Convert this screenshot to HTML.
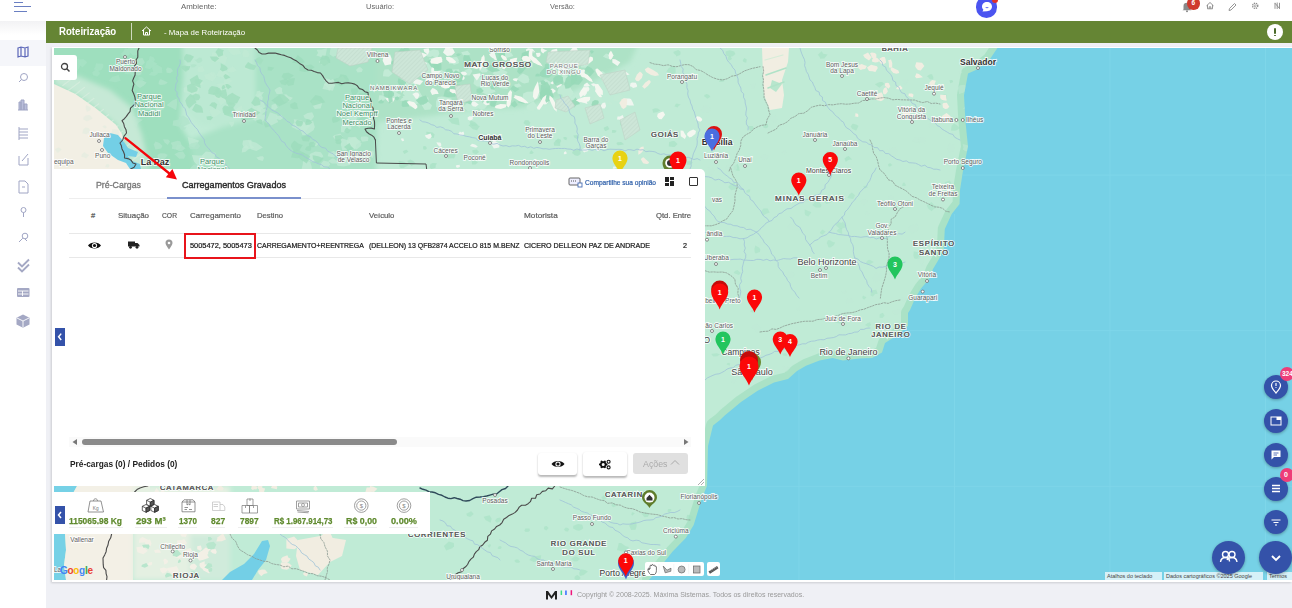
<!DOCTYPE html>
<html><head><meta charset="utf-8">
<style>
*{box-sizing:border-box;margin:0;padding:0}
html,body{width:1292px;height:608px;overflow:hidden;background:#eff0f5;font-family:"Liberation Sans",sans-serif;position:relative}
.abs{position:absolute}
.nw{white-space:nowrap}
#topbar{left:0;top:0;width:1292px;height:21px;background:#fff}
#side{left:0;top:21px;width:46px;height:587px;background:#fff}
#green{left:46px;top:21px;width:1246px;height:22px;background:#658534}
#mapcard{left:52px;top:47px;width:1240px;height:535px;background:#fff;box-shadow:-1px 1px 2px rgba(0,0,0,.15)}
.tb{font-size:8px;color:#666;top:1px}
.panel{left:53px;top:169px;width:652px;height:317px;background:#fff;border-radius:0 5px 0 0}
.th{position:absolute;top:211px;font-size:7.5px;color:#5c5c5c;white-space:nowrap;-webkit-text-stroke:0.2px #5c5c5c}
.td{position:absolute;top:241px;font-size:7.5px;color:#1a1a1a;white-space:nowrap;-webkit-text-stroke:0.22px #1a1a1a}
.fab{position:absolute;width:24px;height:24px;border-radius:50%;background:#3452a9;box-shadow:0 1px 3px rgba(0,0,0,.3)}
.fab svg{position:absolute;left:0;top:0}
.sum{position:absolute;top:515px;font-size:9.5px;font-weight:bold;color:#5f8a2e;white-space:nowrap;-webkit-text-stroke:0.25px #5f8a2e}
.sic{position:absolute;left:15px;width:16px;height:16px}
.uline{position:absolute;top:527px;height:1px;background:#eee}
</style></head><body>
<div id="topbar" class="abs"></div>
<div id="side" class="abs"></div>
<div class="abs" style="left:0;top:21px;width:46px;height:14px;background:linear-gradient(#f2f2f4,#fff)"></div>
<div id="green" class="abs"></div>
<div id="mapcard" class="abs"></div>

<!-- MAP -->
<svg class="abs" style="left:0;top:0" width="1292" height="608" viewBox="0 0 1292 608" font-family="Liberation Sans, sans-serif">
<defs><clipPath id="mc"><rect x="54" y="48" width="1238" height="532"></rect></clipPath></defs>
<g clip-path="url(#mc)">
<rect x="54" y="48" width="1238" height="532" fill="#c0ebd6"></rect>
<defs><filter id="bl" x="-5%" y="-5%" width="110%" height="110%"><feGaussianBlur stdDeviation="2.5"></feGaussianBlur></filter><filter id="bl1"><feGaussianBlur stdDeviation="0.6"></feGaussianBlur></filter><pattern id="hatch" width="3" height="3" patternUnits="userSpaceOnUse" patternTransform="rotate(45)"><rect width="3" height="3" fill="#cde6d8"></rect><line x1="0" y1="0" x2="0" y2="3" stroke="#bdd5c7" stroke-width="0.8"></line></pattern></defs>
<g filter="url(#bl)">
<path d="M40,40 190,40 185,60 182,90 180,125 195,150 200,175 40,175Z" fill="#9edfbe"></path>
<path d="M182,40 262,40 258,80 255,120 230,128 200,125 185,110Z" fill="#bce9d3"></path>
<path d="M255,40 380,40 376,175 195,175 190,140 220,128 256,118Z" fill="#a9e2c6"></path>
<path d="M376,40 640,40 630,62 600,78 560,98 520,108 470,110 430,116 376,122Z" fill="#ade2c6"></path>
</g>
<path d="M249.4,67.8 248.3,69.9 244.7,69.7 244.5,67.2 247.6,64.7Z" fill="#c0ead5" opacity="0.8"></path>
<path d="M216.8,75.9 212.8,81.5 205.4,78.7 203.9,74.8 210.7,73.2Z" fill="#c0ead5" opacity="0.8"></path>
<path d="M299.0,125.7 297.4,127.6 294.5,128.5 291.5,127.0 293.0,124.6 293.9,122.4 296.6,123.4Z" fill="#c0ead5" opacity="0.8"></path>
<path d="M282.0,91.2 283.0,93.4 280.0,93.9 276.7,94.0 274.5,89.9 277.1,88.0 279.6,86.8 282.2,88.3Z" fill="#c0ead5" opacity="0.8"></path>
<path d="M352.2,159.8 350.1,165.0 343.9,166.5 337.7,165.7 335.6,162.1 339.0,157.7 344.6,157.4 349.4,156.5Z" fill="#c0ead5" opacity="0.8"></path>
<path d="M264.0,158.1 262.7,160.9 260.0,160.2 258.7,159.9 256.3,157.4 258.6,157.1 260.2,156.2 263.0,156.2Z" fill="#c0ead5" opacity="0.8"></path>
<path d="M239.8,50.7 241.2,53.6 233.2,55.5 230.5,53.1 227.3,49.1 231.2,46.7 234.6,46.3 238.6,47.5Z" fill="#c0ead5" opacity="0.8"></path>
<path d="M223.5,166.0 223.5,167.2 222.0,168.7 218.9,169.6 218.6,166.0 218.6,164.7 221.0,164.2 225.5,163.9Z" fill="#c0ead5" opacity="0.8"></path>
<path d="M277.8,107.6 274.9,110.2 271.3,108.4 271.6,105.1 275.5,103.6Z" fill="#c0ead5" opacity="0.8"></path>
<path d="M334.9,84.5 333.0,90.8 322.4,88.9 324.6,83.1 333.5,78.7Z" fill="#c0ead5" opacity="0.8"></path>
<path d="M353.9,144.2 350.3,147.3 348.6,149.5 342.2,150.2 340.7,143.7 342.2,138.5 348.7,140.4 350.1,141.6Z" fill="#c0ead5" opacity="0.8"></path>
<path d="M229.1,74.6 225.7,78.3 216.2,76.1 218.6,71.1 223.2,68.8Z" fill="#c0ead5" opacity="0.8"></path>
<path d="M251.7,144.9 254.4,147.8 249.8,148.9 244.0,148.0 242.4,144.2 243.0,140.5 247.0,140.1 251.4,139.8Z" fill="#c0ead5" opacity="0.8"></path>
<path d="M329.4,63.3 325.7,64.7 321.4,65.1 318.8,62.0 321.0,59.7 326.2,59.5Z" fill="#c0ead5" opacity="0.8"></path>
<path d="M277.1,119.8 278.3,122.1 270.1,125.9 265.3,123.6 266.9,119.7 268.7,115.8 269.9,112.3 277.3,114.8Z" fill="#c0ead5" opacity="0.8"></path>
<path d="M337.6,153.7 333.9,157.5 327.6,156.2 328.8,152.2 333.8,151.0Z" fill="#c0ead5" opacity="0.8"></path>
<path d="M322.3,102.7 320.6,108.5 314.8,109.1 313.6,106.9 311.5,103.6 311.6,100.2 316.4,99.9 319.0,100.9Z" fill="#c0ead5" opacity="0.8"></path>
<path d="M337.4,161.8 336.3,163.5 332.0,163.6 328.1,161.4 329.3,160.2 332.0,158.4 334.1,158.7Z" fill="#c0ead5" opacity="0.8"></path>
<path d="M326.5,51.3 325.6,55.5 324.1,57.9 316.3,55.6 318.1,53.1 316.6,49.8 321.7,49.4 326.9,48.2Z" fill="#c0ead5" opacity="0.8"></path>
<path d="M346.3,80.6 343.4,83.6 337.8,83.1 336.1,79.6 337.8,78.4 342.9,75.9Z" fill="#c0ead5" opacity="0.8"></path>
<path d="M232.8,80.8 227.5,84.6 223.7,84.5 224.0,79.9 227.6,78.5Z" fill="#c0ead5" opacity="0.8"></path>
<path d="M228.7,86.0 225.8,90.0 220.2,92.7 220.7,88.7 216.2,84.0 222.4,83.3 227.2,82.7Z" fill="#c0ead5" opacity="0.8"></path>
<path d="M314.8,126.9 313.5,130.3 306.3,135.0 302.4,135.1 298.6,125.1 300.6,124.1 310.3,121.5 313.1,121.0Z" fill="#c0ead5" opacity="0.8"></path>
<path d="M261.2,110.1 261.1,112.3 257.8,114.0 250.1,113.3 253.8,108.7 257.4,105.9 259.8,106.0Z" fill="#c0ead5" opacity="0.8"></path>
<path d="M203.7,83.3 201.9,85.1 198.9,85.5 196.4,83.4 197.0,79.7 202.9,81.1Z" fill="#c0ead5" opacity="0.8"></path>
<path d="M361.6,143.3 360.7,146.3 356.5,149.4 349.0,146.0 346.5,142.8 348.0,137.2 355.8,136.7 358.2,140.6Z" fill="#c0ead5" opacity="0.8"></path>
<path d="M318.9,143.4 316.1,146.4 314.4,145.6 312.2,144.9 313.8,142.5 316.4,142.7Z" fill="#c0ead5" opacity="0.8"></path>
<path d="M369.6,154.4 364.1,159.0 356.7,160.2 355.3,153.3 365.8,151.7Z" fill="#c0ead5" opacity="0.8"></path>
<path d="M265.5,107.0 261.7,108.9 257.0,113.2 251.4,109.7 253.2,106.0 254.8,100.5 263.4,102.0Z" fill="#c0ead5" opacity="0.8"></path>
<path d="M247.7,111.9 243.4,113.6 241.6,115.0 238.1,113.2 232.8,110.9 238.0,107.5 242.1,105.3 242.1,108.5Z" fill="#c0ead5" opacity="0.8"></path>
<path d="M330.5,81.4 328.8,83.9 326.7,84.6 325.1,81.7 323.6,80.5 326.3,78.6 328.4,78.7Z" fill="#c0ead5" opacity="0.8"></path>
<path d="M249.2,148.8 245.2,151.9 241.7,152.6 242.4,148.1 246.5,144.5Z" fill="#c0ead5" opacity="0.8"></path>
<path d="M204.3,158.7 204.1,164.8 199.4,167.5 193.9,161.6 191.9,154.9 198.3,155.6 204.6,155.5Z" fill="#c0ead5" opacity="0.8"></path>
<path d="M359.1,113.7 355.7,120.9 348.2,119.1 342.6,117.3 346.9,111.5 353.7,111.3Z" fill="#c0ead5" opacity="0.8"></path>
<path d="M330.3,164.6 327.3,167.5 324.4,167.7 319.7,167.4 321.1,163.4 323.5,160.6 328.5,161.8Z" fill="#c0ead5" opacity="0.8"></path>
<path d="M237.0,70.3 232.7,72.6 227.6,71.9 228.9,68.7 232.3,66.3Z" fill="#c0ead5" opacity="0.8"></path>
<path d="M283.5,117.8 280.8,119.7 279.4,120.0 276.7,119.1 276.3,115.4 279.6,116.1 281.2,114.8Z" fill="#c0ead5" opacity="0.8"></path>
<path d="M358.9,105.7 357.2,108.2 354.6,107.5 354.1,107.2 352.0,105.8 353.6,103.6 355.5,103.2 357.2,104.2Z" fill="#c0ead5" opacity="0.8"></path>
<path d="M199.2,140.8 194.1,147.4 189.6,146.2 188.6,141.8 187.7,137.1 194.1,138.7Z" fill="#c0ead5" opacity="0.8"></path>
<path d="M342.2,49.4 338.2,54.8 333.1,56.8 329.5,54.3 330.6,48.0 330.9,42.1 339.0,47.0Z" fill="#c0ead5" opacity="0.8"></path>
<path d="M231.7,99.3 231.3,102.9 228.1,104.1 224.4,101.0 222.9,98.9 226.6,96.2 229.8,97.9Z" fill="#c0ead5" opacity="0.8"></path>
<path d="M335.4,85.9 331.5,87.5 329.0,91.4 327.6,87.4 323.8,84.5 326.7,81.9 329.3,79.0 332.1,82.2Z" fill="#c0ead5" opacity="0.8"></path>
<path d="M204.5,70.5 203.2,71.9 198.6,72.0 197.3,69.8 197.8,67.8 202.3,65.8Z" fill="#c0ead5" opacity="0.8"></path>
<path d="M212.6,164.3 209.6,166.2 206.3,166.1 203.8,163.7 205.1,160.0 211.1,160.0Z" fill="#c0ead5" opacity="0.8"></path>
<path d="M234.0,123.4 233.3,125.5 231.5,126.9 230.6,125.3 229.0,123.1 229.3,122.1 231.9,121.8 233.8,121.2Z" fill="#c0ead5" opacity="0.8"></path>
<path d="M361.9,124.4 359.3,128.0 357.3,126.0 356.7,123.5 360.3,123.4Z" fill="#c0ead5" opacity="0.8"></path>
<path d="M342.7,136.7 341.8,142.1 336.2,140.7 332.7,136.6 334.8,135.0 340.3,133.6Z" fill="#c0ead5" opacity="0.8"></path>
<path d="M374.0,153.7 372.8,158.0 368.6,155.9 367.3,152.2 373.3,150.5Z" fill="#c0ead5" opacity="0.8"></path>
<path d="M351.7,127.8 348.4,132.5 341.1,132.2 340.9,126.5 347.6,121.0Z" fill="#c0ead5" opacity="0.8"></path>
<path d="M227.2,57.7 225.1,64.2 218.0,61.5 211.4,61.4 212.0,52.3 217.5,52.8 223.4,53.2Z" fill="#c0ead5" opacity="0.8"></path>
<path d="M374.4,119.6 372.5,123.1 366.8,119.7 365.8,116.1 370.5,115.4Z" fill="#c0ead5" opacity="0.8"></path>
<path d="M215.8,74.5 213.6,76.7 211.4,76.2 210.0,74.6 208.9,73.7 211.2,71.9 214.4,72.3Z" fill="#c0ead5" opacity="0.8"></path>
<path d="M221.3,112.3 216.3,116.4 212.9,117.6 209.9,112.2 210.0,109.7 218.0,109.6Z" fill="#c0ead5" opacity="0.8"></path>
<path d="M262.7,97.2 262.2,101.5 254.4,101.1 256.2,96.7 259.9,92.6Z" fill="#c0ead5" opacity="0.8"></path>
<path d="M266.3,116.7 264.2,120.2 260.6,122.6 252.3,119.6 255.7,114.9 260.3,114.1 265.0,114.8Z" fill="#c0ead5" opacity="0.8"></path>
<path d="M310.3,125.7 305.2,131.8 295.4,129.2 293.8,119.2 301.2,120.3Z" fill="#c0ead5" opacity="0.8"></path>
<path d="M267.4,110.0 263.0,113.5 259.6,115.9 256.7,113.8 256.6,111.5 256.5,107.7 261.8,106.9 263.3,108.7Z" fill="#c0ead5" opacity="0.8"></path>
<path d="M264.0,92.1 261.6,95.4 258.6,97.1 255.0,95.4 256.5,93.5 256.4,91.6 259.6,90.4 260.8,92.2Z" fill="#c0ead5" opacity="0.8"></path>
<path d="M214.3,158.8 213.7,162.8 207.4,162.3 200.1,160.7 202.3,154.9 205.8,151.6 215.8,152.7Z" fill="#c0ead5" opacity="0.8"></path>
<path d="M362.8,69.2 361.8,72.0 357.6,72.4 356.0,70.0 358.4,67.6 360.2,67.1Z" fill="#c0ead5" opacity="0.8"></path>
<path d="M249.7,54.6 248.3,57.3 243.0,56.8 242.5,53.9 243.5,49.1 248.0,50.8Z" fill="#c0ead5" opacity="0.8"></path>
<path d="M323.4,156.2 319.0,160.5 311.5,161.9 307.2,159.8 310.3,153.8 315.4,151.6 320.9,152.3Z" fill="#c0ead5" opacity="0.8"></path>
<path d="M311.7,166.7 311.9,170.3 305.4,170.9 301.4,169.7 302.7,164.4 303.0,161.0 310.1,161.4Z" fill="#c0ead5" opacity="0.8"></path>
<path d="M293.0,97.8 289.2,101.4 284.2,102.1 283.3,100.8 279.7,95.6 286.2,94.3 288.3,96.2Z" fill="#c0ead5" opacity="0.8"></path>
<path d="M314.1,116.6 311.3,120.2 307.5,119.2 304.7,118.3 303.3,115.5 307.6,113.1 312.2,112.3Z" fill="#c0ead5" opacity="0.8"></path>
<path d="M228.5,97.8 226.1,101.0 220.4,105.7 219.0,100.9 213.9,97.3 216.2,93.9 222.3,94.2 225.5,94.9Z" fill="#c0ead5" opacity="0.8"></path>
<path d="M199.3,88.8 197.8,94.6 191.1,93.8 183.7,92.2 183.9,87.7 189.7,85.8 196.3,84.0Z" fill="#c0ead5" opacity="0.8"></path>
<path d="M368.6,137.8 367.8,140.9 362.0,141.8 360.7,138.8 360.9,136.7 363.3,136.4 366.9,136.6Z" fill="#c0ead5" opacity="0.8"></path>
<path d="M361.1,141.5 356.3,144.8 355.1,149.7 350.3,145.8 349.3,144.0 348.8,138.8 354.0,137.2 356.5,138.5Z" fill="#c0ead5" opacity="0.8"></path>
<path d="M262.9,147.6 256.3,151.0 250.8,149.2 247.7,140.1 256.3,142.8Z" fill="#c0ead5" opacity="0.8"></path>
<path d="M186.3,127.6 184.8,129.5 182.7,129.8 181.1,129.9 179.8,128.0 179.2,126.1 182.6,125.1 184.1,127.3Z" fill="#b0e4ca" opacity="0.8"></path>
<path d="M163.1,107.5 161.3,110.9 155.6,110.3 156.7,106.3 159.6,103.2Z" fill="#b0e4ca" opacity="0.8"></path>
<path d="M202.4,60.8 200.1,62.8 197.6,62.9 196.8,61.7 194.3,59.8 196.6,59.4 199.4,57.5 201.5,58.0Z" fill="#b0e4ca" opacity="0.8"></path>
<path d="M173.0,71.1 170.4,73.3 168.2,73.1 166.6,72.8 166.1,69.2 167.7,67.2 171.2,68.5Z" fill="#b0e4ca" opacity="0.8"></path>
<path d="M170.1,141.2 167.7,145.1 164.6,142.6 163.1,139.3 168.2,139.4Z" fill="#b0e4ca" opacity="0.8"></path>
<path d="M167.9,155.0 164.0,159.5 158.4,159.7 157.3,155.1 160.2,153.2 165.0,153.5Z" fill="#b0e4ca" opacity="0.8"></path>
<path d="M202.4,166.4 198.7,173.6 193.2,171.2 189.9,168.5 193.5,164.7 198.6,164.6Z" fill="#b0e4ca" opacity="0.8"></path>
<path d="M162.4,145.7 161.3,148.4 155.4,149.4 153.7,144.6 155.4,141.5 159.6,142.9Z" fill="#b0e4ca" opacity="0.8"></path>
<path d="M185.6,155.4 184.0,158.8 179.2,158.8 174.4,154.2 178.7,152.0 182.9,151.4Z" fill="#b0e4ca" opacity="0.8"></path>
<path d="M177.2,103.9 176.1,110.3 172.1,107.9 166.5,105.2 172.4,100.6 176.8,98.5Z" fill="#b0e4ca" opacity="0.8"></path>
<path d="M167.9,82.5 165.0,84.6 161.0,84.9 158.6,84.3 158.8,81.7 160.0,79.2 161.0,79.2 163.9,80.4Z" fill="#b0e4ca" opacity="0.8"></path>
<path d="M163.3,104.7 163.8,109.4 156.0,110.2 154.6,106.1 152.9,104.1 156.5,101.1 161.9,101.5Z" fill="#b0e4ca" opacity="0.8"></path>
<path d="M185.6,148.3 181.8,151.0 178.8,151.1 175.4,148.9 177.4,144.5 181.8,145.3Z" fill="#b0e4ca" opacity="0.8"></path>
<path d="M153.3,106.8 150.7,109.4 145.9,109.3 144.7,105.8 146.8,103.5 149.4,103.0Z" fill="#b0e4ca" opacity="0.8"></path>
<path d="M143.0,119.7 137.9,123.3 136.5,127.2 131.7,122.2 132.0,120.3 133.4,115.8 138.2,118.2Z" fill="#b0e4ca" opacity="0.8"></path>
<path d="M200.2,146.1 197.9,149.3 190.4,149.3 188.3,146.0 191.2,143.5 197.1,142.1Z" fill="#b0e4ca" opacity="0.8"></path>
<path d="M141.7,72.2 141.3,74.2 139.0,75.6 135.5,74.9 136.1,72.4 136.2,70.4 138.3,69.5 140.9,71.4Z" fill="#b0e4ca" opacity="0.8"></path>
<path d="M163.2,163.5 160.5,165.2 155.0,165.6 157.7,162.4 160.6,160.6Z" fill="#b0e4ca" opacity="0.8"></path>
<path d="M146.7,82.5 143.9,85.6 140.0,88.0 137.3,86.2 134.8,83.2 137.8,80.2 141.0,79.4 143.1,80.7Z" fill="#b0e4ca" opacity="0.8"></path>
<path d="M170.3,164.9 170.3,168.3 164.9,170.9 162.2,170.0 159.7,164.2 161.3,163.4 164.2,162.0 170.8,162.8Z" fill="#b0e4ca" opacity="0.8"></path>
<path d="M181.9,145.6 179.9,148.7 177.0,149.7 171.8,148.8 172.4,145.9 170.7,142.8 177.5,140.8 180.2,141.3Z" fill="#b0e4ca" opacity="0.8"></path>
<path d="M188.7,120.1 190.2,123.6 182.9,126.8 179.6,122.8 179.2,117.2 183.2,115.4 187.3,118.2Z" fill="#b0e4ca" opacity="0.8"></path>
<path d="M180.7,124.0 179.1,126.7 176.7,126.2 172.6,125.4 173.3,120.5 179.2,119.6Z" fill="#b0e4ca" opacity="0.8"></path>
<path d="M144.9,62.6 142.1,65.4 137.1,63.9 135.4,61.5 136.9,58.8 142.5,58.1Z" fill="#b0e4ca" opacity="0.8"></path>
<path d="M197.0,65.0 194.2,67.2 191.5,67.5 190.6,64.5 194.5,64.3Z" fill="#b0e4ca" opacity="0.8"></path>
<path d="M219.3,89.2 218.3,93.1 213.8,95.1 208.3,93.7 208.5,90.3 210.0,87.5 211.9,85.9 217.3,87.1Z" fill="#a3dfc0" opacity="0.9"></path>
<path d="M235.6,111.1 233.0,117.4 224.2,114.8 223.2,106.4 232.6,107.0Z" fill="#a3dfc0" opacity="0.9"></path>
<path d="M189.2,69.3 186.8,70.3 186.1,72.0 182.9,69.4 181.0,67.4 182.2,65.9 185.1,65.5 187.6,66.5Z" fill="#a3dfc0" opacity="0.9"></path>
<path d="M217.3,104.3 215.8,109.3 212.3,106.8 209.3,105.4 211.8,102.5 214.6,102.2Z" fill="#a3dfc0" opacity="0.9"></path>
<path d="M227.8,68.3 226.9,70.1 222.6,71.5 219.9,69.6 220.9,66.9 220.7,63.3 226.0,65.9Z" fill="#a3dfc0" opacity="0.9"></path>
<path d="M235.8,104.3 233.7,107.2 230.6,109.3 227.9,105.0 228.8,101.6 233.5,103.0Z" fill="#a3dfc0" opacity="0.9"></path>
<path d="M221.4,90.9 220.2,93.1 217.5,94.7 214.8,90.8 217.2,87.4 219.6,88.2Z" fill="#a3dfc0" opacity="0.9"></path>
<path d="M219.2,58.5 215.0,62.0 211.9,60.3 209.8,56.6 216.6,56.4Z" fill="#a3dfc0" opacity="0.9"></path>
<path d="M189.8,68.0 188.9,69.7 187.1,70.7 185.0,68.6 185.4,67.5 186.8,66.3 190.3,66.1Z" fill="#a3dfc0" opacity="0.9"></path>
<path d="M221.0,95.3 220.3,97.4 218.6,98.1 216.1,97.0 214.9,95.3 213.1,93.4 217.1,91.1 222.8,93.3Z" fill="#a3dfc0" opacity="0.9"></path>
<path d="M199.8,81.1 200.7,87.9 191.4,84.3 189.7,79.4 197.3,74.7Z" fill="#a3dfc0" opacity="0.9"></path>
<path d="M202.9,80.8 200.4,83.4 196.4,84.3 194.7,81.0 195.3,78.9 200.2,79.2Z" fill="#a3dfc0" opacity="0.9"></path>
<path d="M227.1,94.8 226.2,99.7 221.5,97.2 219.3,94.7 220.7,90.8 225.7,89.0Z" fill="#a3dfc0" opacity="0.9"></path>
<path d="M263.3,60.1 260.4,64.6 254.7,61.2 255.8,58.9 259.4,57.1Z" fill="#a3dfc0" opacity="0.9"></path>
<path d="M202.5,108.5 203.2,112.8 196.1,112.5 192.0,110.0 195.6,103.4 201.0,105.9Z" fill="#a3dfc0" opacity="0.9"></path>
<path d="M196.5,102.6 194.1,104.1 189.2,108.5 186.8,105.5 185.3,100.7 186.6,98.0 190.3,93.9 193.7,95.9Z" fill="#a3dfc0" opacity="0.9"></path>
<path d="M233.4,109.9 232.9,113.1 225.4,115.0 223.0,112.6 222.3,108.2 225.0,105.3 232.3,107.7Z" fill="#a3dfc0" opacity="0.9"></path>
<path d="M225.6,87.6 224.8,88.3 222.2,89.8 221.6,87.6 222.6,85.5 224.2,84.7Z" fill="#a3dfc0" opacity="0.9"></path>
<path d="M232.0,87.3 230.2,87.5 228.2,89.2 226.9,88.0 225.9,86.7 225.4,84.1 227.5,83.9 230.1,85.5Z" fill="#a3dfc0" opacity="0.9"></path>
<path d="M253.4,115.9 254.2,118.8 248.4,119.7 241.9,120.2 239.4,114.8 241.3,110.7 246.4,111.3 250.7,112.8Z" fill="#a3dfc0" opacity="0.9"></path>
<path d="M200.3,97.4 198.8,100.0 196.1,100.6 193.8,98.4 190.7,96.6 195.7,93.4 199.4,94.7Z" fill="#a3dfc0" opacity="0.9"></path>
<path d="M260.4,112.5 253.1,117.7 247.5,113.4 247.0,110.5 251.4,107.7Z" fill="#a3dfc0" opacity="0.9"></path>
<path d="M194.0,56.8 190.2,62.2 187.5,62.4 184.2,59.3 184.0,57.2 186.1,53.9 190.3,54.8Z" fill="#a3dfc0" opacity="0.9"></path>
<path d="M197.9,88.5 197.0,91.2 191.7,92.9 187.5,91.1 187.2,88.6 187.0,85.6 191.2,83.5 193.9,84.8Z" fill="#a3dfc0" opacity="0.9"></path>
<path d="M256.6,66.0 254.0,70.1 249.6,69.3 245.0,67.6 245.1,66.0 248.1,62.1 251.3,63.9Z" fill="#a3dfc0" opacity="0.9"></path>
<path d="M260.3,102.0 260.3,104.8 254.7,106.1 251.1,102.9 255.2,96.6 258.9,97.8Z" fill="#a3dfc0" opacity="0.9"></path>
<path d="M240.3,97.3 237.0,103.3 230.4,104.8 226.8,104.2 225.2,97.9 227.5,95.8 232.2,92.8 236.2,95.3Z" fill="#a3dfc0" opacity="0.9"></path>
<path d="M230.5,77.4 228.2,78.3 225.8,79.6 224.4,77.9 223.3,76.1 225.4,74.0 228.1,75.6Z" fill="#a3dfc0" opacity="0.9"></path>
<path d="M213.2,117.6 210.7,120.2 207.1,119.8 206.4,116.4 210.6,116.1Z" fill="#a3dfc0" opacity="0.9"></path>
<path d="M222.8,52.1 223.2,55.3 218.6,57.1 216.4,53.4 215.4,51.9 218.2,48.3 223.9,50.3Z" fill="#a3dfc0" opacity="0.9"></path>
<path d="M343.2,137.7 338.7,140.9 335.2,140.9 335.0,135.7 341.0,135.0Z" fill="#9cdcbc" opacity="0.8"></path>
<path d="M314.6,67.2 308.9,71.0 304.9,71.9 299.4,70.7 299.8,65.1 304.2,65.7 311.0,64.6Z" fill="#9cdcbc" opacity="0.8"></path>
<path d="M369.2,97.2 366.9,101.3 360.7,100.3 359.0,93.2 366.9,93.1Z" fill="#9cdcbc" opacity="0.8"></path>
<path d="M274.3,67.7 271.3,70.7 267.6,70.3 267.9,66.7 271.2,67.0Z" fill="#9cdcbc" opacity="0.8"></path>
<path d="M289.5,81.5 285.3,85.2 281.5,84.3 279.4,81.0 286.3,78.4Z" fill="#9cdcbc" opacity="0.8"></path>
<path d="M312.3,122.5 309.8,124.6 305.8,125.3 305.3,123.3 306.8,119.1 309.5,119.8Z" fill="#9cdcbc" opacity="0.8"></path>
<path d="M340.4,119.8 338.2,121.2 337.0,121.9 333.0,122.9 331.9,119.5 332.6,117.2 336.0,115.9 337.8,117.0Z" fill="#9cdcbc" opacity="0.8"></path>
<path d="M358.3,91.4 356.3,94.0 352.9,95.9 351.1,91.8 351.2,88.6 357.3,88.5Z" fill="#9cdcbc" opacity="0.8"></path>
<path d="M315.7,143.5 314.3,147.0 309.9,147.4 308.8,143.8 310.3,142.1 313.3,142.0Z" fill="#9cdcbc" opacity="0.8"></path>
<path d="M368.3,119.1 368.0,122.5 361.9,122.0 357.0,120.5 360.4,117.9 362.7,116.4 365.3,114.8Z" fill="#9cdcbc" opacity="0.8"></path>
<path d="M341.6,141.8 340.4,144.3 336.9,144.0 335.2,142.3 336.8,139.7 340.8,139.4Z" fill="#9cdcbc" opacity="0.8"></path>
<path d="M310.2,156.3 306.8,163.4 301.0,159.8 297.2,156.6 302.6,152.2 307.3,154.5Z" fill="#9cdcbc" opacity="0.8"></path>
<path d="M294.3,81.1 293.7,84.7 288.5,86.0 285.7,83.1 288.8,78.7 295.0,78.1Z" fill="#9cdcbc" opacity="0.8"></path>
<path d="M349.2,80.3 347.3,83.0 340.6,86.3 336.0,82.7 333.2,79.3 339.0,77.8 340.5,74.3 346.3,75.2Z" fill="#9cdcbc" opacity="0.8"></path>
<path d="M311.0,136.7 308.6,141.5 302.8,140.9 301.2,137.1 304.3,136.0 308.0,135.3Z" fill="#9cdcbc" opacity="0.8"></path>
<path d="M323.7,158.5 318.6,163.5 315.7,162.3 313.0,159.0 312.6,155.2 318.3,156.2Z" fill="#9cdcbc" opacity="0.8"></path>
<path d="M270.9,125.5 268.7,126.8 265.4,127.4 264.1,124.5 264.3,122.2 268.1,122.4Z" fill="#9cdcbc" opacity="0.8"></path>
<path d="M302.7,145.1 299.7,149.9 294.4,152.5 292.9,149.8 290.9,146.5 291.2,144.2 294.4,140.5 298.7,143.7Z" fill="#9cdcbc" opacity="0.8"></path>
<path d="M297.2,105.4 298.3,108.8 293.6,109.2 290.4,107.4 290.2,104.2 294.8,102.0 297.2,103.4Z" fill="#9cdcbc" opacity="0.8"></path>
<path d="M304.9,62.1 302.1,63.2 298.7,63.5 291.8,62.4 294.7,59.6 297.7,55.0 302.1,58.7Z" fill="#9cdcbc" opacity="0.8"></path>
<path d="M353.4,148.3 351.7,149.7 346.7,152.1 347.0,149.3 343.9,147.0 349.5,142.9 351.0,146.1Z" fill="#9cdcbc" opacity="0.8"></path>
<path d="M289.9,100.3 285.6,103.3 279.3,106.2 271.5,100.4 279.5,94.4 284.1,94.9Z" fill="#9cdcbc" opacity="0.8"></path>
<path d="M261.9,121.6 262.6,124.9 260.3,123.7 257.6,123.1 256.7,121.7 256.0,120.5 260.2,119.2 262.3,120.0Z" fill="#9cdcbc" opacity="0.8"></path>
<path d="M325.2,102.3 319.0,104.1 312.8,105.7 309.9,101.3 315.7,95.0 321.0,96.6Z" fill="#9cdcbc" opacity="0.8"></path>
<path d="M304.8,153.4 297.8,158.2 291.0,157.5 293.1,150.7 297.9,149.4Z" fill="#9cdcbc" opacity="0.8"></path>
<path d="M293.8,75.5 289.3,79.0 284.9,79.7 281.5,76.8 283.5,73.3 288.6,72.7Z" fill="#9cdcbc" opacity="0.8"></path>
<path d="M330.1,60.1 330.2,62.8 324.4,65.8 319.9,63.7 320.3,59.4 322.2,55.6 327.3,56.1 328.8,57.2Z" fill="#9cdcbc" opacity="0.8"></path>
<path d="M302.8,122.9 302.4,124.8 301.0,126.6 297.0,126.0 295.4,122.7 296.9,120.0 301.1,120.8 303.1,121.4Z" fill="#9cdcbc" opacity="0.8"></path>
<path d="M350.8,130.1 348.4,133.2 347.0,133.2 344.2,132.1 345.0,129.2 347.0,127.2 348.1,128.6Z" fill="#9cdcbc" opacity="0.8"></path>
<path d="M311.3,148.4 310.6,150.5 309.1,151.1 306.8,150.4 305.0,149.6 306.5,146.7 310.0,145.4 310.5,146.9Z" fill="#9cdcbc" opacity="0.8"></path>
<path d="M81.2,64.0 77.5,70.9 71.7,68.3 69.0,62.3 78.7,58.5Z" fill="#a8e2c6" opacity="0.8"></path>
<path d="M130.8,51.9 129.4,54.9 124.7,56.8 122.9,54.4 123.8,50.0 125.6,48.4 129.2,49.4Z" fill="#a8e2c6" opacity="0.8"></path>
<path d="M161.8,67.3 162.5,73.1 153.6,73.0 152.1,68.1 153.2,62.2 159.2,65.9Z" fill="#a8e2c6" opacity="0.8"></path>
<path d="M87.4,62.2 82.5,67.6 78.7,64.3 78.2,59.8 83.5,59.0Z" fill="#a8e2c6" opacity="0.8"></path>
<path d="M103.4,67.0 101.3,70.1 98.5,71.1 93.5,69.3 95.3,67.1 96.0,63.2 98.3,63.4 103.3,63.8Z" fill="#a8e2c6" opacity="0.8"></path>
<path d="M129.0,54.5 125.5,56.2 124.3,58.6 121.5,55.3 121.0,53.2 124.8,50.7 128.4,51.4Z" fill="#a8e2c6" opacity="0.8"></path>
<path d="M154.7,59.3 154.4,61.5 150.4,61.6 149.2,59.7 149.9,55.8 154.0,57.6Z" fill="#a8e2c6" opacity="0.8"></path>
<path d="M144.8,79.5 141.6,80.5 138.5,80.8 138.4,76.8 142.0,77.3Z" fill="#a8e2c6" opacity="0.8"></path>
<path d="M100.0,72.8 99.7,74.2 97.3,76.4 93.0,75.3 92.2,72.3 93.9,70.9 97.2,68.7 98.6,71.4Z" fill="#a8e2c6" opacity="0.8"></path>
<path d="M130.1,71.1 130.3,74.6 127.1,74.2 124.1,73.4 125.6,70.5 127.8,68.8 129.4,69.0Z" fill="#a8e2c6" opacity="0.8"></path>
<path d="M157.2,63.6 149.6,69.2 144.8,67.9 146.7,61.5 149.6,59.3Z" fill="#a8e2c6" opacity="0.8"></path>
<path d="M135.3,73.4 133.9,76.7 131.4,75.1 129.7,74.1 129.8,71.9 131.4,70.0 135.7,71.0Z" fill="#a8e2c6" opacity="0.8"></path>
<path d="M158.3,73.8 154.5,76.1 148.7,75.1 151.3,71.9 155.4,71.5Z" fill="#a8e2c6" opacity="0.8"></path>
<path d="M137.2,50.1 138.5,54.6 133.1,55.8 129.5,52.0 126.0,52.0 128.4,48.0 132.0,46.1 137.3,45.6Z" fill="#a8e2c6" opacity="0.8"></path>
<path d="M120.7,80.7 115.7,82.2 113.5,81.9 108.6,81.0 112.2,76.8 118.6,74.9Z" fill="#a8e2c6" opacity="0.8"></path>
<path d="M439.3,53.5 437.4,57.8 432.9,56.4 427.7,51.4 433.5,49.4 438.4,50.3Z" fill="#c2ebd6"></path>
<path d="M462.3,78.6 460.9,80.5 457.0,81.8 454.3,79.9 456.2,78.8 458.5,76.2 460.0,76.8Z" fill="#c2ebd6"></path>
<path d="M448.0,73.2 442.5,77.8 432.3,77.3 437.3,73.2 441.2,69.9Z" fill="#c2ebd6"></path>
<path d="M551.6,82.8 548.5,86.5 538.0,84.0 541.6,80.4 546.0,79.3Z" fill="#c2ebd6"></path>
<path d="M455.3,105.8 451.7,108.1 446.5,109.8 444.6,105.9 447.1,100.8 454.0,102.5Z" fill="#c2ebd6"></path>
<path d="M489.2,67.5 486.8,72.3 482.6,72.4 481.1,71.4 478.8,67.2 480.0,64.4 484.8,64.4 486.4,65.0Z" fill="#c2ebd6"></path>
<path d="M395.4,91.0 392.2,94.5 387.8,94.3 382.6,95.2 382.3,91.5 386.5,88.2 389.3,85.8 393.3,87.3Z" fill="#c2ebd6"></path>
<path d="M485.8,81.0 483.9,83.3 482.0,83.7 479.7,81.0 479.4,79.3 482.5,78.9 484.4,79.0Z" fill="#c2ebd6"></path>
<path d="M438.1,59.0 436.0,62.5 431.2,63.5 430.9,60.3 428.7,58.4 433.2,57.7 434.6,57.6Z" fill="#c2ebd6"></path>
<path d="M411.1,69.8 408.8,74.9 405.8,74.4 401.1,71.9 401.3,69.6 405.2,66.9 408.9,67.7Z" fill="#c2ebd6"></path>
<path d="M472.5,71.1 469.6,75.6 462.5,75.3 464.6,70.5 469.9,67.9Z" fill="#c2ebd6"></path>
<path d="M513.4,55.9 510.0,57.1 506.3,58.1 504.4,54.8 505.4,51.6 511.0,52.6Z" fill="#c2ebd6"></path>
<path d="M487.8,84.9 484.1,86.7 476.9,86.4 473.5,83.7 474.8,76.9 485.4,77.6Z" fill="#c2ebd6"></path>
<path d="M416.5,82.4 411.3,84.4 408.3,86.1 405.1,84.4 403.5,83.3 402.5,78.0 407.4,78.6 411.9,79.2Z" fill="#c2ebd6"></path>
<path d="M407.2,98.4 404.0,100.8 400.1,100.7 401.7,98.2 404.7,97.0Z" fill="#c2ebd6"></path>
<path d="M537.6,106.9 533.0,111.0 526.6,109.4 526.7,105.7 533.3,101.0Z" fill="#c2ebd6"></path>
<path d="M529.2,79.2 528.7,82.6 524.4,83.6 522.1,82.7 516.5,79.1 520.1,75.4 522.8,73.4 528.1,76.1Z" fill="#c2ebd6"></path>
<path d="M567.5,87.7 564.6,89.8 563.6,90.6 562.1,89.5 561.5,86.9 562.9,85.9 564.8,87.0Z" fill="#c2ebd6"></path>
<path d="M428.7,100.1 427.4,101.5 423.9,100.7 424.8,98.0 428.2,97.3Z" fill="#c2ebd6"></path>
<path d="M459.2,62.8 458.3,63.6 453.7,65.1 452.8,62.4 453.8,59.4 458.1,60.6Z" fill="#c2ebd6"></path>
<path d="M399.0,90.2 395.1,93.8 391.1,92.0 392.3,89.2 395.6,88.3Z" fill="#c2ebd6"></path>
<path d="M629.8,87.7 627.4,91.2 624.2,90.7 620.4,88.7 623.0,85.0 627.5,84.1Z" fill="#c2ebd6"></path>
<path d="M416.7,103.2 413.5,107.8 409.1,106.0 408.8,100.9 412.7,101.5Z" fill="#c2ebd6"></path>
<path d="M422.1,65.2 418.6,67.6 415.0,68.7 412.4,66.1 413.2,62.2 418.3,62.2Z" fill="#c2ebd6"></path>
<path d="M415.9,98.1 410.8,101.3 405.6,100.2 402.4,96.5 410.3,92.8Z" fill="#c2ebd6"></path>
<path d="M491.2,98.8 491.0,102.8 483.7,101.6 485.1,95.9 488.3,96.2Z" fill="#c2ebd6"></path>
<path d="M612.0,56.9 612.0,58.8 609.4,59.3 605.7,58.1 602.9,56.6 606.1,53.5 608.6,54.2 610.0,54.9Z" fill="#c2ebd6"></path>
<path d="M401.0,95.0 397.2,98.8 392.6,100.1 389.0,95.9 392.8,92.9 396.5,92.8Z" fill="#c2ebd6"></path>
<path d="M540.3,94.3 537.4,98.9 530.4,97.2 531.0,93.8 538.0,90.4Z" fill="#c2ebd6"></path>
<path d="M435.1,66.7 433.0,71.2 429.1,74.7 423.6,70.7 420.4,66.9 425.0,65.8 425.1,62.0 430.7,63.8Z" fill="#c2ebd6"></path>
<path d="M470.5,54.3 466.2,56.0 463.0,55.2 461.2,52.3 467.6,50.8Z" fill="#c2ebd6"></path>
<path d="M423.8,99.1 418.6,103.3 413.5,105.0 406.4,100.0 406.0,95.6 413.2,90.6 419.2,91.1Z" fill="#c2ebd6"></path>
<path d="M588.8,64.8 586.0,67.8 581.1,67.5 580.5,65.6 582.4,61.8 586.9,62.5Z" fill="#c2ebd6"></path>
<path d="M483.5,105.8 481.9,110.3 476.3,107.1 475.0,105.0 473.6,100.8 481.4,100.5Z" fill="#c2ebd6"></path>
<path d="M502.0,69.3 500.9,71.0 497.2,70.7 496.1,68.9 497.7,67.7 500.2,66.8Z" fill="#c2ebd6"></path>
<path d="M481.1,102.8 482.0,104.5 477.3,106.2 475.0,104.4 473.8,101.1 476.2,99.9 478.2,99.7 479.4,100.7Z" fill="#c2ebd6"></path>
<path d="M432.0,105.3 430.3,109.5 424.7,110.0 422.7,106.7 421.3,104.3 421.5,101.9 425.1,101.3 428.4,101.9Z" fill="#c2ebd6"></path>
<path d="M570.6,89.8 564.5,93.4 557.1,92.5 559.2,86.5 568.5,83.2Z" fill="#c2ebd6"></path>
<path d="M573.8,93.5 569.8,98.1 562.9,99.1 561.4,88.7 570.4,87.4Z" fill="#c2ebd6"></path>
<path d="M639.2,86.5 636.4,90.0 632.3,89.3 629.7,86.7 633.5,82.9 636.5,84.2Z" fill="#c2ebd6"></path>
<path d="M538.0,96.7 534.2,100.7 527.7,104.1 522.3,99.1 523.2,93.4 527.1,91.8 534.2,91.6Z" fill="#c2ebd6"></path>
<path d="M507.5,86.4 507.9,88.9 503.5,88.5 499.0,88.1 499.1,86.0 498.3,83.3 502.4,83.1 507.2,83.1Z" fill="#c2ebd6"></path>
<path d="M605.9,73.5 601.5,76.4 597.7,75.2 598.7,72.4 602.6,70.9Z" fill="#c2ebd6"></path>
<path d="M481.2,106.3 478.2,108.4 468.1,111.3 462.6,107.0 466.7,103.5 471.2,97.5 474.8,99.6Z" fill="#c2ebd6"></path>
<path d="M602.8,95.8 601.2,99.7 598.8,100.2 593.4,98.2 595.5,94.9 598.1,90.9 599.9,93.8Z" fill="#c2ebd6"></path>
<path d="M533.0,63.8 532.3,67.5 528.5,66.3 524.9,66.5 523.1,63.7 526.3,59.9 530.2,59.6 532.0,62.3Z" fill="#c2ebd6"></path>
<path d="M569.6,91.7 567.2,95.0 560.8,94.5 557.5,93.4 560.0,88.8 560.1,86.5 566.7,84.8Z" fill="#c2ebd6"></path>
<path d="M443.5,76.6 439.1,80.3 435.6,80.4 432.0,76.6 432.8,72.4 440.4,73.8Z" fill="#c2ebd6"></path>
<path d="M444.0,83.3 441.1,84.6 438.2,86.2 436.2,82.7 439.0,79.7 440.6,80.1Z" fill="#c2ebd6"></path>
<path d="M486.7,106.3 484.5,108.8 482.0,109.6 479.6,108.0 477.9,106.0 478.7,102.6 481.4,102.7 483.5,103.0Z" fill="#c2ebd6"></path>
<path d="M459.0,60.5 455.3,64.0 448.8,63.8 449.9,57.6 457.0,57.0Z" fill="#c2ebd6"></path>
<path d="M573.5,91.5 569.1,95.9 564.1,93.8 564.3,89.3 568.6,88.7Z" fill="#c2ebd6"></path>
<path d="M412.7,91.6 409.4,95.8 405.6,95.9 402.8,93.7 403.3,92.2 405.3,88.2 412.3,90.1Z" fill="#c2ebd6"></path>
<path d="M519.6,64.3 519.6,67.6 516.0,68.6 514.3,67.2 512.7,64.8 515.9,62.8 516.5,62.4 519.9,62.8Z" fill="#c2ebd6"></path>
<path d="M388.6,96.8 383.3,100.6 378.4,101.1 379.2,95.2 383.8,95.4Z" fill="#c2ebd6"></path>
<path d="M452.0,100.8 446.5,107.1 442.9,109.9 436.1,107.1 436.1,101.6 437.9,96.9 441.8,96.5 451.4,98.4Z" fill="#c2ebd6"></path>
<path d="M571.8,76.2 571.3,80.6 565.1,83.0 563.6,81.4 562.1,76.7 562.6,73.2 565.2,71.4 568.3,75.1Z" fill="#c2ebd6"></path>
<path d="M507.7,71.9 504.0,77.5 499.8,78.1 492.6,73.4 498.3,67.1 502.6,69.8Z" fill="#c2ebd6"></path>
<path d="M521.8,86.3 518.4,87.1 516.1,88.2 514.4,86.4 514.5,84.3 517.5,84.0 518.9,83.2Z" fill="#c2ebd6"></path>
<path d="M459.6,72.5 457.7,78.2 451.3,76.6 451.3,69.6 459.0,69.2Z" fill="#c2ebd6"></path>
<path d="M406.6,79.6 402.5,81.8 400.5,81.6 399.7,78.9 403.4,78.1Z" fill="#c2ebd6"></path>
<path d="M433.5,54.9 430.9,57.0 427.1,56.4 426.6,52.3 431.7,51.6Z" fill="#c2ebd6"></path>
<path d="M625.0,97.2 617.8,101.5 613.2,100.6 613.7,97.0 620.9,93.2Z" fill="#c2ebd6"></path>
<path d="M392.6,73.4 388.9,76.7 382.9,76.2 383.5,71.7 384.6,69.4 388.3,69.2Z" fill="#c2ebd6"></path>
<path d="M612.6,103.7 611.7,104.5 610.4,104.8 607.9,103.9 608.7,102.9 609.3,101.5 611.3,102.2Z" fill="#c2ebd6"></path>
<path d="M561.2,64.3 557.7,69.0 553.9,70.9 545.4,67.7 547.6,64.4 548.7,58.8 552.9,60.1 557.6,61.9Z" fill="#c2ebd6"></path>
<path d="M485.1,70.4 482.5,72.6 479.6,70.7 479.7,69.2 482.2,68.2Z" fill="#c2ebd6"></path>
<path d="M572.7,80.5 571.6,85.7 566.5,82.5 567.4,79.2 570.0,78.1Z" fill="#c2ebd6"></path>
<path d="M495.6,91.7 490.9,93.5 487.5,95.3 482.2,92.3 480.0,90.9 480.1,85.9 487.3,86.2 491.0,83.8Z" fill="#c2ebd6"></path>
<path d="M554.4,67.7 553.3,70.5 550.8,71.0 550.1,69.2 547.4,67.5 549.9,64.5 554.4,65.3Z" fill="#c2ebd6"></path>
<path d="M419.5,95.1 417.8,98.8 415.9,98.8 414.0,96.0 412.3,94.0 415.7,92.4 418.1,92.8Z" fill="#f0f6f0"></path>
<path d="M451.7,51.0 450.7,53.1 445.6,53.0 446.3,48.9 448.7,47.1Z" fill="#f0f6f0"></path>
<path d="M426.8,63.1 426.4,64.3 425.3,64.4 423.7,64.5 423.0,63.7 423.9,61.4 425.1,62.3 426.1,62.6Z" fill="#f0f6f0"></path>
<path d="M517.7,79.2 516.6,81.5 515.0,80.9 513.6,80.4 512.7,79.0 515.0,78.2 517.7,78.4Z" fill="#f0f6f0"></path>
<path d="M429.4,50.9 427.9,54.7 424.2,51.8 423.5,49.0 428.7,48.2Z" fill="#f0f6f0"></path>
<path d="M395.0,98.8 392.5,102.9 388.4,101.9 385.4,98.5 388.6,97.3 391.8,97.6Z" fill="#f0f6f0"></path>
<path d="M391.7,58.9 391.0,64.2 384.9,65.4 382.7,60.8 383.3,57.6 386.9,55.5 390.1,54.4Z" fill="#f0f6f0"></path>
<path d="M467.2,74.0 465.0,75.5 462.7,75.4 460.1,74.4 460.5,72.4 462.9,71.5 465.5,71.9Z" fill="#f0f6f0"></path>
<path d="M490.7,103.3 490.0,104.6 486.1,105.4 482.9,103.0 486.0,99.0 490.5,101.0Z" fill="#f0f6f0"></path>
<path d="M629.6,74.4 625.1,75.4 622.7,74.6 622.8,72.9 625.6,71.4Z" fill="#f0f6f0"></path>
<path d="M556.0,90.9 553.1,93.4 549.4,92.6 549.3,89.3 552.9,88.4Z" fill="#f0f6f0"></path>
<path d="M606.1,106.1 604.7,108.5 602.5,108.5 600.6,105.9 602.6,103.0 605.2,102.5Z" fill="#f0f6f0"></path>
<path d="M632.7,102.2 634.0,105.6 629.4,105.5 622.3,104.4 622.2,102.4 623.9,98.5 629.2,98.6 631.0,98.9Z" fill="#f0f6f0"></path>
<path d="M454.9,52.4 451.7,55.4 447.0,55.9 443.0,52.5 445.4,47.9 452.7,48.3Z" fill="#f0f6f0"></path>
<path d="M589.9,73.7 584.4,77.5 576.5,75.7 577.1,70.6 583.9,69.4Z" fill="#f0f6f0"></path>
<path d="M596.2,84.3 594.0,86.5 592.6,85.8 590.9,83.9 593.6,83.3Z" fill="#f0f6f0"></path>
<path d="M451.5,90.8 449.3,92.3 448.1,92.7 447.2,91.4 448.1,90.2 449.3,90.3Z" fill="#f0f6f0"></path>
<path d="M427.7,54.7 422.9,58.3 419.6,56.9 419.3,52.4 422.4,52.8Z" fill="#f0f6f0"></path>
<path d="M563.4,72.8 561.6,74.3 557.9,74.2 557.8,70.4 560.4,70.9Z" fill="#f0f6f0"></path>
<path d="M553.9,83.1 553.1,84.2 551.3,84.0 550.9,82.8 551.4,81.9 552.9,81.3Z" fill="#f0f6f0"></path>
<path d="M438.0,92.2 438.6,94.0 435.4,94.0 432.1,94.9 430.2,90.9 432.5,88.1 434.6,88.8 437.1,90.4Z" fill="#f0f6f0"></path>
<path d="M540.6,54.9 539.0,57.1 536.8,56.8 535.9,53.1 540.2,52.8Z" fill="#f0f6f0"></path>
<path d="M505.8,67.6 504.4,69.4 502.4,68.7 502.0,67.2 505.0,66.0Z" fill="#f0f6f0"></path>
<path d="M480.5,75.2 478.5,78.2 476.9,80.5 473.8,76.4 472.5,74.4 475.7,73.9 480.3,73.2Z" fill="#f0f6f0"></path>
<path d="M498.9,55.5 498.9,57.3 493.2,58.6 490.7,56.8 489.0,54.2 491.1,53.1 493.3,50.6 496.8,53.0Z" fill="#f0f6f0"></path>
<path d="M614.6,77.2 612.0,78.1 610.5,77.5 609.9,75.0 612.1,75.3Z" fill="#f0f6f0"></path>
<path d="M586.6,93.7 586.2,94.3 584.8,96.0 583.2,95.4 583.1,93.6 583.6,92.2 584.3,91.8 587.1,92.1Z" fill="#f0f6f0"></path>
<path d="M534.9,51.7 533.2,53.6 528.1,53.0 526.3,52.1 526.0,49.6 528.1,48.3 532.5,48.8Z" fill="#f0f6f0"></path>
<path d="M548.4,101.7 546.3,104.2 544.0,104.6 541.1,101.5 543.1,98.7 547.4,97.2Z" fill="#f0f6f0"></path>
<path d="M557.9,53.8 556.0,57.8 551.1,56.8 548.2,54.6 552.1,49.8 557.0,48.7Z" fill="#f0f6f0"></path>
<path d="M586.3,100.3 587.5,103.9 581.4,102.1 578.4,100.8 581.9,98.4 586.8,97.5Z" fill="#f0f6f0"></path>
<path d="M464.8,77.9 463.8,79.8 460.5,79.7 458.2,79.0 457.8,78.2 459.2,75.6 460.9,75.4 463.8,76.2Z" fill="#f0f6f0"></path>
<path d="M440.9,71.5 437.1,74.7 432.9,75.4 431.3,73.0 431.2,68.9 432.2,67.0 436.7,69.1Z" fill="#f0f6f0"></path>
<path d="M590.0,85.7 587.2,86.8 583.3,86.4 584.4,84.2 587.1,82.5Z" fill="#f0f6f0"></path>
<path d="M434.4,80.7 428.6,85.3 425.7,82.8 425.7,79.0 431.1,77.7Z" fill="#f0f6f0"></path>
<path d="M478.7,104.5 475.7,106.8 472.8,106.3 471.3,104.1 471.7,101.5 474.7,101.6Z" fill="#f0f6f0"></path>
<path d="M562.1,85.1 560.2,86.2 557.1,88.0 556.1,84.7 556.6,82.9 560.0,82.2Z" fill="#f0f6f0"></path>
<path d="M620.4,62.3 617.6,66.0 612.3,62.6 612.3,59.0 615.3,59.3Z" fill="#f0f6f0"></path>
<path d="M589.5,88.9 588.5,91.3 584.6,92.0 583.3,89.8 585.5,87.4 588.5,86.8Z" fill="#f0f6f0"></path>
<path d="M498.0,58.1 497.1,60.3 495.2,60.0 493.9,59.3 493.7,57.5 495.4,56.9 497.0,56.9Z" fill="#f0f6f0"></path>
<path d="M402.0,56.2 400.0,57.7 397.5,58.3 396.2,58.5 395.0,55.9 395.9,53.6 399.0,53.2 400.0,53.5Z" fill="#f0f6f0"></path>
<path d="M577.9,50.6 576.7,53.1 572.3,54.1 569.9,50.9 572.7,47.7 575.8,46.0Z" fill="#f0f6f0"></path>
<path d="M637.1,85.4 636.8,87.1 633.1,88.1 631.5,86.7 629.9,86.2 630.6,83.1 632.4,82.4 635.8,82.7Z" fill="#f0f6f0"></path>
<path d="M547.3,50.7 544.7,51.8 543.2,53.5 541.4,51.9 540.7,50.1 541.6,47.8 544.9,49.7Z" fill="#f0f6f0"></path>
<path d="M423.3,80.9 420.0,85.1 413.5,83.6 413.2,79.1 417.8,79.3Z" fill="#f0f6f0"></path>
<path d="M461.0,54.3 459.1,56.0 457.9,56.2 455.8,54.7 458.0,53.3 460.0,53.7Z" fill="#9bdbbb"></path>
<path d="M485.6,63.8 482.4,66.7 478.5,67.3 477.6,64.4 479.5,62.0 484.7,62.1Z" fill="#9bdbbb"></path>
<path d="M526.0,102.0 523.6,103.7 518.1,102.6 519.9,99.0 522.6,99.2Z" fill="#9bdbbb"></path>
<path d="M483.8,90.9 479.9,93.8 476.4,92.3 476.6,88.9 480.9,87.7Z" fill="#9bdbbb"></path>
<path d="M507.1,83.5 505.7,86.5 502.2,86.0 501.4,82.8 502.5,81.3 505.9,81.2Z" fill="#9bdbbb"></path>
<path d="M428.5,101.0 426.0,103.6 422.6,103.6 418.6,103.2 415.8,100.3 419.2,97.7 421.4,96.7 425.8,95.5Z" fill="#9bdbbb"></path>
<path d="M539.5,75.2 539.8,76.5 537.5,76.4 535.4,76.4 535.5,74.8 537.1,73.5 539.4,73.9Z" fill="#9bdbbb"></path>
<path d="M551.5,66.8 551.5,68.1 548.3,69.2 544.8,68.5 544.8,64.6 546.7,63.4 549.8,64.3Z" fill="#9bdbbb"></path>
<path d="M594.2,51.5 592.7,52.9 591.7,54.0 591.1,53.0 589.8,51.6 590.8,50.4 592.2,50.2 593.2,51.2Z" fill="#9bdbbb"></path>
<path d="M425.5,103.0 423.5,104.7 420.0,104.8 418.5,101.6 421.1,99.9 425.0,100.5Z" fill="#9bdbbb"></path>
<path d="M409.0,103.4 409.1,106.4 402.7,107.1 401.6,105.4 402.0,101.5 404.3,100.7 408.2,100.2Z" fill="#9bdbbb"></path>
<path d="M453.0,71.5 451.8,74.2 447.9,76.3 447.0,74.7 445.6,70.4 446.9,69.0 448.6,68.6 451.7,68.7Z" fill="#9bdbbb"></path>
<path d="M546.3,83.2 545.3,85.7 543.6,84.8 541.2,84.1 540.1,80.8 543.1,80.0 544.8,81.0Z" fill="#9bdbbb"></path>
<path d="M519.7,88.9 515.0,92.3 512.3,90.1 510.0,89.3 513.0,85.6 515.3,86.7Z" fill="#9bdbbb"></path>
<path d="M489.5,102.1 488.5,103.3 487.0,103.2 486.2,102.0 486.6,100.7 489.1,100.8Z" fill="#9bdbbb"></path>
<path d="M399.3,98.4 399.2,99.0 397.2,100.6 394.7,99.4 395.0,98.0 395.3,97.0 397.6,96.6 399.0,97.4Z" fill="#9bdbbb"></path>
<path d="M418.4,59.4 418.3,60.7 416.2,60.9 414.1,59.2 416.2,57.9 417.8,56.9Z" fill="#9bdbbb"></path>
<path d="M384.1,101.4 383.1,103.3 380.7,103.5 378.2,102.9 379.0,101.0 381.6,99.6 382.3,100.7Z" fill="#9bdbbb"></path>
<path d="M405.0,68.5 403.4,71.8 398.5,71.0 398.7,68.3 402.5,67.8Z" fill="#9bdbbb"></path>
<path d="M517.7,104.9 514.3,107.5 510.8,104.9 511.3,103.2 514.9,100.5Z" fill="#9bdbbb"></path>
<path d="M434.6,134.5 433.7,137.9 429.0,137.3 426.5,134.8 426.3,131.8 432.5,132.6Z" fill="#a9e2c6" opacity="0.8"></path>
<path d="M451.8,149.5 450.1,150.3 448.8,150.7 447.0,149.8 447.9,148.0 449.7,148.6Z" fill="#a9e2c6" opacity="0.8"></path>
<path d="M624.0,144.3 622.0,144.7 620.5,145.1 617.8,145.2 616.4,143.4 617.5,142.2 620.8,141.9 621.7,142.3Z" fill="#a9e2c6" opacity="0.8"></path>
<path d="M533.8,152.8 532.4,153.8 531.2,153.9 529.6,153.8 529.8,151.9 531.6,150.2 532.4,151.3Z" fill="#a9e2c6" opacity="0.8"></path>
<path d="M591.6,116.8 590.8,119.1 589.0,119.0 587.6,116.8 588.9,115.3 591.5,115.5Z" fill="#a9e2c6" opacity="0.8"></path>
<path d="M530.4,122.8 529.0,125.7 526.1,125.2 523.5,123.0 524.9,120.2 528.3,120.2Z" fill="#a9e2c6" opacity="0.8"></path>
<path d="M455.5,155.2 454.1,158.4 452.0,158.3 448.0,158.4 447.1,154.4 449.5,152.8 451.6,151.8 454.3,152.5Z" fill="#a9e2c6" opacity="0.8"></path>
<path d="M580.7,154.1 577.7,156.0 574.9,155.2 572.0,153.0 573.7,149.9 579.8,148.8Z" fill="#a9e2c6" opacity="0.8"></path>
<path d="M609.4,129.1 606.6,130.8 605.1,130.9 603.9,128.7 603.9,127.5 607.7,126.1Z" fill="#a9e2c6" opacity="0.8"></path>
<path d="M458.9,120.1 459.5,125.3 451.9,123.5 448.0,119.5 452.8,117.9 458.1,117.7Z" fill="#a9e2c6" opacity="0.8"></path>
<path d="M416.0,163.8 412.6,165.0 411.9,166.2 409.0,163.8 408.4,162.8 407.2,160.9 410.3,159.4 413.2,161.0Z" fill="#a9e2c6" opacity="0.8"></path>
<path d="M408.4,151.8 406.6,152.8 404.3,153.9 402.8,151.5 404.1,150.4 406.6,149.8Z" fill="#a9e2c6" opacity="0.8"></path>
<path d="M477.9,162.4 475.4,164.5 472.0,164.5 471.9,161.0 475.0,160.2Z" fill="#a9e2c6" opacity="0.8"></path>
<path d="M567.2,138.1 566.2,140.2 563.7,138.9 563.5,137.1 565.8,136.9Z" fill="#a9e2c6" opacity="0.8"></path>
<path d="M579.1,137.3 577.9,139.3 574.5,137.7 573.3,135.4 577.1,134.9Z" fill="#a9e2c6" opacity="0.8"></path>
<path d="M479.1,151.9 476.1,154.2 472.7,153.0 472.3,150.3 476.9,149.6Z" fill="#a9e2c6" opacity="0.8"></path>
<path d="M408.9,165.0 403.9,167.8 400.9,168.1 399.5,167.0 399.0,163.5 398.5,160.7 404.4,161.9Z" fill="#a9e2c6" opacity="0.8"></path>
<path d="M479.8,126.3 477.0,130.2 472.9,129.3 468.5,125.3 471.9,123.0 475.5,123.9Z" fill="#a9e2c6" opacity="0.8"></path>
<path d="M426.9,148.3 425.9,149.6 423.8,149.8 423.0,148.1 423.4,146.0 425.7,146.3Z" fill="#a9e2c6" opacity="0.8"></path>
<path d="M560.1,143.0 560.2,145.9 554.2,145.7 553.7,143.0 555.7,140.4 559.1,139.5Z" fill="#a9e2c6" opacity="0.8"></path>
<path d="M561.2,141.0 560.0,142.9 558.3,143.6 555.5,140.8 558.0,138.5 560.6,139.4Z" fill="#a9e2c6" opacity="0.8"></path>
<path d="M616.7,130.8 615.2,132.8 611.9,132.7 612.2,129.9 614.3,129.9Z" fill="#a9e2c6" opacity="0.8"></path>
<path d="M435.7,165.3 435.6,167.7 431.2,169.0 429.5,167.3 430.5,164.1 432.6,163.1 437.0,163.3Z" fill="#a9e2c6" opacity="0.8"></path>
<path d="M627.8,124.9 626.5,127.2 624.0,127.2 620.2,124.9 620.1,122.7 621.5,120.5 628.6,121.1Z" fill="#a9e2c6" opacity="0.8"></path>
<path d="M477.6,124.7 476.3,126.0 472.3,125.9 470.0,124.1 469.7,121.6 471.4,120.8 475.2,122.3Z" fill="#a9e2c6" opacity="0.8"></path>
<path d="M472.9,118.9 471.8,119.8 469.7,120.5 467.7,119.4 467.8,117.5 469.1,116.2 472.6,116.2Z" fill="#eef5ef"></path>
<path d="M588.6,150.3 586.2,150.9 584.6,152.4 583.2,151.6 581.7,149.5 582.5,149.0 584.6,148.1 586.7,148.2Z" fill="#eef5ef"></path>
<path d="M495.7,140.5 495.6,141.7 492.7,141.1 492.2,139.4 494.8,138.4Z" fill="#eef5ef"></path>
<path d="M441.2,144.1 441.2,146.3 439.3,146.5 437.5,144.6 436.4,142.3 438.3,142.5 440.3,142.4Z" fill="#eef5ef"></path>
<path d="M403.8,139.7 404.2,140.7 402.1,141.2 401.2,139.6 401.0,138.6 402.2,138.5 403.2,138.3Z" fill="#eef5ef"></path>
<path d="M464.2,133.6 463.2,135.7 461.2,135.8 459.3,135.4 458.4,134.1 459.9,131.6 461.2,132.5 463.4,131.5Z" fill="#eef5ef"></path>
<path d="M617.3,167.6 614.7,168.7 612.7,168.7 613.3,166.5 614.8,166.4Z" fill="#eef5ef"></path>
<path d="M566.6,152.7 566.5,154.1 563.9,154.2 563.9,153.0 564.2,152.0 565.8,151.3Z" fill="#eef5ef"></path>
<path d="M588.2,150.7 587.2,151.6 585.6,151.8 584.9,150.9 585.8,149.2 587.5,148.9Z" fill="#eef5ef"></path>
<path d="M459.9,166.6 459.8,167.1 457.8,167.7 456.4,167.4 455.8,165.8 456.9,165.1 458.4,165.0 459.6,164.8Z" fill="#eef5ef"></path>
<path d="M477.8,146.6 476.0,147.8 473.1,147.1 469.9,145.9 472.0,143.7 475.1,144.5Z" fill="#eef5ef"></path>
<path d="M624.3,118.7 623.0,120.5 620.3,119.7 617.0,119.4 617.5,116.5 619.9,116.4 622.6,115.0Z" fill="#eef5ef"></path>
<path d="M499.5,143.7 499.2,147.6 493.9,148.4 491.9,145.3 489.9,144.1 493.8,140.9 496.8,142.0Z" fill="#eef5ef"></path>
<path d="M431.8,136.2 430.3,138.6 428.6,139.0 426.1,137.6 424.8,135.4 427.6,134.5 430.6,133.6Z" fill="#eef5ef"></path>
<path d="M494.3,89.7 490.9,89.3 489.1,83.5 488.8,79.4 491.8,77.5 494.1,76.7 497.7,81.7 495.8,87.0Z" fill="#98d9b8" opacity="0.9"></path>
<path d="M519.5,74.2 517.0,71.5 519.5,64.8 522.7,60.8 526.9,58.7 527.9,63.0 526.1,67.9 522.4,72.3Z" fill="#98d9b8" opacity="0.9"></path>
<path d="M500.1,70.5 497.2,71.4 491.8,72.1 486.4,69.0 486.6,67.0 487.4,64.4 493.5,65.6 497.0,68.2Z" fill="#98d9b8" opacity="0.9"></path>
<path d="M575.9,84.4 570.5,84.5 571.1,78.8 573.2,75.3 576.9,71.2 580.8,75.6 583.0,79.7 578.9,84.7Z" fill="#98d9b8" opacity="0.9"></path>
<path d="M588.6,77.1 584.9,75.4 584.6,72.6 585.2,68.7 587.3,66.1 591.5,67.9 594.5,71.4 591.1,75.5Z" fill="#98d9b8" opacity="0.9"></path>
<path d="M472.1,101.7 470.7,104.6 465.8,102.7 463.1,99.6 461.5,95.8 465.1,94.4 469.3,96.2 474.1,98.3Z" fill="#98d9b8" opacity="0.9"></path>
<path d="M438.2,71.1 434.2,71.0 433.8,65.6 432.6,60.8 436.2,58.2 440.5,60.8 441.4,64.4 441.4,69.4Z" fill="#98d9b8" opacity="0.9"></path>
<path d="M391.3,102.5 388.9,103.6 388.1,96.4 387.8,91.3 389.1,89.7 391.7,90.3 392.3,95.7 392.8,102.9Z" fill="#98d9b8" opacity="0.9"></path>
<path d="M383.5,93.5 382.8,90.3 388.1,89.7 392.3,91.3 394.1,93.1 393.8,96.0 388.4,98.3 383.9,96.2Z" fill="#98d9b8" opacity="0.9"></path>
<path d="M404.4,62.8 400.9,61.9 397.0,56.6 398.3,51.5 401.3,48.3 403.7,49.3 408.8,54.1 407.0,59.5Z" fill="#98d9b8" opacity="0.9"></path>
<path d="M406.3,89.7 403.3,90.1 400.0,86.5 397.7,82.1 398.4,78.2 402.5,79.7 406.0,82.3 406.5,86.7Z" fill="#98d9b8" opacity="0.9"></path>
<path d="M521.5,62.7 521.0,58.8 521.9,53.0 528.2,50.6 533.8,51.5 532.9,56.3 531.2,63.2 525.8,63.8Z" fill="#98d9b8" opacity="0.9"></path>
<path d="M569.9,105.1 570.7,100.9 573.6,99.7 575.4,97.6 578.0,100.7 580.0,104.0 576.5,105.1 574.2,107.5Z" fill="#98d9b8" opacity="0.9"></path>
<path d="M500.5,62.1 497.0,59.9 494.7,52.8 492.9,47.4 498.3,45.5 504.0,46.1 505.0,51.5 505.2,57.8Z" fill="#98d9b8" opacity="0.9"></path>
<path d="M592.9,107.2 591.4,105.1 592.4,101.5 594.9,100.0 598.0,100.4 598.9,101.9 597.7,105.5 595.0,107.0Z" fill="#98d9b8" opacity="0.9"></path>
<path d="M443.5,96.0 444.9,90.7 448.6,87.2 456.1,84.2 460.1,84.5 457.4,90.8 455.2,96.7 447.0,96.9Z" fill="#98d9b8" opacity="0.9"></path>
<path d="M470.5,67.2 466.5,68.3 463.6,63.0 463.2,58.1 464.1,54.9 469.0,55.4 470.7,59.3 471.8,64.8Z" fill="#98d9b8" opacity="0.9"></path>
<path d="M406.2,59.4 402.7,58.5 402.7,53.5 402.0,50.2 406.0,46.0 409.5,49.3 411.3,53.4 409.1,56.9Z" fill="#98d9b8" opacity="0.9"></path>
<path d="M410.9,74.6 409.6,71.8 412.1,68.7 415.4,69.2 418.2,70.3 419.2,73.8 416.5,76.2 413.4,77.4Z" fill="#98d9b8" opacity="0.9"></path>
<path d="M569.4,76.7 567.0,71.7 568.0,69.7 570.6,68.9 575.1,70.3 577.4,74.4 576.3,77.0 573.2,77.6Z" fill="#98d9b8" opacity="0.9"></path>
<path d="M542.7,101.3 539.6,97.7 540.3,90.8 541.1,84.7 547.1,81.8 550.0,86.3 551.3,93.3 546.9,97.3Z" fill="#98d9b8" opacity="0.9"></path>
<path d="M391.3,63.8 391.6,61.4 396.5,59.2 400.1,57.9 404.4,59.5 401.7,63.0 398.2,64.6 394.6,65.3Z" fill="#98d9b8" opacity="0.9"></path>
<path d="M562.5,72.5 564.7,68.8 569.2,66.7 575.7,69.7 578.3,71.7 576.0,73.9 569.7,76.0 564.6,74.8Z" fill="#98d9b8" opacity="0.9"></path>
<path d="M560.4,84.3 556.8,86.1 553.6,83.3 553.2,78.4 555.3,76.2 558.7,74.9 563.0,77.3 562.9,83.5Z" fill="#98d9b8" opacity="0.9"></path>
<path d="M565.5,88.8 564.3,84.4 565.9,78.5 569.1,74.9 574.9,75.1 576.9,79.8 573.9,84.1 569.0,88.3Z" fill="#98d9b8" opacity="0.9"></path>
<path d="M551.4,99.8 546.2,102.7 543.7,96.5 539.5,94.0 542.9,89.3 546.5,88.0 551.8,90.1 553.7,96.9Z" fill="#98d9b8" opacity="0.9"></path>
<path d="M539.2,75.6 540.2,72.2 545.2,66.9 551.9,68.3 553.3,70.6 553.9,73.2 549.0,77.8 542.8,77.2Z" fill="#98d9b8" opacity="0.9"></path>
<path d="M491.1,106.3 489.6,104.4 489.0,100.7 491.3,98.5 495.1,97.6 497.1,101.0 495.8,103.8 495.0,107.0Z" fill="#98d9b8" opacity="0.9"></path>
<path d="M438.5,68.9 436.3,69.4 431.1,66.8 427.4,61.3 429.5,60.0 432.3,59.0 435.5,62.4 438.6,66.4Z" fill="#98d9b8" opacity="0.9"></path>
<path d="M449.7,77.7 452.4,73.3 455.9,70.2 460.7,73.1 463.4,75.7 461.6,81.3 457.7,82.8 452.7,80.8Z" fill="#98d9b8" opacity="0.9"></path>
<path d="M494.6,107.0 496.0,105.6 500.4,103.9 505.8,104.3 506.1,105.7 505.9,107.2 500.9,109.1 495.9,108.2Z" fill="#f4f7f0"></path>
<path d="M467.8,100.7 466.6,101.1 461.6,98.3 456.5,95.2 454.5,92.4 459.2,93.9 463.5,95.3 467.8,99.5Z" fill="#f4f7f0"></path>
<path d="M604.0,78.6 602.4,78.8 597.8,75.6 595.5,71.0 595.6,69.0 597.4,68.6 601.7,72.2 604.9,77.0Z" fill="#f4f7f0"></path>
<path d="M528.5,103.0 525.5,103.2 519.4,101.2 513.5,97.5 514.6,96.6 514.6,95.1 521.4,96.7 526.0,100.5Z" fill="#f4f7f0"></path>
<path d="M506.7,60.1 505.2,60.5 502.9,59.5 500.9,56.4 501.2,55.3 502.5,55.1 505.5,56.6 507.1,59.3Z" fill="#f4f7f0"></path>
<path d="M509.9,66.0 509.0,64.0 510.2,59.3 514.8,58.1 517.3,57.7 516.6,60.6 515.5,64.1 512.9,65.6Z" fill="#f4f7f0"></path>
<path d="M530.6,57.9 528.8,56.9 528.7,53.8 529.2,51.0 531.0,49.8 532.7,51.3 532.4,54.0 532.7,57.9Z" fill="#f4f7f0"></path>
<path d="M537.7,109.6 536.7,107.8 540.5,102.1 542.7,97.8 546.4,94.7 545.7,99.0 543.6,103.9 539.6,109.7Z" fill="#f4f7f0"></path>
<path d="M479.8,70.6 479.3,67.9 480.5,62.2 481.6,57.4 483.9,54.7 484.7,57.7 484.7,63.2 482.6,66.8Z" fill="#f4f7f0"></path>
<path d="M579.7,95.9 579.2,93.5 580.9,90.6 583.5,87.0 586.8,87.6 587.5,91.3 584.6,93.8 580.6,97.7Z" fill="#f4f7f0"></path>
<path d="M602.9,94.9 599.9,94.5 596.1,91.8 594.9,86.8 594.7,84.2 598.1,84.1 600.9,88.1 602.8,90.7Z" fill="#f4f7f0"></path>
<path d="M542.8,66.4 537.3,64.5 533.2,62.2 529.1,58.0 529.5,56.2 530.0,54.5 536.1,58.4 540.6,63.3Z" fill="#f4f7f0"></path>
<path d="M610.9,59.8 609.2,58.9 608.6,55.3 609.2,53.0 610.9,50.8 611.8,52.1 613.4,55.3 612.4,57.7Z" fill="#f4f7f0"></path>
<path d="M582.8,64.6 583.2,61.5 586.4,59.3 590.6,56.6 592.9,57.6 593.0,60.3 589.2,63.4 584.6,65.2Z" fill="#f4f7f0"></path>
<path d="M450.2,86.6 448.9,88.1 445.0,88.4 441.1,86.9 441.0,84.1 443.0,81.9 446.3,83.6 449.5,84.2Z" fill="#f4f7f0"></path>
<path d="M417.3,107.8 415.3,109.3 411.7,106.6 408.9,104.8 406.7,101.8 409.1,101.1 414.2,102.3 417.3,105.7Z" fill="#f4f7f0"></path>
<path d="M455.3,63.0 453.4,63.3 449.4,62.5 446.3,59.4 446.0,57.1 449.1,56.8 452.2,58.1 456.0,61.5Z" fill="#f4f7f0"></path>
<path d="M530.5,59.1 530.8,61.1 526.1,61.3 523.2,61.2 521.6,58.5 522.9,56.2 526.5,55.8 530.5,57.6Z" fill="#f4f7f0"></path>
<path d="M457.7,91.9 456.0,93.0 452.6,93.2 449.9,91.6 449.7,90.5 450.1,89.0 453.3,89.2 455.6,89.7Z" fill="#f4f7f0"></path>
<path d="M447.4,106.9 444.5,106.4 444.5,102.8 447.0,99.2 448.4,99.2 451.0,99.9 450.8,103.5 449.1,107.3Z" fill="#f4f7f0"></path>
<path d="M575.9,100.6 578.2,99.0 584.2,97.1 590.2,96.8 590.0,99.2 588.8,101.3 584.7,102.5 579.0,101.9Z" fill="#f4f7f0"></path>
<path d="M534.9,99.8 532.9,96.7 533.4,90.8 535.1,86.6 537.9,81.2 538.8,87.0 539.3,91.8 537.1,97.9Z" fill="#f4f7f0"></path>
<path d="M508.6,107.4 506.3,105.6 507.0,98.8 508.1,93.3 510.2,89.9 512.0,92.1 511.4,99.2 510.5,104.2Z" fill="#f4f7f0"></path>
<path d="M472.0,67.7 472.9,65.6 475.7,64.3 478.1,64.6 480.8,65.5 478.9,68.1 476.9,69.0 473.9,68.3Z" fill="#f4f7f0"></path>
<path d="M556.7,111.8 554.1,109.3 551.8,104.8 549.2,99.0 549.6,95.4 552.4,97.7 555.4,103.2 556.6,107.3Z" fill="#f4f7f0"></path>
<path d="M592.9,82.2 589.4,81.1 585.2,78.1 581.0,73.7 579.7,71.3 582.0,71.9 587.8,75.0 591.6,79.2Z" fill="#f4f7f0"></path>
<path d="M600.9,97.2 599.4,96.9 597.4,94.8 595.3,91.2 595.2,89.5 597.8,90.7 599.9,92.9 602.0,97.0Z" fill="#f4f7f0"></path>
<path d="M430.2,61.7 431.2,58.9 436.0,57.2 441.3,56.8 442.2,59.2 442.3,61.9 437.4,63.9 431.2,63.4Z" fill="#f4f7f0"></path>
<path d="M638.3,154.7 638.3,151.8 638.7,149.4 641.0,147.1 643.5,146.6 643.8,148.7 642.4,151.8 640.5,153.4Z" fill="#f1ede1"></path>
<path d="M648.2,163.7 646.3,164.1 643.1,163.2 640.8,159.3 641.9,158.0 643.5,157.2 646.2,159.7 649.1,162.2Z" fill="#f1ede1"></path>
<path d="M613.5,80.3 611.8,82.2 606.2,82.9 602.5,80.7 602.3,77.3 603.9,74.4 608.2,75.5 612.3,76.8Z" fill="#f1ede1"></path>
<path d="M623.6,109.0 621.8,107.9 619.3,103.0 622.0,99.2 623.7,98.3 627.1,99.0 627.1,103.1 626.3,107.1Z" fill="#f1ede1"></path>
<path d="M659.0,75.3 655.2,75.9 651.0,75.0 646.1,72.0 644.8,69.3 648.0,67.3 653.1,70.1 657.5,72.8Z" fill="#f1ede1"></path>
<path d="M667.3,163.5 668.5,160.0 670.4,159.1 672.7,160.5 673.8,162.9 673.4,166.0 671.0,167.1 668.6,166.7Z" fill="#f1ede1"></path>
<path d="M643.2,87.4 642.1,86.5 645.3,82.4 649.0,80.0 650.5,81.0 650.6,82.6 648.1,85.7 644.5,88.7Z" fill="#f1ede1"></path>
<path d="M636.5,80.9 635.0,79.1 637.0,74.6 639.9,71.6 641.8,73.0 642.8,74.5 641.9,77.9 638.6,81.3Z" fill="#f1ede1"></path>
<path d="M685.5,137.7 684.9,139.0 680.8,136.3 680.6,132.6 680.5,130.6 683.2,130.7 684.6,133.6 686.3,135.9Z" fill="#f4f7f0"></path>
<path d="M676.6,159.8 676.7,162.2 674.0,162.6 672.2,161.4 671.0,159.3 672.5,156.3 674.7,155.3 676.7,157.0Z" fill="#f4f7f0"></path>
<path d="M659.0,119.1 657.1,116.6 657.7,113.8 660.8,112.3 663.2,111.6 665.1,114.8 663.3,117.0 661.6,119.2Z" fill="#f4f7f0"></path>
<path d="M687.2,135.2 687.2,133.3 689.8,130.9 693.3,129.4 696.0,130.9 695.3,134.1 692.3,136.2 689.6,137.4Z" fill="#f4f7f0"></path>
<path d="M672.4,170.6 670.8,170.3 670.9,168.0 671.0,165.9 673.0,165.7 674.4,166.8 675.0,168.5 674.4,171.0Z" fill="#f4f7f0"></path>
<path d="M701.9,120.4 700.4,121.7 698.2,121.1 695.7,119.5 695.4,117.9 697.1,116.2 699.8,116.7 702.2,118.9Z" fill="#f4f7f0"></path>
<path d="M338,48 372,48 368,62 350,66 336,58Z" fill="url(#hatch)" stroke="#bccfc3" stroke-width="0.5"></path>
<path d="M395,52 420,50 428,70 410,84 392,72Z" fill="url(#hatch)" stroke="#bccfc3" stroke-width="0.5"></path>
<path d="M455,86 470,84 472,100 458,104Z" fill="url(#hatch)" stroke="#bccfc3" stroke-width="0.5"></path>
<path d="M548,52 590,50 588,64 560,70 546,62Z" fill="url(#hatch)" stroke="#bccfc3" stroke-width="0.5"></path>
<path d="M556,100 568,96 575,106 566,112 555,108Z" fill="url(#hatch)" stroke="#bccfc3" stroke-width="0.5"></path>
<path d="M585,108 600,104 604,118 590,124Z" fill="url(#hatch)" stroke="#bccfc3" stroke-width="0.5"></path>
<path d="M600,75 625,70 630,90 610,95Z" fill="url(#hatch)" stroke="#bccfc3" stroke-width="0.5"></path>
<path d="M620,120 635,112 640,130 625,140Z" fill="url(#hatch)" stroke="#bccfc3" stroke-width="0.5"></path>
<path d="M710.4,97.1 709.2,97.4 707.1,98.8 706.4,97.8 704.3,96.4 704.3,95.1 706.8,94.1 709.1,95.1Z" fill="#a9e2c6" opacity="0.7"></path>
<path d="M947.1,98.0 946.6,98.8 942.3,100.4 941.5,97.9 940.8,97.3 940.8,95.7 944.1,94.6 946.2,94.7Z" fill="#a9e2c6" opacity="0.7"></path>
<path d="M677.6,144.1 674.6,146.9 673.0,147.0 668.7,146.5 669.0,143.6 669.1,142.1 672.4,141.0 674.3,141.0Z" fill="#a9e2c6" opacity="0.7"></path>
<path d="M675.6,70.4 675.7,73.0 672.0,74.4 669.8,73.2 666.4,71.4 668.6,68.3 672.2,65.9 675.3,66.2Z" fill="#a9e2c6" opacity="0.7"></path>
<path d="M933.4,77.4 933.1,79.4 929.8,79.2 928.3,77.3 926.8,76.2 930.1,74.3 932.1,74.2Z" fill="#a9e2c6" opacity="0.7"></path>
<path d="M768.1,126.5 767.3,127.9 765.4,128.2 763.0,127.2 763.7,125.0 765.8,123.3 768.0,124.4Z" fill="#a9e2c6" opacity="0.7"></path>
<path d="M732.0,58.8 729.5,60.7 727.8,59.6 727.8,57.6 729.7,55.5Z" fill="#a9e2c6" opacity="0.7"></path>
<path d="M829.4,152.5 829.5,154.7 826.7,153.9 825.9,152.4 826.5,151.5 829.2,151.5Z" fill="#a9e2c6" opacity="0.7"></path>
<path d="M852.1,159.5 848.8,159.8 845.8,161.8 844.4,158.8 846.7,156.8 848.7,156.0Z" fill="#a9e2c6" opacity="0.7"></path>
<path d="M724.8,80.7 723.1,81.8 719.0,82.1 719.7,80.3 720.1,78.5 722.6,79.1Z" fill="#a9e2c6" opacity="0.7"></path>
<path d="M739.2,167.2 739.6,171.0 733.4,170.0 733.7,166.2 737.6,163.7Z" fill="#a9e2c6" opacity="0.7"></path>
<path d="M892.1,165.1 891.1,165.9 888.9,166.8 888.1,165.1 888.1,164.4 888.9,163.4 890.6,163.2Z" fill="#a9e2c6" opacity="0.7"></path>
<path d="M827.5,54.6 824.4,58.5 820.1,58.8 819.8,57.2 817.9,54.8 821.6,51.2 823.3,53.7Z" fill="#a9e2c6" opacity="0.7"></path>
<path d="M953.1,81.5 952.9,82.3 950.0,83.3 950.1,82.1 949.3,80.4 950.8,80.0 952.3,80.1Z" fill="#a9e2c6" opacity="0.7"></path>
<path d="M884.2,84.0 881.3,85.9 879.4,87.8 877.5,86.3 874.9,84.2 877.9,82.8 879.7,82.1 882.3,82.1Z" fill="#a9e2c6" opacity="0.7"></path>
<path d="M660.6,110.4 657.2,112.0 656.3,112.3 653.1,112.7 652.4,109.2 655.2,108.3 657.5,108.4Z" fill="#a9e2c6" opacity="0.7"></path>
<path d="M861.9,94.3 861.7,95.9 860.4,95.7 859.2,94.6 858.3,93.5 860.4,92.4 861.3,93.0Z" fill="#a9e2c6" opacity="0.7"></path>
<path d="M735.4,53.9 732.8,56.2 730.1,57.1 725.7,55.5 725.8,54.7 725.5,51.5 729.6,50.3 734.2,51.6Z" fill="#a9e2c6" opacity="0.7"></path>
<path d="M680.6,53.9 680.0,55.0 676.3,56.6 675.9,55.3 673.5,52.9 673.6,51.8 678.2,50.1 680.4,51.4Z" fill="#a9e2c6" opacity="0.7"></path>
<path d="M680.7,104.5 678.2,106.2 677.9,107.4 674.5,106.4 675.3,104.8 675.7,103.9 676.9,103.6 678.4,104.1Z" fill="#a9e2c6" opacity="0.7"></path>
<path d="M858.5,125.9 856.1,130.7 852.2,128.7 850.6,126.6 852.6,123.7 856.3,124.6Z" fill="#a9e2c6" opacity="0.7"></path>
<path d="M754.1,128.5 752.1,130.6 750.2,131.2 749.2,128.7 748.6,126.1 752.6,126.0Z" fill="#a9e2c6" opacity="0.7"></path>
<path d="M746.6,60.7 746.2,62.4 744.9,62.5 743.4,61.8 742.6,60.7 743.6,59.0 744.1,58.0 746.6,59.2Z" fill="#a9e2c6" opacity="0.7"></path>
<path d="M692.8,162.6 690.6,164.7 687.0,164.7 686.7,161.5 690.1,160.7Z" fill="#a9e2c6" opacity="0.7"></path>
<path d="M960.1,127.9 956.6,130.2 954.5,130.7 951.0,130.6 951.6,126.1 954.0,123.5 956.6,125.1Z" fill="#a9e2c6" opacity="0.7"></path>
<path d="M877.7,293.7 875.1,293.9 872.8,296.4 870.6,295.5 870.7,293.3 870.1,291.1 872.3,290.2 876.2,289.7Z" fill="#a9e2c6" opacity="0.6"></path>
<path d="M916.6,369.6 915.5,370.4 913.3,370.5 911.8,368.7 913.7,368.4 915.9,367.7Z" fill="#a9e2c6" opacity="0.6"></path>
<path d="M867.8,187.3 865.5,188.2 864.0,187.9 863.4,186.1 866.0,185.8Z" fill="#a9e2c6" opacity="0.6"></path>
<path d="M921.8,255.5 919.0,259.3 914.3,258.4 913.4,255.7 913.8,251.3 919.6,252.8Z" fill="#a9e2c6" opacity="0.6"></path>
<path d="M951.8,184.0 950.6,186.7 947.0,184.7 944.8,182.2 949.8,180.6Z" fill="#a9e2c6" opacity="0.6"></path>
<path d="M845.1,319.7 844.1,322.1 841.6,323.7 835.4,322.8 834.1,319.8 836.4,316.9 840.5,317.9 844.2,317.3Z" fill="#a9e2c6" opacity="0.6"></path>
<path d="M787.4,354.4 786.4,356.3 785.0,355.8 782.9,355.4 782.4,353.8 785.1,353.1 786.0,353.5Z" fill="#a9e2c6" opacity="0.6"></path>
<path d="M927.2,283.1 926.0,285.2 924.1,284.5 923.0,284.1 922.5,282.7 924.1,281.3 926.1,282.1Z" fill="#a9e2c6" opacity="0.6"></path>
<path d="M769.7,212.6 766.9,213.5 762.8,215.5 761.3,211.6 763.4,208.5 767.7,208.5Z" fill="#a9e2c6" opacity="0.6"></path>
<path d="M737.2,187.7 736.7,189.2 734.1,189.5 731.2,190.2 728.2,187.0 731.1,183.4 735.0,183.1 735.0,185.1Z" fill="#a9e2c6" opacity="0.6"></path>
<path d="M947.5,370.9 947.0,372.8 943.9,372.9 940.4,371.6 941.8,369.5 943.6,368.7 946.2,369.6Z" fill="#a9e2c6" opacity="0.6"></path>
<path d="M866.3,297.2 864.8,299.2 863.4,299.2 862.7,298.2 862.3,297.3 863.1,295.5 864.8,296.5Z" fill="#a9e2c6" opacity="0.6"></path>
<path d="M835.2,242.6 833.4,245.6 830.4,247.5 828.5,247.2 826.8,243.1 828.0,240.3 829.9,240.3 832.9,242.1Z" fill="#a9e2c6" opacity="0.6"></path>
<path d="M917.2,397.9 915.0,399.1 912.6,398.7 912.5,396.6 916.7,394.8Z" fill="#a9e2c6" opacity="0.6"></path>
<path d="M948.1,218.7 946.9,220.4 946.1,220.8 944.2,220.4 943.7,219.6 944.2,218.0 945.1,217.8 947.2,218.0Z" fill="#a9e2c6" opacity="0.6"></path>
<path d="M846.7,226.1 845.3,227.6 840.4,229.2 837.5,226.7 835.6,225.1 838.1,222.0 841.6,222.7 843.0,221.8Z" fill="#a9e2c6" opacity="0.6"></path>
<path d="M730.1,363.8 729.7,365.5 726.6,364.4 727.2,363.2 729.4,362.7Z" fill="#a9e2c6" opacity="0.6"></path>
<path d="M811.4,212.2 808.3,216.5 805.4,215.2 804.7,213.5 804.8,209.5 809.0,211.3Z" fill="#a9e2c6" opacity="0.6"></path>
<path d="M890.3,355.6 890.6,357.5 888.9,357.3 886.7,356.6 886.6,356.1 887.4,354.2 888.5,353.3 890.8,354.3Z" fill="#a9e2c6" opacity="0.6"></path>
<path d="M760.3,249.7 759.8,251.9 755.5,253.5 754.7,252.1 754.4,249.0 755.4,245.6 759.5,247.9Z" fill="#a9e2c6" opacity="0.6"></path>
<path d="M855.1,195.2 853.2,199.1 847.3,198.0 849.3,194.6 851.9,192.6Z" fill="#a9e2c6" opacity="0.6"></path>
<path d="M905.8,184.9 905.4,185.9 904.1,185.9 902.3,186.1 902.3,184.5 902.7,183.5 903.5,182.4 904.6,182.8Z" fill="#a9e2c6" opacity="0.6"></path>
<path d="M884.6,315.4 882.5,318.0 879.7,317.8 879.7,314.2 882.8,312.7Z" fill="#a9e2c6" opacity="0.6"></path>
<path d="M740.8,272.9 738.9,275.0 733.7,273.1 734.9,270.9 737.3,270.1Z" fill="#a9e2c6" opacity="0.6"></path>
<path d="M755.8,311.1 754.3,312.3 752.9,312.7 750.3,311.6 751.4,310.1 753.1,309.9 754.3,309.5Z" fill="#a9e2c6" opacity="0.6"></path>
<path d="M912.0,204.0 911.2,207.2 908.4,207.4 904.9,206.2 905.5,203.6 906.4,200.6 911.1,201.0Z" fill="#a9e2c6" opacity="0.6"></path>
<path d="M890.9,232.5 886.4,236.7 880.8,234.5 881.3,229.6 886.1,229.3Z" fill="#a9e2c6" opacity="0.6"></path>
<path d="M831.8,200.9 830.9,202.4 826.6,203.9 823.4,201.0 823.3,197.6 827.3,195.9 829.9,197.3Z" fill="#a9e2c6" opacity="0.6"></path>
<path d="M873.8,262.1 871.0,263.4 869.5,264.2 867.4,264.6 866.0,262.6 867.9,260.2 869.2,259.7 870.6,260.2Z" fill="#a9e2c6" opacity="0.6"></path>
<path d="M821.6,205.3 820.4,207.5 815.8,207.6 812.2,205.1 814.0,203.3 814.7,202.2 818.6,200.8Z" fill="#a9e2c6" opacity="0.6"></path>
<path d="M771.1,390.8 767.5,393.8 765.5,392.3 761.2,390.9 762.9,387.1 768.6,388.0Z" fill="#a9e2c6" opacity="0.6"></path>
<path d="M749.9,191.2 749.5,192.2 748.2,192.6 746.3,192.5 746.3,190.9 746.6,190.4 748.4,189.4 750.2,189.4Z" fill="#a9e2c6" opacity="0.6"></path>
<path d="M868.6,366.9 866.9,368.5 864.3,367.8 863.9,364.6 866.6,365.1Z" fill="#a9e2c6" opacity="0.6"></path>
<path d="M825.6,231.2 823.8,233.5 822.7,234.7 820.0,233.3 820.1,232.3 821.2,230.8 822.8,229.6 823.6,230.4Z" fill="#a9e2c6" opacity="0.6"></path>
<path d="M830.0,363.5 829.4,366.7 826.8,365.8 825.3,364.3 826.0,362.8 830.2,361.5Z" fill="#a9e2c6" opacity="0.6"></path>
<path d="M720.0,354.6 717.1,356.3 713.4,356.6 711.2,354.1 713.7,353.6 717.0,353.3Z" fill="#a9e2c6" opacity="0.6"></path>
<path d="M870.8,325.2 868.9,327.2 866.8,326.0 865.0,324.9 867.7,322.9 870.1,322.3Z" fill="#a9e2c6" opacity="0.6"></path>
<path d="M842.1,230.7 842.2,233.9 838.6,232.5 836.6,230.9 838.7,228.7 842.1,228.3Z" fill="#a9e2c6" opacity="0.6"></path>
<path d="M923.8,288.1 922.2,291.0 918.4,290.1 918.2,285.8 921.9,285.2Z" fill="#a9e2c6" opacity="0.6"></path>
<path d="M937.4,206.4 933.3,209.4 931.5,211.2 928.0,208.2 926.7,204.9 931.6,201.9 934.0,204.9Z" fill="#a9e2c6" opacity="0.6"></path>
<path d="M762,48 789,48 788,62 782,80 784,95 782,108 770,110 764,95 763,75Z" fill="#f1eee2"></path>
<path d="M772,80 782,84 776,92 770,88Z" fill="#b8e6cd"></path>
<path d="M766,75 786,68" fill="none" stroke="#b0e3c8" stroke-width="1.5" stroke-linejoin="round" stroke-linecap="round"></path>
<path d="M768,88 784,82" fill="none" stroke="#b0e3c8" stroke-width="1.5" stroke-linejoin="round" stroke-linecap="round"></path>
<path d="M765,60 783,55" fill="none" stroke="#d5ecd8" stroke-width="1.2" stroke-linejoin="round" stroke-linecap="round"></path>
<path d="M876.3,57.2 874.8,58.2 871.9,57.8 871.0,55.2 870.0,53.2 871.8,52.6 875.0,52.9 876.4,54.4Z" fill="#f1ede1"></path>
<path d="M888.6,88.8 887.0,87.6 884.9,85.8 885.1,83.3 887.1,82.7 889.0,83.2 889.5,84.7 890.3,86.3Z" fill="#f1ede1"></path>
<path d="M899.2,73.0 896.5,73.8 893.3,73.1 890.8,70.1 890.5,68.8 891.7,67.3 895.3,69.0 898.4,70.4Z" fill="#f1ede1"></path>
<path d="M890.6,67.8 889.0,67.5 888.9,63.7 888.2,60.0 889.8,59.9 891.0,59.2 892.3,63.3 892.1,67.6Z" fill="#f1ede1"></path>
<path d="M880.2,101.3 879.3,99.9 878.5,96.9 880.0,93.5 881.5,92.3 882.9,94.5 882.6,97.6 882.3,100.0Z" fill="#f1ede1"></path>
<path d="M884.7,94.5 883.1,93.4 883.0,90.4 884.0,88.3 886.3,87.0 887.0,88.9 887.9,91.5 886.0,94.1Z" fill="#f1ede1"></path>
<path d="M884.5,98.7 882.0,100.7 878.4,100.5 875.0,99.4 875.8,96.2 876.2,94.4 880.7,92.6 882.8,96.1Z" fill="#f1ede1"></path>
<path d="M858.2,67.9 859.1,65.1 861.7,64.1 864.0,65.0 866.9,66.1 865.2,68.9 862.7,69.2 860.6,70.1Z" fill="#f1ede1"></path>
<path d="M872.0,60.1 872.9,58.2 875.2,56.9 877.6,58.2 879.1,60.1 878.5,62.1 875.2,62.6 872.2,61.8Z" fill="#f1ede1"></path>
<path d="M884.5,63.8 881.3,64.1 879.1,61.3 879.7,58.6 882.3,57.1 884.7,57.0 885.5,59.2 886.1,62.6Z" fill="#f1ede1"></path>
<path d="M950.8,116.5 948.1,120.3 940.4,118.9 942.3,115.7 946.6,113.0Z" fill="#f1eee2"></path>
<path d="M924.4,66.0 920.7,70.5 917.9,70.0 915.9,67.8 915.1,66.1 916.3,62.3 922.0,62.7Z" fill="#f1eee2"></path>
<path d="M910.4,112.4 909.7,115.3 906.6,116.9 904.0,115.8 902.2,114.1 904.2,111.6 906.3,111.5 908.7,112.1Z" fill="#f1eee2"></path>
<path d="M949.3,106.7 947.3,108.7 945.1,108.9 942.9,107.4 942.5,103.9 943.5,103.1 946.8,102.7Z" fill="#f1eee2"></path>
<path d="M877.8,67.9 875.4,72.0 872.4,71.2 869.0,71.0 867.0,67.4 871.1,64.8 877.0,66.3Z" fill="#f1eee2"></path>
<path d="M902.6,88.0 900.9,89.8 896.1,89.0 897.6,86.5 900.3,85.5Z" fill="#f1eee2"></path>
<path d="M913.6,94.7 912.7,97.6 908.5,95.9 908.8,93.6 912.0,93.6Z" fill="#f1eee2"></path>
<path d="M922.9,77.2 918.7,78.0 916.5,78.2 915.0,76.7 916.4,73.3 918.8,73.9Z" fill="#f1eee2"></path>
<path d="M858.4,114.9 858.2,116.9 856.8,116.7 854.5,116.2 855.4,115.4 855.3,113.4 855.9,113.3 857.7,113.8Z" fill="#f1eee2"></path>
<path d="M871.5,57.4 869.0,60.5 864.8,57.7 863.1,55.1 868.0,52.6Z" fill="#f1eee2"></path>
<path d="M946.4,98.1 946.6,100.7 942.0,99.9 940.2,97.9 940.2,94.8 946.0,94.9Z" fill="#f1eee2"></path>
<path d="M935.0,83.0 934.7,84.8 931.0,86.8 930.1,85.2 929.0,83.7 929.9,82.0 932.2,80.0 935.9,80.8Z" fill="#f1eee2"></path>
<g filter="url(#bl)">
<path d="M54,70 80,77 110,90 132,108 142,135 150,169 133,172 124.5,145 122,134 116,124.8 95.5,108 75,93.7 54,84Z" fill="#c6e9d6"></path>
</g>
<path d="M58.0,80.0 70.0,71.0" fill="none" stroke="#d8eedf" stroke-width="1.2" stroke-linejoin="round" stroke-linecap="round" opacity="0.7"></path>
<path d="M62.8,85.46666666666667 74.8,76.46666666666667" fill="none" stroke="#d8eedf" stroke-width="1.2" stroke-linejoin="round" stroke-linecap="round" opacity="0.7"></path>
<path d="M67.6,90.93333333333334 79.6,81.93333333333334" fill="none" stroke="#d8eedf" stroke-width="1.2" stroke-linejoin="round" stroke-linecap="round" opacity="0.7"></path>
<path d="M72.4,96.4 84.4,87.4" fill="none" stroke="#d8eedf" stroke-width="1.2" stroke-linejoin="round" stroke-linecap="round" opacity="0.7"></path>
<path d="M77.2,101.86666666666667 89.2,92.86666666666667" fill="none" stroke="#d8eedf" stroke-width="1.2" stroke-linejoin="round" stroke-linecap="round" opacity="0.7"></path>
<path d="M82.0,107.33333333333333 94.0,98.33333333333333" fill="none" stroke="#d8eedf" stroke-width="1.2" stroke-linejoin="round" stroke-linecap="round" opacity="0.7"></path>
<path d="M86.8,112.80000000000001 98.8,103.80000000000001" fill="none" stroke="#d8eedf" stroke-width="1.2" stroke-linejoin="round" stroke-linecap="round" opacity="0.7"></path>
<path d="M91.6,118.26666666666667 103.6,109.26666666666667" fill="none" stroke="#d8eedf" stroke-width="1.2" stroke-linejoin="round" stroke-linecap="round" opacity="0.7"></path>
<path d="M96.4,123.73333333333333 108.4,114.73333333333333" fill="none" stroke="#d8eedf" stroke-width="1.2" stroke-linejoin="round" stroke-linecap="round" opacity="0.7"></path>
<path d="M101.19999999999999,129.2 113.19999999999999,120.19999999999999" fill="none" stroke="#d8eedf" stroke-width="1.2" stroke-linejoin="round" stroke-linecap="round" opacity="0.7"></path>
<path d="M106.0,134.66666666666666 118.0,125.66666666666666" fill="none" stroke="#d8eedf" stroke-width="1.2" stroke-linejoin="round" stroke-linecap="round" opacity="0.7"></path>
<path d="M110.8,140.13333333333333 122.8,131.13333333333333" fill="none" stroke="#d8eedf" stroke-width="1.2" stroke-linejoin="round" stroke-linecap="round" opacity="0.7"></path>
<path d="M115.6,145.60000000000002 127.6,136.60000000000002" fill="none" stroke="#d8eedf" stroke-width="1.2" stroke-linejoin="round" stroke-linecap="round" opacity="0.7"></path>
<path d="M120.4,151.06666666666666 132.4,142.06666666666666" fill="none" stroke="#d8eedf" stroke-width="1.2" stroke-linejoin="round" stroke-linecap="round" opacity="0.7"></path>
<path d="M125.2,156.53333333333333 137.2,147.53333333333333" fill="none" stroke="#d8eedf" stroke-width="1.2" stroke-linejoin="round" stroke-linecap="round" opacity="0.7"></path>
<path d="M130.0,162.0 142.0,153.0" fill="none" stroke="#d8eedf" stroke-width="1.2" stroke-linejoin="round" stroke-linecap="round" opacity="0.7"></path>
<g filter="url(#bl1)">
<path d="M54,84 75,93.7 95.5,108 116,124.8 122,134 124.5,145 133,169 54,169Z" fill="#f2efe4"></path>
</g>
<path d="M91.0,109.0 89.9,110.4 86.9,111.7 86.0,109.2 85.6,107.1 86.2,105.2 89.8,106.8Z" fill="#e4ecdf" opacity="0.7"></path>
<path d="M71.0,165.3 69.1,166.7 68.3,167.3 66.8,167.2 66.0,165.7 66.9,164.3 68.0,164.0 70.1,164.3Z" fill="#e4ecdf" opacity="0.7"></path>
<path d="M109.3,165.4 108.9,166.9 107.8,167.7 105.4,167.0 105.4,165.9 106.3,165.0 106.6,164.0 108.7,164.2Z" fill="#e4ecdf" opacity="0.7"></path>
<path d="M106.8,127.3 105.9,128.2 105.2,128.4 103.5,127.6 102.3,126.3 103.6,126.0 104.3,125.3 105.9,126.0Z" fill="#e4ecdf" opacity="0.7"></path>
<path d="M92.6,118.4 89.5,120.1 86.9,121.2 83.2,119.6 83.6,117.0 86.5,115.3 89.8,114.9Z" fill="#e4ecdf" opacity="0.7"></path>
<path d="M90.0,130.1 88.9,132.7 86.2,134.2 82.2,133.3 82.8,131.5 83.4,128.9 85.4,127.6 88.7,128.1Z" fill="#e4ecdf" opacity="0.7"></path>
<path d="M113.5,138.9 110.9,141.8 107.5,141.8 107.0,137.4 110.3,136.3Z" fill="#e4ecdf" opacity="0.7"></path>
<path d="M119.0,132.6 119.8,135.5 112.9,135.4 111.5,133.1 112.4,129.3 118.4,129.8Z" fill="#e4ecdf" opacity="0.7"></path>
<path d="M61.7,149.5 59.2,151.7 57.9,153.0 55.8,150.9 55.0,148.9 58.4,147.6 60.2,148.5Z" fill="#e4ecdf" opacity="0.7"></path>
<path d="M89.1,155.0 86.4,158.5 83.3,157.3 81.2,156.7 82.0,153.9 84.4,151.9 86.1,153.4Z" fill="#e4ecdf" opacity="0.7"></path>
<path d="M104,138 110,133 118,135 124,142 128,148 138,152 136,157 128,156 132,161 140,164 141,169 130,169 126,163 118,160 108,153 103,146Z" fill="#73cfe6"></path>
<path d="M54,486 77,486 72,495 66,510 65,534 66,550 64,565 66,580 54,580Z" fill="#76d1e6"></path>
<path d="M77,486 150,486 150,492 133,492 133,580 66,580 64,565 66,550 65,534 66,510 72,495Z" fill="#f3f0e6"></path>
<g filter="url(#bl)">
<path d="M133,486 230,486 230,580 133,580Z" fill="#e4f0e2"></path>
<path d="M190,534 230,534 230,580 190,580Z" fill="#d0ebdb"></path>
</g>
<path d="M168.3,569.2 165.6,572.5 162.6,573.6 160.6,571.3 159.8,568.6 163.5,567.5 166.2,568.3Z" fill="#f3f0e6"></path>
<path d="M192.0,551.1 189.4,552.9 185.3,553.3 184.9,550.1 190.5,547.9Z" fill="#f3f0e6"></path>
<path d="M197.1,566.3 195.0,569.8 193.4,569.8 190.7,568.8 189.5,567.1 191.0,564.4 194.1,563.6 195.2,564.3Z" fill="#f3f0e6"></path>
<path d="M168.1,561.7 166.9,563.5 164.2,564.6 164.0,562.3 163.2,559.9 165.0,558.5 167.6,560.2Z" fill="#f3f0e6"></path>
<path d="M216.8,551.9 215.7,553.9 212.6,553.2 210.2,551.0 212.3,549.4 215.5,549.1Z" fill="#f3f0e6"></path>
<path d="M208.2,552.0 208.2,554.3 204.2,555.8 199.9,553.8 201.0,551.2 202.3,550.4 205.6,547.5 210.6,549.1Z" fill="#f3f0e6"></path>
<path d="M152.2,563.9 151.2,565.2 148.8,565.4 147.6,564.2 149.4,562.3 152.0,562.1Z" fill="#f3f0e6"></path>
<path d="M187.0,534.6 185.6,537.0 181.6,536.4 180.5,534.9 180.6,532.3 184.5,533.0Z" fill="#f3f0e6"></path>
<path d="M160.4,551.3 160.9,552.7 157.3,552.8 155.4,553.1 153.9,550.5 157.9,549.3 159.3,549.8Z" fill="#f3f0e6"></path>
<path d="M147.7,550.9 143.4,554.3 137.5,552.3 136.4,547.3 143.0,546.4Z" fill="#f3f0e6"></path>
<path d="M193.3,579.1 192.6,580.3 188.1,580.9 187.6,579.3 187.2,577.4 188.8,575.6 191.0,576.0Z" fill="#f3f0e6"></path>
<path d="M209.0,557.7 204.2,559.4 199.6,560.7 196.9,557.7 196.6,554.0 201.1,551.2 206.3,553.2Z" fill="#f3f0e6"></path>
<path d="M187.1,543.3 184.4,544.5 181.2,545.1 176.4,544.9 177.1,542.7 177.0,540.6 181.9,540.1 184.2,538.9Z" fill="#f3f0e6"></path>
<path d="M178.4,569.3 178.4,573.7 174.3,576.0 169.4,571.9 167.4,570.0 167.2,567.9 173.5,567.1 176.5,565.9Z" fill="#f3f0e6"></path>
<path d="M148.3,540.1 144.4,542.4 138.8,542.7 139.7,538.7 142.5,537.0Z" fill="#f3f0e6"></path>
<path d="M182.6,555.7 181.8,557.4 179.6,558.6 173.7,557.0 175.7,554.6 174.6,552.0 178.6,551.0 180.5,553.9Z" fill="#f3f0e6"></path>
<path d="M204.7,565.2 205.0,568.5 201.0,568.3 199.4,565.6 199.7,563.3 204.7,561.3Z" fill="#f3f0e6"></path>
<path d="M151.5,543.5 150.6,546.0 145.6,546.0 145.1,542.8 144.4,540.4 150.0,539.4Z" fill="#f3f0e6"></path>
<path d="M184.5,546.9 185.3,548.4 182.6,548.3 180.5,548.8 180.6,546.7 180.3,545.8 182.5,545.5 184.3,546.2Z" fill="#f3f0e6"></path>
<path d="M168.0,544.2 166.7,544.7 165.4,544.7 164.1,544.4 163.4,544.2 164.8,542.8 165.9,542.5 167.1,542.5Z" fill="#f3f0e6"></path>
<path d="M201.9,549.0 200.5,550.7 197.2,549.2 197.2,546.3 200.9,545.4Z" fill="#f3f0e6"></path>
<path d="M210.4,567.4 209.3,573.5 203.5,570.4 200.1,565.6 206.0,564.3Z" fill="#f3f0e6"></path>
<path d="M148.3,565.9 144.8,567.8 141.3,566.6 142.0,564.7 146.4,562.9Z" fill="#b8e6cd"></path>
<path d="M196.7,573.5 193.6,574.3 192.0,575.8 190.5,573.8 190.5,572.1 192.0,571.2 194.3,571.5Z" fill="#b8e6cd"></path>
<path d="M212.4,539.1 210.6,540.2 208.4,541.1 208.0,538.8 208.0,536.9 210.5,537.1Z" fill="#b8e6cd"></path>
<path d="M181.5,554.1 176.8,557.0 172.7,555.7 173.4,551.3 177.2,549.5Z" fill="#b8e6cd"></path>
<path d="M149.6,546.3 148.4,549.2 145.8,547.5 143.4,547.8 142.1,545.1 145.4,544.4 148.9,544.6Z" fill="#b8e6cd"></path>
<path d="M181.1,561.1 180.1,562.6 177.8,563.0 178.4,560.6 179.7,559.3Z" fill="#b8e6cd"></path>
<path d="M212.4,566.4 209.7,568.3 207.6,569.0 204.3,567.5 206.0,565.7 208.3,563.0 211.5,563.8Z" fill="#b8e6cd"></path>
<path d="M216.3,544.6 214.2,548.9 207.9,549.0 206.0,544.3 208.7,542.6 213.7,541.8Z" fill="#b8e6cd"></path>
<path d="M172.4,576.1 169.5,576.5 165.8,577.7 164.9,575.4 166.9,572.8 170.3,573.6Z" fill="#b8e6cd"></path>
<path d="M212.3,569.7 211.8,571.6 209.0,571.9 208.3,569.9 208.3,568.2 209.6,568.2 212.1,567.9Z" fill="#b8e6cd"></path>
<path d="M159.1,491.2 157.7,493.9 153.7,493.0 155.2,490.2 156.5,488.1Z" fill="#f3f0e6"></path>
<path d="M164.1,491.1 164.8,492.2 163.0,492.5 161.0,492.6 160.6,490.6 160.8,489.9 162.1,489.1 164.2,489.5Z" fill="#f3f0e6"></path>
<path d="M201.5,487.4 200.5,488.7 198.5,488.8 196.9,488.0 197.6,486.1 200.0,486.0Z" fill="#f3f0e6"></path>
<path d="M187.7,488.3 188.4,491.2 183.1,491.3 182.4,488.6 184.0,485.8 187.2,487.0Z" fill="#f3f0e6"></path>
<path d="M291.8,565.7 288.4,569.0 286.7,569.7 281.8,568.9 280.3,566.0 281.0,562.6 285.0,562.8 289.1,563.3Z" fill="#f1ede1"></path>
<path d="M308.3,573.4 306.7,576.4 304.3,575.6 302.8,573.8 304.9,572.3 306.5,572.0Z" fill="#f1ede1"></path>
<path d="M309.1,554.2 306.2,555.4 301.9,555.7 303.6,553.5 305.5,551.4Z" fill="#f1ede1"></path>
<path d="M332.6,538.0 331.2,539.5 324.7,542.2 320.9,541.7 318.5,538.8 323.0,534.1 325.5,530.0 330.2,532.6Z" fill="#f1ede1"></path>
<path d="M290.7,558.8 288.2,562.3 286.8,562.9 282.1,562.4 280.9,559.0 282.7,557.1 287.5,555.2 288.2,557.6Z" fill="#f1ede1"></path>
<path d="M301.3,544.1 294.5,549.2 286.4,548.6 286.4,539.1 294.1,536.5Z" fill="#f1ede1"></path>
<path d="M329.1,549.3 323.4,555.8 317.6,551.3 319.7,546.8 327.5,543.0Z" fill="#f1ede1"></path>
<path d="M339.2,555.3 338.0,557.3 334.8,558.0 334.9,555.5 334.2,553.4 338.2,553.5Z" fill="#f1ede1"></path>
<path d="M226.0,539.4 221.8,541.3 216.3,541.5 217.7,537.2 223.0,533.3Z" fill="#f1ede1"></path>
<path d="M267.7,572.9 263.9,574.0 261.3,576.3 258.6,573.6 258.0,570.7 262.0,569.5 265.2,569.8Z" fill="#f1ede1"></path>
<path d="M258.5,563.7 255.8,567.6 253.4,570.3 249.8,567.7 246.9,566.5 248.1,562.2 253.5,559.5 257.6,559.5Z" fill="#f1ede1"></path>
<path d="M298,540 320,536 346,540 342,556 330,562 318,575 300,570 296,556Z" fill="#f1ede1"></path>
<path d="M371.4,491.3 370.6,493.1 364.9,494.4 365.5,491.8 366.7,487.4 370.5,487.6Z" fill="#f1ede1"></path>
<path d="M262.3,487.5 262.2,489.5 260.2,489.0 259.1,489.5 257.5,488.2 258.1,485.6 260.9,485.4 262.5,486.5Z" fill="#f1ede1"></path>
<path d="M277.3,486.9 276.8,489.3 270.9,487.9 272.8,484.5 274.9,483.9Z" fill="#f1ede1"></path>
<path d="M317.4,488.8 317.8,490.1 315.3,490.7 313.5,489.4 313.6,487.6 315.4,485.6 317.0,487.4Z" fill="#f1ede1"></path>
<path d="M223.7,488.2 222.7,490.6 218.3,490.6 216.5,489.2 219.1,485.4 221.3,485.9Z" fill="#f1ede1"></path>
<path d="M264.2,491.2 264.2,494.1 262.7,493.5 260.1,493.6 259.1,491.4 259.0,488.9 261.7,487.7 265.1,488.6Z" fill="#f1ede1"></path>
<path d="M257.7,487.1 256.4,489.4 254.3,489.3 252.8,490.1 251.1,488.7 251.8,485.7 255.1,485.9 256.2,486.3Z" fill="#f1ede1"></path>
<path d="M377.4,488.8 374.0,492.0 368.6,491.4 370.2,486.1 373.6,486.8Z" fill="#f1ede1"></path>
<path d="M262,541 268,540 270,546 266,560 258,570 252,580 222,580 230,572 244,564 254,554Z" fill="#73cfe6"></path>
<path d="M587.9,571.5 583.8,575.1 579.8,576.0 579.1,573.0 580.9,569.3 585.0,570.0Z" fill="#a9e2c6" opacity="0.7"></path>
<path d="M569.2,529.3 567.9,531.5 565.5,531.2 563.9,529.6 565.9,527.6 567.9,527.9Z" fill="#a9e2c6" opacity="0.7"></path>
<path d="M695.3,540.8 694.7,542.1 691.9,542.9 690.3,542.8 690.0,540.0 690.5,537.9 692.2,538.9 694.0,538.8Z" fill="#a9e2c6" opacity="0.7"></path>
<path d="M473.7,514.0 470.2,517.1 467.0,515.9 466.3,513.8 471.2,511.3Z" fill="#a9e2c6" opacity="0.7"></path>
<path d="M548.6,528.0 546.4,530.4 544.2,529.2 543.9,528.5 544.4,526.4 546.7,526.1Z" fill="#a9e2c6" opacity="0.7"></path>
<path d="M490.9,545.6 490.3,546.4 489.3,547.7 488.3,547.0 487.4,545.6 488.3,545.0 489.8,544.0 490.4,544.2Z" fill="#a9e2c6" opacity="0.7"></path>
<path d="M608.3,497.1 605.5,499.0 603.2,500.3 601.4,497.5 603.4,495.5 605.5,494.9Z" fill="#a9e2c6" opacity="0.7"></path>
<path d="M491.7,518.7 490.6,522.7 485.5,520.1 483.6,516.7 489.6,515.2Z" fill="#a9e2c6" opacity="0.7"></path>
<path d="M501.7,547.5 500.6,549.1 498.5,549.1 497.7,548.0 498.8,546.2 501.0,546.3Z" fill="#a9e2c6" opacity="0.7"></path>
<path d="M454.0,546.3 452.2,548.3 446.2,550.4 443.9,546.0 448.7,541.6 453.9,543.0Z" fill="#a9e2c6" opacity="0.7"></path>
<path d="M520.1,561.7 519.0,562.8 517.0,562.8 515.9,562.6 514.3,560.8 515.9,559.5 517.6,559.5 518.1,559.6Z" fill="#a9e2c6" opacity="0.7"></path>
<path d="M580.1,559.0 577.1,561.2 574.7,561.5 570.8,559.0 575.0,556.5 577.4,557.0Z" fill="#a9e2c6" opacity="0.7"></path>
<path d="M636.7,526.0 635.6,529.7 631.2,529.9 629.2,525.7 631.2,522.4 636.1,521.3Z" fill="#a9e2c6" opacity="0.7"></path>
<path d="M501.1,520.4 500.0,521.6 496.9,522.8 495.0,520.8 496.9,518.2 500.3,517.4Z" fill="#a9e2c6" opacity="0.7"></path>
<path d="M628.8,547.0 627.7,550.4 623.5,551.8 617.0,549.9 617.9,546.8 618.8,543.1 621.2,542.9 625.3,546.1Z" fill="#a9e2c6" opacity="0.7"></path>
<path d="M540.7,558.8 539.0,561.2 533.9,562.0 529.3,560.0 531.8,557.3 533.9,556.4 541.2,555.2Z" fill="#a9e2c6" opacity="0.7"></path>
<path d="M693.0,518.5 691.7,520.3 689.4,520.9 687.6,521.3 686.5,517.5 687.3,514.8 690.7,515.2 693.3,516.4Z" fill="#a9e2c6" opacity="0.7"></path>
<path d="M671.7,510.1 670.6,511.0 669.0,512.3 667.4,511.4 667.9,509.8 668.3,509.1 669.8,509.1 670.6,509.0Z" fill="#a9e2c6" opacity="0.7"></path>
<path d="M580.6,578.1 579.0,579.8 576.8,580.6 574.3,578.6 574.9,576.6 577.1,574.9 579.0,575.9Z" fill="#a9e2c6" opacity="0.7"></path>
<path d="M529.9,530.7 528.5,531.8 525.8,532.1 524.4,530.7 525.4,528.4 529.5,528.6Z" fill="#a9e2c6" opacity="0.7"></path>
<path d="M583.2,528.3 581.1,530.1 578.8,530.8 576.4,530.2 573.1,528.4 573.3,525.8 578.1,524.0 582.3,524.7Z" fill="#a9e2c6" opacity="0.7"></path>
<path d="M616.6,504.9 615.3,506.6 613.0,507.3 611.5,505.6 611.9,504.1 612.6,503.0 614.7,503.4Z" fill="#a9e2c6" opacity="0.7"></path>
<path d="M634.8,513.5 633.3,514.6 632.5,515.7 631.2,514.3 631.6,513.5 632.0,512.2 633.5,512.4Z" fill="#a9e2c6" opacity="0.7"></path>
<path d="M652.5,495.3 651.7,496.5 650.7,496.2 649.0,496.2 649.7,494.7 650.4,493.9 652.9,494.1Z" fill="#a9e2c6" opacity="0.7"></path>
<path d="M648.8,514.8 648.0,516.8 644.4,517.3 642.5,514.8 641.0,513.8 644.4,512.8 648.0,512.7Z" fill="#a9e2c6" opacity="0.7"></path>
<path d="M997.4,48 989.7,59.4 977,69.6 968,73.5 964,95.3 965.4,121 968,146.6 962.8,172 960,190 959.6,204 951.7,214 944.8,229 943.8,249 939,259 933,269 929,279 921,288.6 915,298.5 910,310 908,313 908,326 894.5,337 885,343 882,352.6 872,358 859,358.5 843,360.5 832.6,358 819.5,360.5 806,365.8 797,371 788,379 774,382.6 757.6,390.8 741,402 724.7,415.5 720,420 713,425.4 708,446 707,486 701.6,499 693.7,525 685.8,538 672.6,551.6 662,564.7 649,580 1292,580 1292,48Z" fill="none" stroke="#a6e0c3" stroke-width="14" stroke-linejoin="round" opacity="0.85"></path>
<path d="M913.1,335.4 911.6,337.0 909.8,336.0 909.0,334.8 912.1,333.8Z" fill="#c0ead5" opacity="0.6"></path>
<path d="M826.6,153.9 824.5,155.6 821.3,156.1 819.7,154.2 820.9,151.7 823.5,150.8Z" fill="#c0ead5" opacity="0.6"></path>
<path d="M849.1,142.3 849.6,143.9 846.1,144.3 844.7,144.6 842.9,141.7 844.1,139.9 846.4,140.9 848.1,140.5Z" fill="#c0ead5" opacity="0.6"></path>
<path d="M817.1,137.9 815.7,140.2 813.0,138.6 811.8,137.3 815.2,137.0Z" fill="#c0ead5" opacity="0.6"></path>
<path d="M790.1,368.2 786.9,371.8 783.8,370.2 781.9,368.2 783.7,365.7 787.5,366.9Z" fill="#c0ead5" opacity="0.6"></path>
<path d="M800.6,308.8 799.8,310.2 797.7,310.2 796.0,309.1 798.1,306.6 800.1,307.0Z" fill="#c0ead5" opacity="0.6"></path>
<path d="M969.8,107.3 968.0,110.4 965.5,109.3 963.1,109.0 964.5,106.8 965.6,105.5 967.1,106.2Z" fill="#c0ead5" opacity="0.6"></path>
<path d="M907.7,299.4 905.4,300.8 904.0,301.9 902.5,301.1 901.5,300.0 900.9,298.2 903.3,297.2 906.6,298.8Z" fill="#c0ead5" opacity="0.6"></path>
<path d="M896.3,368.5 894.6,373.0 889.1,370.4 887.8,366.3 894.9,365.5Z" fill="#c0ead5" opacity="0.6"></path>
<path d="M737.2,168.3 735.3,171.5 731.5,171.4 725.2,169.2 727.2,164.4 730.8,163.8 736.3,164.3Z" fill="#c0ead5" opacity="0.6"></path>
<path d="M964.8,330.2 961.4,330.4 960.3,332.5 957.2,330.2 956.0,329.8 957.4,326.6 958.8,326.8 963.1,327.3Z" fill="#c0ead5" opacity="0.6"></path>
<path d="M918.9,228.9 915.9,231.3 912.1,233.7 907.9,228.7 911.1,225.5 916.7,223.7Z" fill="#c0ead5" opacity="0.6"></path>
<path d="M867.5,201.6 866.8,203.0 863.9,205.3 862.0,204.0 859.7,201.4 861.7,199.7 864.9,199.2 867.2,199.7Z" fill="#c0ead5" opacity="0.6"></path>
<path d="M762.6,243.8 761.6,244.5 760.2,245.3 758.7,244.9 758.5,243.4 758.8,242.3 760.2,242.1 762.1,242.3Z" fill="#c0ead5" opacity="0.6"></path>
<path d="M853.3,300.8 852.5,302.4 849.8,303.0 846.4,303.3 845.8,300.9 847.3,298.8 850.2,298.8 851.3,298.2Z" fill="#c0ead5" opacity="0.6"></path>
<path d="M893.5,197.4 892.9,198.8 891.4,200.4 889.5,200.3 888.3,197.5 888.7,196.1 892.0,195.3 892.7,196.2Z" fill="#c0ead5" opacity="0.6"></path>
<path d="M923.9,258.5 923.4,262.1 921.2,264.0 918.2,260.7 917.0,258.7 918.3,257.0 920.4,256.1 923.0,257.0Z" fill="#c0ead5" opacity="0.6"></path>
<path d="M943.8,196.7 940.6,201.7 936.5,197.8 936.6,193.2 940.4,192.9Z" fill="#c0ead5" opacity="0.6"></path>
<path d="M896.1,256.9 892.2,258.3 889.0,257.1 888.1,253.7 892.3,251.6Z" fill="#c0ead5" opacity="0.6"></path>
<path d="M920.1,141.3 917.8,142.8 914.6,142.0 912.3,140.9 915.0,137.7 918.2,137.5Z" fill="#c0ead5" opacity="0.6"></path>
<path d="M884.9,368.6 883.2,369.9 882.3,370.5 880.4,370.9 880.0,369.1 880.5,368.1 882.0,368.0 883.0,368.5Z" fill="#c0ead5" opacity="0.6"></path>
<path d="M955.8,135.3 955.5,137.4 952.3,137.9 951.4,136.3 951.8,134.7 953.0,132.6 955.0,133.1Z" fill="#c0ead5" opacity="0.6"></path>
<path d="M794.8,273.9 792.5,277.9 787.5,277.3 784.0,277.8 786.6,273.7 787.9,271.0 791.8,271.4Z" fill="#c0ead5" opacity="0.6"></path>
<path d="M869.7,213.4 867.9,215.3 866.1,214.4 864.8,213.5 865.1,211.9 867.7,211.6Z" fill="#c0ead5" opacity="0.6"></path>
<path d="M777.9,119.2 774.9,122.8 771.1,121.0 769.4,117.1 774.8,114.4Z" fill="#c0ead5" opacity="0.6"></path>
<path d="M769.4,155.7 766.7,158.9 764.7,160.1 762.4,159.2 760.8,157.1 760.1,154.2 763.7,154.3 766.6,154.7Z" fill="#c0ead5" opacity="0.6"></path>
<path d="M765.9,396.8 764.6,397.7 761.9,397.7 760.8,396.6 762.8,395.1 764.0,394.6Z" fill="#c0ead5" opacity="0.6"></path>
<path d="M973.7,416.7 971.4,419.2 969.4,418.1 968.9,416.8 972.1,415.6Z" fill="#c0ead5" opacity="0.6"></path>
<path d="M969.2,90.0 964.2,92.3 959.1,93.9 957.8,87.7 959.8,85.3 964.8,84.7Z" fill="#c0ead5" opacity="0.6"></path>
<path d="M937.3,103.5 935.9,105.8 933.5,106.3 930.7,106.2 929.6,103.2 931.1,102.2 932.3,100.6 936.9,101.4Z" fill="#c0ead5" opacity="0.6"></path>
<path d="M897.6,151.6 894.9,156.2 888.9,153.6 887.9,149.5 894.6,146.7Z" fill="#c0ead5" opacity="0.6"></path>
<path d="M748.3,227.3 747.9,228.6 745.1,229.3 744.1,228.7 744.5,227.3 744.9,225.9 746.9,226.2Z" fill="#c0ead5" opacity="0.6"></path>
<path d="M736.6,381.7 734.2,383.3 732.5,384.0 731.4,382.0 731.7,379.7 734.4,379.9Z" fill="#c0ead5" opacity="0.6"></path>
<path d="M846.4,291.8 845.7,294.1 843.3,293.7 842.0,292.8 841.4,292.1 843.4,291.2 845.6,290.8Z" fill="#c0ead5" opacity="0.6"></path>
<path d="M844.8,412.4 842.8,417.1 837.2,418.5 836.0,414.2 834.0,412.5 838.1,411.4 843.4,408.8Z" fill="#c0ead5" opacity="0.6"></path>
<path d="M962.7,72.0 960.6,73.9 959.1,73.6 958.8,71.1 960.6,71.3Z" fill="#c0ead5" opacity="0.6"></path>
<path d="M761.5,327.6 759.9,331.4 756.2,332.6 754.0,329.5 751.1,326.2 756.1,323.7 758.7,326.3Z" fill="#c0ead5" opacity="0.6"></path>
<path d="M926.2,139.9 924.0,143.8 919.9,143.8 917.8,139.4 920.5,137.4 923.4,136.9Z" fill="#c0ead5" opacity="0.6"></path>
<path d="M970.2,148.0 970.3,150.8 965.6,151.2 962.8,149.4 963.5,147.2 962.6,143.9 967.4,145.2 968.8,145.2Z" fill="#c0ead5" opacity="0.6"></path>
<path d="M935.1,125.2 933.9,126.7 932.0,128.0 930.1,127.6 928.1,125.9 929.3,124.0 930.6,122.8 934.2,123.7Z" fill="#c0ead5" opacity="0.6"></path>
<path d="M908.7,81.1 906.3,83.5 905.4,84.5 903.2,83.5 902.2,82.2 902.9,80.0 905.3,79.6 907.7,79.9Z" fill="#c0ead5" opacity="0.6"></path>
<path d="M882.3,277.8 878.8,280.6 874.9,282.2 871.9,278.9 875.1,272.4 880.6,274.0Z" fill="#c0ead5" opacity="0.6"></path>
<path d="M799.9,228.1 799.5,230.5 793.5,229.8 788.5,229.5 787.0,228.2 789.9,223.8 792.6,224.2 796.3,225.8Z" fill="#c0ead5" opacity="0.6"></path>
<path d="M755.7,85.4 754.2,88.2 751.6,89.1 750.5,85.1 752.6,83.1 755.1,83.3Z" fill="#c0ead5" opacity="0.6"></path>
<path d="M711.0,108.3 709.2,112.7 705.6,112.8 701.9,112.1 700.6,110.3 703.0,106.2 706.1,104.9 708.6,107.5Z" fill="#c0ead5" opacity="0.6"></path>
<path d="M823.3,168.7 821.9,169.7 818.0,169.9 818.3,166.7 822.2,166.1Z" fill="#c0ead5" opacity="0.6"></path>
<path d="M933.7,274.5 932.0,276.6 928.4,275.9 926.7,274.7 929.4,272.5 931.7,273.3Z" fill="#c0ead5" opacity="0.6"></path>
<path d="M833.4,159.3 831.8,162.6 827.3,161.1 825.7,160.0 827.8,157.2 829.8,157.1Z" fill="#c0ead5" opacity="0.6"></path>
<path d="M714.6,170.9 712.8,174.7 708.1,175.4 707.2,172.2 707.2,167.4 712.3,167.7Z" fill="#c0ead5" opacity="0.6"></path>
<path d="M924.9,265.2 924.9,266.8 922.4,267.0 921.1,266.3 921.7,264.6 922.5,263.9 924.5,263.6Z" fill="#c0ead5" opacity="0.6"></path>
<path d="M901.1,312.3 899.5,313.5 896.6,314.6 894.3,314.6 892.1,310.8 894.8,309.7 898.1,308.9 899.6,309.3Z" fill="#c0ead5" opacity="0.6"></path>
<path d="M786.0,152.9 784.9,154.2 784.2,154.0 782.1,153.1 781.8,152.4 784.2,150.2 786.2,151.5Z" fill="#c0ead5" opacity="0.6"></path>
<path d="M745.2,376.3 743.9,378.9 740.9,378.1 740.4,377.3 740.2,375.9 742.1,374.1 743.1,375.3Z" fill="#c0ead5" opacity="0.6"></path>
<path d="M954.6,147.7 953.9,151.2 948.7,152.5 947.5,148.2 949.2,143.5 954.9,144.8Z" fill="#c0ead5" opacity="0.6"></path>
<path d="M855.1,401.2 851.5,403.2 846.5,402.1 847.7,399.3 851.9,396.3Z" fill="#c0ead5" opacity="0.6"></path>
<path d="M814.3,348.8 812.6,351.5 808.1,350.9 806.2,347.7 811.8,345.5Z" fill="#c0ead5" opacity="0.6"></path>
<path d="M950.8,251.4 948.9,252.3 948.0,252.6 946.9,251.5 946.5,250.0 947.3,248.7 949.1,249.8Z" fill="#c0ead5" opacity="0.6"></path>
<path d="M911.2,361.7 910.4,363.6 908.4,363.1 906.7,362.2 907.5,360.7 911.1,360.5Z" fill="#c0ead5" opacity="0.6"></path>
<path d="M964.6,370.7 964.0,372.2 960.7,372.7 957.6,371.2 955.8,369.0 956.3,367.6 959.1,366.4 963.6,366.8Z" fill="#c0ead5" opacity="0.6"></path>
<path d="M936.3,345.0 934.7,346.7 933.2,348.2 931.2,346.4 928.5,344.8 932.1,341.9 936.1,342.8Z" fill="#c0ead5" opacity="0.6"></path>
<path d="M997.4,48 989.7,59.4 977,69.6 968,73.5 964,95.3 965.4,121 968,146.6 962.8,172 960,190 959.6,204 951.7,214 944.8,229 943.8,249 939,259 933,269 929,279 921,288.6 915,298.5 910,310 908,313 908,326 894.5,337 885,343 882,352.6 872,358 859,358.5 843,360.5 832.6,358 819.5,360.5 806,365.8 797,371 788,379 774,382.6 757.6,390.8 741,402 724.7,415.5 720,420 713,425.4 708,446 707,486 701.6,499 693.7,525 685.8,538 672.6,551.6 662,564.7 649,580 1292,580 1292,48Z" fill="#76d1e6"></path>
<line x1="799" y1="370" x2="799" y2="580" stroke="#80d7ea" stroke-width="0.8"></line>
<line x1="954.5" y1="214" x2="954.5" y2="580" stroke="#80d7ea" stroke-width="0.8"></line>
<line x1="1110" y1="48" x2="1110" y2="580" stroke="#80d7ea" stroke-width="0.8"></line>
<line x1="1265.5" y1="48" x2="1265.5" y2="580" stroke="#80d7ea" stroke-width="0.8"></line>
<line x1="963" y1="175.1" x2="1292" y2="175.1" stroke="#80d7ea" stroke-width="0.8"></line>
<line x1="908" y1="330.7" x2="1292" y2="330.7" stroke="#80d7ea" stroke-width="0.8"></line>
<line x1="708" y1="486.3" x2="1292" y2="486.3" stroke="#80d7ea" stroke-width="0.8"></line>
<path d="M139.0,48.0 137.8,50.9 137.8,54.1 137.8,57.3 136.0,60.0 136.5,63.1 134.6,65.9 134.6,69.0 135.2,72.1 135.1,75.1 133.7,78.0 132.6,80.9 133.9,84.1 133.0,87.0 132.2,90.5 133.7,93.8 134.9,97.1 135.4,100.5 135.0,104.0 132.7,106.1 130.5,108.1 130.0,111.6 128.1,113.9 126.4,116.4 124.4,118.7 122.0,120.6 123.7,123.5 124.4,126.7 126.0,129.7 126.5,133.0 124.0,136.1 122.7,140.0 120.0,143.0 121.4,145.8 122.0,148.9 123.5,151.8 124.6,154.7 124.5,158.0 127.8,158.6 130.8,159.9 132.9,162.9 136.0,164.0 134.1,167.3 130.7,169" fill="none" stroke="#4a4a4a" stroke-width="1.1" stroke-linejoin="round" stroke-linecap="round"></path>
<path d="M255.0,48.0 257.4,50.0 259.2,52.6 262.0,54.0 265.3,54.0 268.5,53.1 271.7,53.1 275.0,53.0 278.1,53.9 281.3,54.8 284.5,55.4 287.6,56.7 290.7,57.7 293.5,59.5 296.7,61.1 299.5,63.4 302.7,65.2 305.0,68.1 308.0,70.0 311.3,70.2 314.2,71.5 317.3,72.6 320.5,73.0 322.6,75.6 324.3,78.5 326.3,81.1 328.8,83.3 332.0,83.2 335.3,82.7 338.5,82.4 341.8,83.7 345.0,83.0 348.3,82.9 351.5,83.3 354.7,84.1 357.3,85.8 359.4,88.6 362.5,89.5 364.9,91.7 368.0,92.6 368.3,95.9 370.3,98.7 371.3,101.8 370.9,105.3 373.1,108.0 373.3,111.3 374.4,114.4 373.5,118.1 374.5,121.7 374.6,125.3 374.4,129.0 371.3,128.1 368.1,128.3 365.0,129.0 366.5,131.8 368.9,133.7 371.6,135.2 374.0,137.2 375.4,140" fill="none" stroke="#4a4a4a" stroke-width="1.1" stroke-linejoin="round" stroke-linecap="round"></path>
<path d="M375.4,140 376.4,163 426,164 427,172" fill="none" stroke="#4a4a4a" stroke-width="1.0" stroke-linejoin="round" stroke-linecap="round"></path>
<path d="M554.7,486.0 552.4,488.9 548.2,488.1 545.8,490.7 542.4,491.4 540.0,494.0 536.7,494.7 535.5,498.2 531.7,498.2 530.4,501.7 528.1,503.7 525.4,505.2 521.6,505.2 519.2,507.1 517.5,510.0 515.2,512.4 512.3,514.1 509.1,515.4 506.5,517.5 503.7,519.3 502.1,522.6 499.7,525.0 496.6,526.4 494.6,529.0 491.6,530.9 490.4,534.2 487.8,536.4 487.4,540.2 484.7,542.3 482.7,545.0 479.8,546.7 478.7,549.7 476.3,551.7 474.4,554.1 473.3,557.2 470.9,559.2 468.9,561.6 467.6,564.5 465.6,566.8 463.0,568.7 461.8,571.7 458.2,572.8 455.1,574.7 453.2,578.3 450,580" fill="none" stroke="#4a4a4a" stroke-width="1.1" stroke-linejoin="round" stroke-linecap="round"></path>
<path d="M420.0,488.0 422.9,489.3 426.0,490.1 428.8,491.7 432.0,492.0 435.4,492.8 438.5,494.4 441.9,495.3 445.0,497.0 447.9,498.2 450.9,498.6 454.2,497.7 457.1,498.5 460.1,499.2 463.0,500.6 466.0,501.0 469.7,500.5 472.9,498.7 476.3,497.2 480.0,497.0 483.4,496.6 486.7,496.0 489.9,495.1 493.2,494.1 496.6,494.0 499.3,491.7 502.0,489.6 505.5,488.5 508,486" fill="none" stroke="#2f4a5a" stroke-width="1.4" stroke-linejoin="round" stroke-linecap="round"></path>
<path d="M111.6,534.0 110.7,537.8 108.7,541.2 108.0,545.0 106.6,548.2 106.1,551.7 104.7,554.9 103.0,558.0 103.1,561.2 103.2,564.4 103.6,567.6 105.9,570.4 106.1,573.6 107.0,576.7 106.6,580" fill="none" stroke="#4a4a4a" stroke-width="1.1" stroke-linejoin="round" stroke-linecap="round"></path>
<path d="M134.6,492.0 137.0,489.6 140.0,488.0 143.8,486.8 147.7,486" fill="none" stroke="#4a4a4a" stroke-width="1.1" stroke-linejoin="round" stroke-linecap="round"></path>
<path d="M730.7,168.0 731.8,172.0 733.0,175.9 735.3,179.3 737.1,183.0 737.2,187.4 735.9,191.6 734.9,195.8 735.0,200.9 734.0,205.9 732.8,210.8 729.5,214.9 726.4,219.3 722.6,220.9 719.2,223.3 715.4,224.7 711.4,225.8 705.0,225.8" fill="none" stroke="#8c9a92" stroke-width="0.8" stroke-linejoin="round" stroke-linecap="round" stroke-dasharray="1.6 1.4"></path>
<path d="M705.0,270.7 709.2,272.1 713.5,271.9 717.8,272.2 722.2,272.0 726.4,272.8 730.9,275.6 734.9,279.2 735.4,284.1 738.2,288.4 737.8,293.5 739.2,298.1" fill="none" stroke="#8c9a92" stroke-width="0.8" stroke-linejoin="round" stroke-linecap="round" stroke-dasharray="1.6 1.4"></path>
<path d="M903.9,206.5 899.9,208.9 897.3,212.7 895.1,216.9 891.1,219.3 891.1,223.8 888.3,227.7 888.6,232.3 886.8,236.4 887.4,240.7 887.3,245.0 887.7,249.3 889.1,253.5 889.0,257.8 887.7,262.0 886.3,266.2 886.5,270.7 885.8,275.0 884.7,279.2 883.2,283.8 881.7,288.5 881.0,293.3 880.4,298.1" fill="none" stroke="#8c9a92" stroke-width="0.8" stroke-linejoin="round" stroke-linecap="round" stroke-dasharray="1.6 1.4"></path>
<path d="M650.0,62.6 654.4,64.1 658.9,64.5 663.4,65.6 668.1,64.8 672.4,66.4 677.0,66.7 680.9,65.5 684.9,64.6 689.0,64.7 693.0,66.5 696.2,69.6 700.6,70.5 704.4,72.6 708.0,75.0 712.6,77.5 717.4,79.2 722.5,80.0 727.3,78.7 731.6,76.2 736.6,75.4 741.0,73.0 744.5,70.9 748.3,69.6 752.1,68.4 756.1,67.6 760,66.7" fill="none" stroke="#8c9a92" stroke-width="0.8" stroke-linejoin="round" stroke-linecap="round" stroke-dasharray="1.6 1.4"></path>
<path d="M763.0,66.7 763.7,71.1 762.6,75.6 763.5,80.0 762.9,84.5 763.7,88.9 764.1,93.3 764.0,97.8 765.8,101.8 767.9,105.8 768.6,110.2 770.0,114.4 767.2,119.3 766.0,124.8 761.6,125.3 757.5,126.8 753.6,129.0 750.6,132.3 746.6,134.4 743.0,137.0 740.9,141.0 740.7,145.6 739.3,149.9 737.0,153.8 735.5,158.6 733.7,163.2 730.4,167.3 728.8,172" fill="none" stroke="#8c9a92" stroke-width="0.8" stroke-linejoin="round" stroke-linecap="round" stroke-dasharray="1.6 1.4"></path>
<path d="M768.0,133.0 772.1,131.0 776.2,129.1 779.1,125.2 783.6,123.9 787.6,121.7 790.8,118.3 795.0,116.5 798.8,113.6 803.8,113.2 807.7,110.7 811.3,107.3 815.8,106.0 820.0,105.1 824.4,105.8 828.6,104.6 832.9,104.9 837.1,104.1 841.4,103.7 845.7,104.2 850.0,104.0 854.3,103.2 858.7,103.0 862.7,100.5 867.1,100.3 871.3,98.9 875.7,99.0 880.0,98.0 884.3,97.6 888.6,98.2 892.8,99.8 897.1,99.4 901.4,99.8 905.7,99.9 910.0,100.0 914.4,100.0 918.5,101.5 922.7,102.6 927.3,101.5 931.3,103.5 935.8,103.1 940,104" fill="none" stroke="#8c9a92" stroke-width="0.8" stroke-linejoin="round" stroke-linecap="round" stroke-dasharray="1.6 1.4"></path>
<path d="M870.0,140.0 872.0,144.1 872.6,148.7 873.6,153.1 876.3,156.9 877.7,161.2 878.6,165.7 880.0,170.0 883.4,172.6 886.0,176.0 888.3,179.7 892.7,181.3 895.0,185.0 898.6,187.0 902.4,188.8 906.1,190.9 909.2,193.7 912.4,196.5 916.5,197.8 920.0,200.0 923.7,201.6 927.4,203.4 931.0,205.2 934.7,206.9 938.9,207.2 942.7,208.4 945.9,211.3 950,212" fill="none" stroke="#8c9a92" stroke-width="0.8" stroke-linejoin="round" stroke-linecap="round" stroke-dasharray="1.6 1.4"></path>
<path d="M760.0,332.0 764.0,331.4 768.2,331.2 771.9,328.9 776.1,329.4 780.0,328.0 783.8,326.1 787.8,324.9 791.8,323.7 795.9,322.9 800.0,322.0 804.3,321.3 808.6,321.2 813.0,321.2 817.1,319.6 821.4,319.3 825.7,318.4 830.0,318.0 834.2,316.6 838.5,315.3 842.6,313.6 847.0,313.0 851.5,312.7 855.9,311.7 860.0,310.0 864.1,309.2 868.0,307.5 871.9,306.2 875.8,304.6 880.0,304.0 883.9,302.7 888.2,303.4 892.0,301.8 896.0,300.6 900,300" fill="none" stroke="#8c9a92" stroke-width="0.8" stroke-linejoin="round" stroke-linecap="round" stroke-dasharray="1.6 1.4"></path>
<path d="M560.0,487.0 564.0,488.4 568.0,489.6 572.1,490.5 576.1,492.0 580.0,493.4 583.8,495.6 587.8,496.8 592.1,497.0 596.0,498.6 600.0,500.0 604.2,500.7 607.7,503.3 612.2,502.9 616.0,504.8 620.3,505.1 624.0,507.1 628.0,508.3 632.3,508.7 636.2,510.1 640.0,512.0 644.3,512.9 648.6,513.7 652.9,514.2 657.3,514.6 661.5,515.9 665.8,516.8 670.0,518.0 674.1,517.6 678.0,519.0 682.1,518.6 686.0,519.7 690,520" fill="none" stroke="#8c9a92" stroke-width="0.8" stroke-linejoin="round" stroke-linecap="round" stroke-dasharray="1.6 1.4"></path>
<path d="M230.0,534.0 232.1,538.2 235.8,541.5 237.5,546.0 240.0,550.0 243.9,552.2 247.6,554.7 251.8,556.3 255.7,558.6 260.0,560.0 263.9,561.3 268.1,561.5 271.8,563.6 275.9,564.5 280.0,565.0 283.8,566.8 288.2,566.1 291.8,568.8 296.1,568.7 300.0,570.0 304.3,571.5 308.4,573.4 313.1,573.7 317.1,575.7 321.7,576.2 326.0,577.7 330,580" fill="none" stroke="#8c9a92" stroke-width="0.8" stroke-linejoin="round" stroke-linecap="round" stroke-dasharray="1.6 1.4"></path>
<path d="M320.0,534.0 320.8,538.7 323.9,542.5 325.1,546.9 327.4,551.1 327.5,556.0 330.0,560.0 329.0,564.0 327.3,567.8 327.4,572.1 326.1,576.0 325,580" fill="none" stroke="#8c9a92" stroke-width="0.8" stroke-linejoin="round" stroke-linecap="round" stroke-dasharray="1.6 1.4"></path>
<path d="M717.8,168.0 720.5,169.6 722.4,172.0 724.5,174.2 727.1,175.9 729.4,177.9 732.1,179.4 733.6,182.3 737.1,182.8 739.3,185.0 740.9,187.7 743.5,189.4 744.7,192.4 746.8,194.6 749.6,196.2 750.4,199.5 753.1,201.2 754.8,203.8 756.6,206.2 758.5,208.6 760.6,210.8 762.2,214.0 764.3,216.6 767.3,218.6 769.2,221.5 772.1,220.4 774.0,217.6 776.9,216.4 778.7,213.8 781.8,212.8 784.1,210.8 787.1,208.8 791.0,208.5 793.9,206.3 797.0,204.4 799.8,202.9 803.3,202.6 805.5,199.7 809.0,199.5 811.8,198.0 814.2,195.5 817.5,195.0 820.5,193.7 821.6,190.4 824.9,188.5 825.2,184.7 827.9,182.4 829.5,179.5 831.2,176.6 831.5,172.1 833.3,168.0" fill="none" stroke="#9fc3d8" stroke-width="0.8" stroke-linejoin="round" stroke-linecap="round"></path>
<path d="M769.2,221.5 766.1,223.0 763.9,225.7 761.3,227.7 759.2,230.4 756.3,232.2 753.4,234.4 750.1,235.7 747.1,237.8 743.5,238.6 740.0,238.8 736.7,237.7 733.2,237.5 729.9,236.3 726.4,236.4 723.2,236.5 720.2,235.8 717.2,234.6 714.2,233.6 711.0,233.8 707.9,233.4 705.0,232.2" fill="none" stroke="#9fc3d8" stroke-width="0.8" stroke-linejoin="round" stroke-linecap="round"></path>
<path d="M756.3,232.2 759.0,234.3 760.8,237.1 762.9,239.7 764.4,242.8 767.0,245.0 769.2,247.7 770.7,250.8 771.7,254.2 774.4,256.7 775.6,260.0 778.1,262.5 778.2,266.5 780.0,269.4 782.7,271.8 784.1,275.0 786.3,277.6 787.7,280.7 789.9,283.2 790.7,286.7 792.4,289.7 794.8,292.1 796.6,295.3 799.1,298.1" fill="none" stroke="#9fc3d8" stroke-width="0.8" stroke-linejoin="round" stroke-linecap="round"></path>
<path d="M790.6,217.2 792.9,219.6 794.4,222.8 796.4,225.4 799.6,227.0 801.3,230.0 802.7,233.2 805.3,235.7 805.6,239.5 807.6,242.3 809.8,245.0 811.4,247.8 812.2,250.9 814.1,253.6" fill="none" stroke="#9fc3d8" stroke-width="0.8" stroke-linejoin="round" stroke-linecap="round"></path>
<path d="M809.8,245.0 812.3,242.8 814.8,240.6 818.1,239.5 820.4,237.0 823.5,235.8 826.7,234.6 829.1,232.2 831.4,229.8 833.0,226.9 835.1,224.3 837.7,222.3 839.8,219.7 841.9,217.2 844.4,215.2 845.0,211.9 847.3,209.8 849.1,207.4 850.8,204.8 852.4,202.2 854.7,200.1 856.4,197.5 858.5,195.3 859.8,192.5 861.9,190.2 864.1,188.1 866.6,186.2 867.8,183.2 869.7,180.8 871.0,177.5 872.1,174.0 874.5,171.2 876.1,168.0" fill="none" stroke="#9fc3d8" stroke-width="0.8" stroke-linejoin="round" stroke-linecap="round"></path>
<path d="M841.9,217.2 843.4,220.1 845.1,223.0 845.6,226.4 846.6,229.5 848.3,232.4 848.8,235.7 850.5,238.6 850.9,241.9 852.8,244.8 853.5,248.0 853.3,251.4 853.8,254.6 854.7,257.8 856.0,260.7 858.1,263.3 859.3,266.3 860.0,269.5 862.1,272.0 863.3,275.0 864.7,277.9 866.6,280.5 867.3,283.7 869.0,286.4 871.3,288.8 871.8,292.1" fill="none" stroke="#9fc3d8" stroke-width="0.8" stroke-linejoin="round" stroke-linecap="round"></path>
<path d="M705.0,257.8 708.2,258.5 711.4,258.8 714.6,259.3 717.8,259.4 721.0,259.1 724.3,258.8 727.5,258.6 730.6,259.7 733.9,259.3 737.1,259.3 740.3,259.1 743.5,260.0 746.8,260.2 750.1,260.4 753.5,260.5 756.8,259.3 760.1,259.4 763.4,260.3 766.8,259.3 770.1,260.8 773.4,260.0 776.9,260.5 780.2,259.6 783.5,258.6 786.9,258.9 790.3,259.0 793.6,257.8 797.0,257.8" fill="none" stroke="#9fc3d8" stroke-width="0.8" stroke-linejoin="round" stroke-linecap="round"></path>
<path d="M829.1,232.2 832.3,233.0 835.5,233.5 838.6,234.6 841.8,234.8 845.0,235.2 848.3,235.4 851.4,236.6 854.7,236.4 857.8,236.8 860.8,237.3 864.0,236.8 867.1,236.6 870.1,237.7 873.3,237.3 876.2,239.0 879.5,237.8 882.5,238.6 885.9,238.4 888.8,236.5 892.0,235.3 895.4,235.1 898.5,233.7 902.1,234.1 905.0,232.2" fill="none" stroke="#9fc3d8" stroke-width="0.8" stroke-linejoin="round" stroke-linecap="round"></path>
<path d="M705.0,206.5 707.0,209.2 709.9,211.0 711.7,213.8 714.1,216.0 715.7,219.0 717.8,221.5 721.0,222.3 724.3,222.6 727.4,224.0 730.7,224.3 733.7,225.7 737.1,225.8 740.2,227.2 743.7,227.5 746.5,229.6 750.2,229.2 753.3,230.6 756.3,232.2" fill="none" stroke="#9fc3d8" stroke-width="0.8" stroke-linejoin="round" stroke-linecap="round"></path>
<path d="M743.5,189.4 740.1,189.0 737.7,186.1 734.4,185.6 731.5,183.9 728.6,182.3 724.9,182.8 722.1,180.8 718.9,179.2 715.0,180.1 711.9,177.9 708.6,176.9 705.0,176.6" fill="none" stroke="#9fc3d8" stroke-width="0.8" stroke-linejoin="round" stroke-linecap="round"></path>
<path d="M854.7,257.8 857.9,259.1 860.5,261.6 863.6,262.9 866.9,263.9 870.2,265.1 873.3,266.4 876.1,268.5 879.1,267.0 882.5,267.2 885.7,266.4 888.8,265.0 892.2,265.0 895.2,263.4 898.5,263.1 901.9,263.1 905.0,262.1" fill="none" stroke="#9fc3d8" stroke-width="0.8" stroke-linejoin="round" stroke-linecap="round"></path>
<path d="M743.5,238.6 744.5,241.7 744.2,245.0 745.3,248.1 744.1,251.5 745.8,254.5 745.6,257.8 743.9,261.0 743.1,264.5 742.2,267.9 742.7,271.7 741.4,275.0 740.7,278.3 741.6,281.7 739.5,284.8 739.8,288.2 740.8,291.6 740.2,294.9 739.2,298.1" fill="none" stroke="#9fc3d8" stroke-width="0.8" stroke-linejoin="round" stroke-linecap="round"></path>
<path d="M180.0,60.0 180.3,63.1 179.3,66.1 177.6,68.9 177.4,71.9 177.8,75.1 176.4,77.9 177.5,81.2 175.9,84.0 175.7,87.0 175.0,90.0 177.1,92.3 177.0,95.8 178.8,98.3 179.6,101.4 181.6,103.8 183.0,106.5 185.2,108.8 186.0,111.8 186.6,114.9 188.5,117.3 190.0,120.0 191.4,122.7 193.4,125.0 195.2,127.3 197.5,129.5 198.8,132.2 200.5,134.7 202.3,137.0 204.1,139.5 204.6,142.8 205.8,145.5 208.0,147.7 210.0,150.0 211.8,152.6 214.8,153.8 216.2,156.8 219.1,158.3 220.6,161.1 223.7,162.3 225.8,164.5 227.7,166.9 230,169" fill="none" stroke="#9fc3d8" stroke-width="0.8" stroke-linejoin="round" stroke-linecap="round"></path>
<path d="M260.0,100.0 262.8,101.4 265.3,103.4 267.2,106.0 269.7,108.0 271.9,110.1 274.8,111.5 277.7,112.9 280.0,115.0 282.4,117.0 284.9,118.9 287.0,121.3 289.9,122.6 291.9,125.1 295.0,126.2 297.6,128.0 300.0,130.0 303.1,131.1 305.2,133.5 307.5,135.6 310.6,136.7 312.6,139.3 315.5,140.6 317.8,142.8 319.5,145.6 322.0,147.5 325.5,148.1 327.4,150.8 330.0,152.5 333.0,153.7 335.2,155.9 337.5,158.2 340,160" fill="none" stroke="#9fc3d8" stroke-width="0.8" stroke-linejoin="round" stroke-linecap="round"></path>
<path d="M255.0,60.0 256.5,62.7 257.6,65.5 259.9,67.8 260.3,71.0 261.6,73.7 263.7,76.1 264.4,79.2 265.1,82.2 266.6,84.9 268.4,87.4 270.0,90.0 269.5,93.0 268.5,95.9 268.6,99.0 267.6,101.9 267.8,105.0 266.9,108.0 266.0,110.9 265.8,114.0 265.3,117.0 265.0,120.0 267.1,122.2 269.1,124.4 270.5,127.1 272.8,129.2 274.7,131.5 276.7,133.7 278.8,135.9 280.2,138.6 281.7,141.3 284.7,142.7 285.9,145.6 288.0,147.7 290.0,150.0 292.7,151.6 295.6,153.0 298.7,153.9 301.8,154.5 304.4,156.5 307.1,158.2 309.9,159.7 312.5,161.6 315.6,162.5 318.4,163.8 321.6,164.7 324.0,166.8 327.5,167.0 330,169" fill="none" stroke="#9fc3d8" stroke-width="0.8" stroke-linejoin="round" stroke-linecap="round"></path>
<path d="M420.0,120.0 422.6,121.8 425.7,122.1 428.6,123.1 431.3,124.6 434.3,125.4 436.8,127.4 440.3,126.8 443.2,127.8 445.6,129.8 448.8,130.2 451.6,131.3 453.9,133.8 457.1,134.0 460.0,135.0 463.2,135.4 466.2,136.3 469.4,136.8 472.4,137.6 475.6,138.1 478.2,140.5 481.4,140.8 484.7,140.9 487.9,141.2 490.5,143.6 493.7,144.2 497.1,143.4 500.0,145.0 503.0,146.0 506.1,145.6 509.2,146.7 512.3,145.8 515.4,146.0 518.5,145.4 521.5,146.8 524.7,146.3 527.6,147.8 530.8,146.8 533.8,148.3 536.9,147.4 540.0,148.0 543.0,148.8 546.1,148.7 549.2,149.3 552.3,148.8 555.4,148.5 558.5,148.4 561.6,148.5 564.7,148.4 567.7,149.0 570.8,149.2 573.8,150.3 577.0,148.9 580.0,150.0 583.0,150.0 586.0,150.0 589.0,149.3 592.0,150.4 595.0,149.4 598.0,150.5 601.0,149.3 604.0,150.8 607.0,149.6 610.0,149.2 613.0,149.3 616.0,149.4 619.0,149.3 622.0,149.6 625.0,150.9 628.0,149.7 631.0,149.8 634.0,150.5 637.0,149.1 640.0,150.0 643.1,149.7 645.9,151.7 649.1,151.2 652.1,151.4 655.1,151.9 657.9,153.5 660.8,154.4 664.0,153.8 666.9,154.9 670.0,154.9 673.1,154.9 676.1,155.6 679.1,156.2 682.1,156.5 684.9,158.1 688.1,157.2 691.0,158.3 693.9,159.5 697.2,158.6 700,160" fill="none" stroke="#9fc3d8" stroke-width="0.8" stroke-linejoin="round" stroke-linecap="round"></path>
<path d="M560.0,95.0 560.9,98.3 563.1,100.7 564.7,103.5 567.2,105.8 568.8,108.6 569.4,112.0 570.9,114.9 574.2,116.7 575.0,120.0 574.9,123.1 576.6,125.9 577.3,128.9 576.8,132.0 578.3,134.9 577.3,138.1 577.8,141.1 579.4,143.9 580.2,146.9 580,150" fill="none" stroke="#9fc3d8" stroke-width="0.8" stroke-linejoin="round" stroke-linecap="round"></path>
<path d="M680.0,60.0 680.7,63.1 681.1,66.3 683.2,69.0 682.7,72.4 684.6,75.2 684.9,78.4 686.0,81.4 687.0,84.4 686.9,87.7 688.1,90.7 687.7,94.0 688.4,97.1 690.0,100.0 690.6,103.1 692.0,106.0 692.7,109.1 694.3,111.9 695.1,115.0 695.9,118.0 697.1,121.0 698.1,124.0 698.3,127.2 700.0,130.0 698.3,132.8 698.0,135.9 697.0,138.8 697.3,142.1 697.0,145.2 695.9,148.1 694.6,151.0 693.3,153.9 692.6,156.9 691.5,159.8 691.0,162.9 691.2,166.1 690,169" fill="none" stroke="#9fc3d8" stroke-width="0.8" stroke-linejoin="round" stroke-linecap="round"></path>
<path d="M720.0,48.0 722.6,50.2 723.8,53.5 725.9,56.1 726.9,59.4 728.7,62.2 731.2,64.5 732.7,67.6 735.0,70.0 735.6,73.1 737.0,76.0 738.1,79.0 738.1,82.3 739.4,85.2 740.9,88.0 741.1,91.3 743.7,93.8 743.5,97.2 745.0,100.0 745.2,103.0 746.0,106.0 746.6,108.9 746.0,112.0 745.8,115.1 747.4,117.9 746.3,121.1 746.4,124.1 748.3,126.9 748,130" fill="none" stroke="#9fc3d8" stroke-width="0.8" stroke-linejoin="round" stroke-linecap="round"></path>
<path d="M800.0,48.0 800.8,50.9 801.8,53.8 803.0,56.6 804.4,59.4 805.0,62.4 804.6,65.7 805.7,68.6 806.4,71.5 808.2,74.2 809.1,77.1 810.0,80.0 812.4,82.0 813.5,84.9 814.9,87.6 815.8,90.5 819.1,92.0 819.7,95.2 822.4,97.0 822.5,100.5 825.5,102.2 826.3,105.2 828.1,107.6 830.0,110.0 832.6,111.7 834.3,114.2 836.5,116.3 839.0,118.1 840.9,120.6 843.5,122.2 844.7,125.3 846.5,127.8 849.2,129.3 851.6,131.3 853.6,133.6 856.2,135.2 857.5,138.2 860.0,140.0 862.7,141.8 866.1,142.1 868.7,144.1 871.8,145.0 874.1,147.5 877.6,147.7 879.7,150.7 883.2,150.7 885.4,153.5 888.8,153.7 891.4,155.8 894.1,157.5 896.8,159.4 900.0,160.0 902.9,161.5 906.3,160.9 909.1,162.7 912.3,162.9 915.5,163.2 918.5,164.5 921.3,166.2 924.8,165.2 927.6,167.3 930.7,167.8 933.7,169.2 936.9,169.2 940,170" fill="none" stroke="#9fc3d8" stroke-width="0.8" stroke-linejoin="round" stroke-linecap="round"></path>
<path d="M880.0,60.0 882.1,62.2 882.7,65.4 885.7,67.1 886.4,70.2 888.7,72.3 890.7,74.5 892.2,77.1 892.8,80.4 895.6,82.1 896.0,85.5 898.9,87.1 900.0,90.0 901.5,92.7 904.9,93.7 906.2,96.7 908.5,98.6 910.6,100.9 912.3,103.5 915.4,104.6 916.4,107.8 919.2,109.4 921.0,111.9 923.9,113.2 925.0,116.4 927.5,118.2 930.0,120.0 932.5,121.6 935.3,122.9 937.1,125.6 939.9,126.8 942.0,129.1 944.6,130.6 947.2,132.1 949.8,133.7 952.9,134.4 954.6,137.2 957.3,138.7 960,140" fill="none" stroke="#9fc3d8" stroke-width="0.8" stroke-linejoin="round" stroke-linecap="round"></path>
<path d="M705.0,380.0 707.4,377.9 710.2,376.6 713.0,375.3 715.9,374.2 719.1,373.8 721.9,372.5 724.6,371.0 727.1,369.1 730.0,368.0 733.3,367.8 735.8,365.3 738.8,364.5 742.0,363.9 744.8,362.5 748.1,362.4 751.2,361.6 754.2,360.5 756.9,358.7 760.0,358.0 763.1,356.9 765.9,355.3 769.0,354.5 772.0,353.3 774.7,351.4 778.3,351.4 781.2,350.2 784.2,348.9 786.7,346.4 790.0,346.0 793.0,344.9 796.3,345.3 799.4,344.8 802.4,343.8 805.6,343.8 808.4,342.2 811.4,341.2 814.6,341.0 817.6,340.1 820.7,339.6 824.0,339.8 826.9,338.3 830.0,338.0 833.2,337.6 836.2,336.6 839.0,334.8 842.3,334.9 845.6,334.9 848.5,333.7 851.7,333.3 854.7,332.1 857.9,332.0 860.5,329.4 863.8,329.4 866.8,328.2 870,328" fill="none" stroke="#9fc3d8" stroke-width="0.8" stroke-linejoin="round" stroke-linecap="round"></path>
<path d="M600.0,520.0 602.2,522.1 605.2,523.0 607.3,525.3 609.8,526.9 613.0,527.5 614.9,530.2 617.7,531.4 620.3,532.9 622.3,535.2 624.9,536.9 627.8,537.9 630.0,540.0 632.9,540.9 636.1,540.2 639.1,540.6 641.9,542.8 644.9,543.3 647.9,543.9 650.8,544.5 653.9,544.5 657.0,544.6 660,545" fill="none" stroke="#9fc3d8" stroke-width="0.8" stroke-linejoin="round" stroke-linecap="round"></path>
<path d="M500.0,540.0 502.8,541.5 505.7,542.9 508.2,545.1 511.0,546.5 514.3,547.0 517.4,548.0 520.0,550.1 522.9,551.3 525.4,553.4 528.2,555.0 531.3,555.9 534.7,556.4 537.1,558.6 540.0,560.0 543.3,560.0 546.1,561.6 549.1,562.9 552.2,563.4 555.4,563.8 558.6,564.0 561.3,566.2 564.4,566.9 567.7,566.9 571.0,566.8 573.8,568.8 577.0,569.0 580,570" fill="none" stroke="#9fc3d8" stroke-width="0.8" stroke-linejoin="round" stroke-linecap="round"></path>
<path d="M560.0,500.0 562.8,501.2 565.6,502.5 568.4,503.7 571.2,504.8 573.5,507.1 576.3,508.2 579.2,509.4 581.6,511.4 584.5,512.3 587.6,513.0 590.0,515.0 593.1,515.6 596.0,517.1 598.9,518.3 601.9,519.3 604.8,520.5 608.1,520.7 610.8,522.5 613.9,523.2 617.2,523.5 620.0,525.0 622.9,523.8 626.0,524.2 629.1,524.2 632.1,523.9 635.1,523.1 638.1,522.6 641.0,521.7 643.9,520.5 646.9,520.1 650.0,520.0 653.2,519.7 655.9,517.6 659.0,517.0 662.0,516.1 664.7,514.1 667.8,513.3 670.8,512.4 674.2,512.6 677.2,511.5 680,510" fill="none" stroke="#9fc3d8" stroke-width="0.8" stroke-linejoin="round" stroke-linecap="round"></path>
<path d="M440.0,520.0 443.0,521.0 445.4,522.8 447.0,525.8 450.4,526.1 452.2,528.8 454.9,530.1 457.1,532.3 459.7,533.7 462.9,534.3 464.7,537.1 467.3,538.7 470.0,540.0 473.0,540.9 474.5,544.1 477.7,544.7 480.0,546.6 482.5,548.4 484.9,550.1 487.4,551.8 490.5,552.6 492.1,555.6 495.0,556.7 497.9,557.7 500,560" fill="none" stroke="#9fc3d8" stroke-width="0.8" stroke-linejoin="round" stroke-linecap="round"></path>
<path d="M280.0,534.0 282.5,536.0 285.4,537.5 287.6,539.9 289.7,542.3 292.2,544.4 295.4,545.5 297.8,547.7 300.0,550.0 301.6,552.9 304.3,554.6 307.1,556.2 308.7,559.0 311.5,560.8 313.9,562.7 315.3,565.8 318.3,567.2 320,570" fill="none" stroke="#9fc3d8" stroke-width="0.8" stroke-linejoin="round" stroke-linecap="round"></path>
<text x="125.5" y="64.3" font-size="6.5" fill="#5d5d5d" text-anchor="middle" font-weight="normal" letter-spacing="0" stroke="#fff" stroke-width="1.8" stroke-opacity="0.8" paint-order="stroke">Puerto</text>
<text x="125.5" y="71.3" font-size="6.5" fill="#5d5d5d" text-anchor="middle" font-weight="normal" letter-spacing="0" stroke="#fff" stroke-width="1.8" stroke-opacity="0.8" paint-order="stroke">Maldonado</text>
<circle cx="125" cy="57" r="1.5" fill="#fff" stroke="#6d6d6d" stroke-width="0.8"></circle>
<text x="149" y="98.7" font-size="7.5" fill="#3f8f67" text-anchor="middle" font-weight="normal" letter-spacing="0" stroke="#fff" stroke-width="1.8" stroke-opacity="0.8" paint-order="stroke">Parque</text>
<text x="149" y="106.7" font-size="7.5" fill="#3f8f67" text-anchor="middle" font-weight="normal" letter-spacing="0" stroke="#fff" stroke-width="1.8" stroke-opacity="0.8" paint-order="stroke">Nacional</text>
<text x="149" y="115.7" font-size="7.5" fill="#3f8f67" text-anchor="middle" font-weight="normal" letter-spacing="0" stroke="#fff" stroke-width="1.8" stroke-opacity="0.8" paint-order="stroke">Madidi</text>
<text x="244" y="117.3" font-size="6.5" fill="#5d5d5d" text-anchor="middle" font-weight="normal" letter-spacing="0" stroke="#fff" stroke-width="1.8" stroke-opacity="0.8" paint-order="stroke">Trinidad</text>
<circle cx="244" cy="121" r="1.5" fill="#fff" stroke="#6d6d6d" stroke-width="0.8"></circle>
<text x="99.6" y="137.3" font-size="6.5" fill="#5d5d5d" text-anchor="middle" font-weight="normal" letter-spacing="0" stroke="#fff" stroke-width="1.8" stroke-opacity="0.8" paint-order="stroke">Juliaca</text>
<circle cx="99" cy="141" r="1.5" fill="#fff" stroke="#6d6d6d" stroke-width="0.8"></circle>
<text x="102.7" y="158.3" font-size="6.5" fill="#5d5d5d" text-anchor="middle" font-weight="normal" letter-spacing="0" stroke="#fff" stroke-width="1.8" stroke-opacity="0.8" paint-order="stroke">Puno</text>
<circle cx="102" cy="150" r="1.5" fill="#fff" stroke="#6d6d6d" stroke-width="0.8"></circle>
<text x="155" y="165.2" font-size="9" fill="#333" text-anchor="middle" font-weight="bold" letter-spacing="0" stroke="#fff" stroke-width="1.8" stroke-opacity="0.8" paint-order="stroke">La Paz</text>
<text x="54" y="164.3" font-size="6.5" fill="#5d5d5d" text-anchor="start" font-weight="normal" letter-spacing="0" stroke="#fff" stroke-width="1.8" stroke-opacity="0.8" paint-order="stroke">equipa</text>
<text x="212" y="163.7" font-size="7.5" fill="#3f8f67" text-anchor="middle" font-weight="normal" letter-spacing="0" stroke="#fff" stroke-width="1.8" stroke-opacity="0.8" paint-order="stroke">Parque</text>
<text x="212" y="171.7" font-size="7.5" fill="#3f8f67" text-anchor="middle" font-weight="normal" letter-spacing="0" stroke="#fff" stroke-width="1.8" stroke-opacity="0.8" paint-order="stroke">Nacional</text>
<text x="357" y="99.7" font-size="7.5" fill="#3f8f67" text-anchor="middle" font-weight="normal" letter-spacing="0" stroke="#fff" stroke-width="1.8" stroke-opacity="0.8" paint-order="stroke">Parque</text>
<text x="357" y="107.7" font-size="7.5" fill="#3f8f67" text-anchor="middle" font-weight="normal" letter-spacing="0" stroke="#fff" stroke-width="1.8" stroke-opacity="0.8" paint-order="stroke">Nacional</text>
<text x="357" y="115.7" font-size="7.5" fill="#3f8f67" text-anchor="middle" font-weight="normal" letter-spacing="0" stroke="#fff" stroke-width="1.8" stroke-opacity="0.8" paint-order="stroke">Noel Kempff</text>
<text x="357" y="124.7" font-size="7.5" fill="#3f8f67" text-anchor="middle" font-weight="normal" letter-spacing="0" stroke="#fff" stroke-width="1.8" stroke-opacity="0.8" paint-order="stroke">Mercado</text>
<text x="394" y="89.7" font-size="6" fill="#666" text-anchor="middle" font-weight="normal" letter-spacing="0.7" stroke="#fff" stroke-width="1.8" stroke-opacity="0.8" paint-order="stroke">NAMBIKWARA</text>
<text x="377.5" y="57.3" font-size="6.5" fill="#5d5d5d" text-anchor="middle" font-weight="normal" letter-spacing="0" stroke="#fff" stroke-width="1.8" stroke-opacity="0.8" paint-order="stroke">Vilhena</text>
<circle cx="377.5" cy="61" r="1.5" fill="#fff" stroke="#6d6d6d" stroke-width="0.8"></circle>
<text x="353.6" y="156.1" font-size="6.5" fill="#5d5d5d" text-anchor="middle" font-weight="normal" letter-spacing="0" stroke="#fff" stroke-width="1.8" stroke-opacity="0.8" paint-order="stroke">San Ignacio</text>
<text x="353.6" y="162.3" font-size="6.5" fill="#5d5d5d" text-anchor="middle" font-weight="normal" letter-spacing="0" stroke="#fff" stroke-width="1.8" stroke-opacity="0.8" paint-order="stroke">de Velasco</text>
<text x="399" y="122.9" font-size="6.5" fill="#5d5d5d" text-anchor="middle" font-weight="normal" letter-spacing="0" stroke="#fff" stroke-width="1.8" stroke-opacity="0.8" paint-order="stroke">Pontes e</text>
<text x="399" y="129.3" font-size="6.5" fill="#5d5d5d" text-anchor="middle" font-weight="normal" letter-spacing="0" stroke="#fff" stroke-width="1.8" stroke-opacity="0.8" paint-order="stroke">Lacerda</text>
<circle cx="399" cy="133" r="1.5" fill="#fff" stroke="#6d6d6d" stroke-width="0.8"></circle>
<text x="440.5" y="78.3" font-size="6.5" fill="#5d5d5d" text-anchor="middle" font-weight="normal" letter-spacing="0" stroke="#fff" stroke-width="1.8" stroke-opacity="0.8" paint-order="stroke">Campo Novo</text>
<text x="440.5" y="85.3" font-size="6.5" fill="#5d5d5d" text-anchor="middle" font-weight="normal" letter-spacing="0" stroke="#fff" stroke-width="1.8" stroke-opacity="0.8" paint-order="stroke">do Parecis</text>
<text x="498" y="66.9" font-size="8" fill="#5a5a5a" text-anchor="middle" letter-spacing="0.7" stroke="#fff" stroke-width="1.8" stroke-opacity="0.8" paint-order="stroke">MATO GROSSO</text>
<text x="498" y="66.9" font-size="8" fill="#5a5a5a" text-anchor="middle" letter-spacing="0.7" stroke="#5a5a5a" stroke-width="0.15">MATO GROSSO</text>
<text x="499.5" y="52.3" font-size="6.5" fill="#5d5d5d" text-anchor="middle" font-weight="normal" letter-spacing="0" stroke="#fff" stroke-width="1.8" stroke-opacity="0.8" paint-order="stroke">Sorriso</text>
<text x="495" y="79.8" font-size="6.5" fill="#5d5d5d" text-anchor="middle" font-weight="normal" letter-spacing="0" stroke="#fff" stroke-width="1.8" stroke-opacity="0.8" paint-order="stroke">Lucas do</text>
<text x="495" y="86.3" font-size="6.5" fill="#5d5d5d" text-anchor="middle" font-weight="normal" letter-spacing="0" stroke="#fff" stroke-width="1.8" stroke-opacity="0.8" paint-order="stroke">Rio Verde</text>
<text x="450.8" y="105.3" font-size="6.5" fill="#5d5d5d" text-anchor="middle" font-weight="normal" letter-spacing="0" stroke="#fff" stroke-width="1.8" stroke-opacity="0.8" paint-order="stroke">Tangará</text>
<text x="450.8" y="111.3" font-size="6.5" fill="#5d5d5d" text-anchor="middle" font-weight="normal" letter-spacing="0" stroke="#fff" stroke-width="1.8" stroke-opacity="0.8" paint-order="stroke">da Serra</text>
<circle cx="451" cy="116" r="1.5" fill="#fff" stroke="#6d6d6d" stroke-width="0.8"></circle>
<text x="490" y="100.1" font-size="6.5" fill="#5d5d5d" text-anchor="middle" font-weight="normal" letter-spacing="0" stroke="#fff" stroke-width="1.8" stroke-opacity="0.8" paint-order="stroke">Nova Mutum</text>
<text x="483" y="115.6" font-size="6.5" fill="#5d5d5d" text-anchor="middle" font-weight="normal" letter-spacing="0" stroke="#fff" stroke-width="1.8" stroke-opacity="0.8" paint-order="stroke">Nobres</text>
<text x="489.8" y="139.5" font-size="7" fill="#333" text-anchor="middle" font-weight="bold" letter-spacing="0" stroke="#fff" stroke-width="1.8" stroke-opacity="0.8" paint-order="stroke">Cuiabá</text>
<circle cx="490" cy="143" r="1.5" fill="#fff" stroke="#6d6d6d" stroke-width="0.8"></circle>
<text x="564" y="67.9" font-size="6" fill="#777" text-anchor="middle" font-weight="normal" letter-spacing="0.6" stroke="#fff" stroke-width="1.8" stroke-opacity="0.8" paint-order="stroke">PARQUE</text>
<text x="564" y="74.2" font-size="6" fill="#777" text-anchor="middle" font-weight="normal" letter-spacing="0.6" stroke="#fff" stroke-width="1.8" stroke-opacity="0.8" paint-order="stroke">DO XINGU</text>
<text x="540" y="132.3" font-size="6.5" fill="#5d5d5d" text-anchor="middle" font-weight="normal" letter-spacing="0" stroke="#fff" stroke-width="1.8" stroke-opacity="0.8" paint-order="stroke">Primavera</text>
<text x="540" y="138.3" font-size="6.5" fill="#5d5d5d" text-anchor="middle" font-weight="normal" letter-spacing="0" stroke="#fff" stroke-width="1.8" stroke-opacity="0.8" paint-order="stroke">do Leste</text>
<circle cx="540" cy="142" r="1.5" fill="#fff" stroke="#6d6d6d" stroke-width="0.8"></circle>
<text x="596" y="142.3" font-size="6.5" fill="#5d5d5d" text-anchor="middle" font-weight="normal" letter-spacing="0" stroke="#fff" stroke-width="1.8" stroke-opacity="0.8" paint-order="stroke">Barra do</text>
<text x="596" y="148.3" font-size="6.5" fill="#5d5d5d" text-anchor="middle" font-weight="normal" letter-spacing="0" stroke="#fff" stroke-width="1.8" stroke-opacity="0.8" paint-order="stroke">Garças</text>
<text x="445.6" y="152.9" font-size="6.5" fill="#5d5d5d" text-anchor="middle" font-weight="normal" letter-spacing="0" stroke="#fff" stroke-width="1.8" stroke-opacity="0.8" paint-order="stroke">Cáceres</text>
<circle cx="446" cy="156" r="1.5" fill="#fff" stroke="#6d6d6d" stroke-width="0.8"></circle>
<text x="474.6" y="160.3" font-size="6.5" fill="#5d5d5d" text-anchor="middle" font-weight="normal" letter-spacing="0" stroke="#fff" stroke-width="1.8" stroke-opacity="0.8" paint-order="stroke">Poconé</text>
<text x="529.5" y="164.8" font-size="6.5" fill="#5d5d5d" text-anchor="middle" font-weight="normal" letter-spacing="0" stroke="#fff" stroke-width="1.8" stroke-opacity="0.8" paint-order="stroke">Rondonópolis</text>
<circle cx="530" cy="168" r="1.5" fill="#fff" stroke="#6d6d6d" stroke-width="0.8"></circle>
<text x="682" y="79.0" font-size="6.5" fill="#5d5d5d" text-anchor="middle" font-weight="normal" letter-spacing="0" stroke="#fff" stroke-width="1.8" stroke-opacity="0.8" paint-order="stroke">Porangatu</text>
<circle cx="682" cy="82" r="1.5" fill="#fff" stroke="#6d6d6d" stroke-width="0.8"></circle>
<text x="665" y="137.4" font-size="7.5" fill="#5a5a5a" text-anchor="middle" letter-spacing="0.8" stroke="#fff" stroke-width="1.8" stroke-opacity="0.8" paint-order="stroke">GOIÁS</text>
<text x="665" y="137.4" font-size="7.5" fill="#5a5a5a" text-anchor="middle" letter-spacing="0.8" stroke="#5a5a5a" stroke-width="0.15">GOIÁS</text>
<text x="717" y="144.8" font-size="8.5" fill="#333" text-anchor="middle" font-weight="bold" letter-spacing="0" stroke="#fff" stroke-width="1.8" stroke-opacity="0.8" paint-order="stroke">Brasília</text>
<text x="716" y="158.3" font-size="6.5" fill="#5d5d5d" text-anchor="middle" font-weight="normal" letter-spacing="0" stroke="#fff" stroke-width="1.8" stroke-opacity="0.8" paint-order="stroke">Luziânia</text>
<circle cx="716" cy="162" r="1.5" fill="#fff" stroke="#6d6d6d" stroke-width="0.8"></circle>
<text x="745" y="162.3" font-size="6.5" fill="#5d5d5d" text-anchor="middle" font-weight="normal" letter-spacing="0" stroke="#fff" stroke-width="1.8" stroke-opacity="0.8" paint-order="stroke">Unaí</text>
<circle cx="745" cy="166" r="1.5" fill="#fff" stroke="#6d6d6d" stroke-width="0.8"></circle>
<text x="842" y="66.7" font-size="6.5" fill="#5d5d5d" text-anchor="middle" font-weight="normal" letter-spacing="0" stroke="#fff" stroke-width="1.8" stroke-opacity="0.8" paint-order="stroke">Bom Jesus</text>
<text x="842" y="73.3" font-size="6.5" fill="#5d5d5d" text-anchor="middle" font-weight="normal" letter-spacing="0" stroke="#fff" stroke-width="1.8" stroke-opacity="0.8" paint-order="stroke">da Lapa</text>
<circle cx="842" cy="76" r="1.5" fill="#fff" stroke="#6d6d6d" stroke-width="0.8"></circle>
<text x="815" y="137.1" font-size="6.5" fill="#5d5d5d" text-anchor="middle" font-weight="normal" letter-spacing="0" stroke="#fff" stroke-width="1.8" stroke-opacity="0.8" paint-order="stroke">Januária</text>
<circle cx="815" cy="140" r="1.5" fill="#fff" stroke="#6d6d6d" stroke-width="0.8"></circle>
<text x="845" y="145.9" font-size="6.5" fill="#5d5d5d" text-anchor="middle" font-weight="normal" letter-spacing="0" stroke="#fff" stroke-width="1.8" stroke-opacity="0.8" paint-order="stroke">Janaúba</text>
<circle cx="845" cy="149" r="1.5" fill="#fff" stroke="#6d6d6d" stroke-width="0.8"></circle>
<text x="978" y="64.5" font-size="8.5" fill="#333" text-anchor="middle" font-weight="bold" letter-spacing="0" stroke="#fff" stroke-width="1.8" stroke-opacity="0.8" paint-order="stroke">Salvador</text>
<circle cx="978" cy="68" r="1.5" fill="#fff" stroke="#6d6d6d" stroke-width="0.8"></circle>
<text x="934" y="89.9" font-size="6.5" fill="#5d5d5d" text-anchor="middle" font-weight="normal" letter-spacing="0" stroke="#fff" stroke-width="1.8" stroke-opacity="0.8" paint-order="stroke">Jequié</text>
<circle cx="934" cy="93.7" r="1.5" fill="#fff" stroke="#6d6d6d" stroke-width="0.8"></circle>
<text x="911.5" y="111.9" font-size="6.5" fill="#5d5d5d" text-anchor="middle" font-weight="normal" letter-spacing="0" stroke="#fff" stroke-width="1.8" stroke-opacity="0.8" paint-order="stroke">Vitória da</text>
<text x="911.5" y="119.1" font-size="6.5" fill="#5d5d5d" text-anchor="middle" font-weight="normal" letter-spacing="0" stroke="#fff" stroke-width="1.8" stroke-opacity="0.8" paint-order="stroke">Conquista</text>
<circle cx="912" cy="122" r="1.5" fill="#fff" stroke="#6d6d6d" stroke-width="0.8"></circle>
<text x="867" y="96.3" font-size="6.5" fill="#5d5d5d" text-anchor="middle" font-weight="normal" letter-spacing="0" stroke="#fff" stroke-width="1.8" stroke-opacity="0.8" paint-order="stroke">Caetité</text>
<circle cx="867" cy="99" r="1.5" fill="#fff" stroke="#6d6d6d" stroke-width="0.8"></circle>
<text x="942.3" y="122.3" font-size="6.5" fill="#5d5d5d" text-anchor="middle" font-weight="normal" letter-spacing="0" stroke="#fff" stroke-width="1.8" stroke-opacity="0.8" paint-order="stroke">Itabuna</text>
<circle cx="956.4" cy="120" r="1.5" fill="#fff" stroke="#6d6d6d" stroke-width="0.8"></circle>
<text x="966" y="122.3" font-size="6.5" fill="#5d5d5d" text-anchor="start" font-weight="normal" letter-spacing="0" stroke="#fff" stroke-width="1.8" stroke-opacity="0.8" paint-order="stroke">Ilhéus</text>
<circle cx="962.8" cy="120" r="1.5" fill="#fff" stroke="#6d6d6d" stroke-width="0.8"></circle>
<text x="962.8" y="164.3" font-size="6.5" fill="#5d5d5d" text-anchor="middle" font-weight="normal" letter-spacing="0" stroke="#fff" stroke-width="1.8" stroke-opacity="0.8" paint-order="stroke">Porto Seguro</text>
<circle cx="962.8" cy="168" r="1.5" fill="#fff" stroke="#6d6d6d" stroke-width="0.8"></circle>
<text x="943" y="189.1" font-size="6.5" fill="#5d5d5d" text-anchor="middle" font-weight="normal" letter-spacing="0" stroke="#fff" stroke-width="1.8" stroke-opacity="0.8" paint-order="stroke">Teixeira</text>
<text x="943" y="196.3" font-size="6.5" fill="#5d5d5d" text-anchor="middle" font-weight="normal" letter-spacing="0" stroke="#fff" stroke-width="1.8" stroke-opacity="0.8" paint-order="stroke">de Freitas</text>
<circle cx="943" cy="199.5" r="1.5" fill="#fff" stroke="#6d6d6d" stroke-width="0.8"></circle>
<text x="895" y="51.4" font-size="7.5" fill="#5a5a5a" text-anchor="middle" letter-spacing="0.8" stroke="#fff" stroke-width="1.8" stroke-opacity="0.8" paint-order="stroke">BAHIA</text>
<text x="895" y="51.4" font-size="7.5" fill="#5a5a5a" text-anchor="middle" letter-spacing="0.8" stroke="#5a5a5a" stroke-width="0.15">BAHIA</text>
<text x="828.6" y="172.5" font-size="7" fill="#444" text-anchor="middle" font-weight="normal" letter-spacing="0" stroke="#fff" stroke-width="1.8" stroke-opacity="0.8" paint-order="stroke">Montes Claros</text>
<circle cx="829" cy="175" r="1.5" fill="#fff" stroke="#6d6d6d" stroke-width="0.8"></circle>
<text x="810" y="201.4" font-size="8" fill="#5a5a5a" text-anchor="middle" letter-spacing="1" stroke="#fff" stroke-width="1.8" stroke-opacity="0.8" paint-order="stroke">MINAS GERAIS</text>
<text x="810" y="201.4" font-size="8" fill="#5a5a5a" text-anchor="middle" letter-spacing="1" stroke="#5a5a5a" stroke-width="0.15">MINAS GERAIS</text>
<text x="895" y="206.1" font-size="6.5" fill="#5d5d5d" text-anchor="middle" font-weight="normal" letter-spacing="0" stroke="#fff" stroke-width="1.8" stroke-opacity="0.8" paint-order="stroke">Teófilo Otoni</text>
<circle cx="895" cy="209" r="1.5" fill="#fff" stroke="#6d6d6d" stroke-width="0.8"></circle>
<text x="882" y="228.3" font-size="6.5" fill="#5d5d5d" text-anchor="middle" font-weight="normal" letter-spacing="0" stroke="#fff" stroke-width="1.8" stroke-opacity="0.8" paint-order="stroke">Gov.</text>
<text x="882" y="234.7" font-size="6.5" fill="#5d5d5d" text-anchor="middle" font-weight="normal" letter-spacing="0" stroke="#fff" stroke-width="1.8" stroke-opacity="0.8" paint-order="stroke">Valadares</text>
<circle cx="882" cy="238" r="1.5" fill="#fff" stroke="#6d6d6d" stroke-width="0.8"></circle>
<text x="934" y="246.3" font-size="7.5" fill="#5a5a5a" text-anchor="middle" letter-spacing="0.9" stroke="#fff" stroke-width="1.8" stroke-opacity="0.8" paint-order="stroke">ESPÍRITO</text>
<text x="934" y="246.3" font-size="7.5" fill="#5a5a5a" text-anchor="middle" letter-spacing="0.9" stroke="#5a5a5a" stroke-width="0.15">ESPÍRITO</text>
<text x="934" y="254.7" font-size="7.5" fill="#5a5a5a" text-anchor="middle" letter-spacing="0.9" stroke="#fff" stroke-width="1.8" stroke-opacity="0.8" paint-order="stroke">SANTO</text>
<text x="934" y="254.7" font-size="7.5" fill="#5a5a5a" text-anchor="middle" letter-spacing="0.9" stroke="#5a5a5a" stroke-width="0.15">SANTO</text>
<text x="827" y="265.2" font-size="9" fill="#444" text-anchor="middle" font-weight="normal" letter-spacing="0" stroke="#fff" stroke-width="1.8" stroke-opacity="0.8" paint-order="stroke">Belo Horizonte</text>
<text x="819" y="277.8" font-size="6.5" fill="#5d5d5d" text-anchor="middle" font-weight="normal" letter-spacing="0" stroke="#fff" stroke-width="1.8" stroke-opacity="0.8" paint-order="stroke">Betim</text>
<circle cx="820" cy="270" r="1.5" fill="#fff" stroke="#6d6d6d" stroke-width="0.8"></circle>
<circle cx="826" cy="268" r="1.5" fill="#fff" stroke="#6d6d6d" stroke-width="0.8"></circle>
<text x="927" y="277.3" font-size="6.5" fill="#5d5d5d" text-anchor="middle" font-weight="normal" letter-spacing="0" stroke="#fff" stroke-width="1.8" stroke-opacity="0.8" paint-order="stroke">Vitória</text>
<circle cx="927" cy="281" r="1.5" fill="#fff" stroke="#6d6d6d" stroke-width="0.8"></circle>
<text x="922.7" y="299.8" font-size="6.5" fill="#5d5d5d" text-anchor="middle" font-weight="normal" letter-spacing="0" stroke="#fff" stroke-width="1.8" stroke-opacity="0.8" paint-order="stroke">Guarapari</text>
<circle cx="922.7" cy="291.6" r="1.5" fill="#fff" stroke="#6d6d6d" stroke-width="0.8"></circle>
<text x="843" y="321.0" font-size="6.5" fill="#5d5d5d" text-anchor="middle" font-weight="normal" letter-spacing="0" stroke="#fff" stroke-width="1.8" stroke-opacity="0.8" paint-order="stroke">Juiz de Fora</text>
<circle cx="843" cy="324" r="1.5" fill="#fff" stroke="#6d6d6d" stroke-width="0.8"></circle>
<text x="891" y="328.7" font-size="7.5" fill="#5a5a5a" text-anchor="middle" letter-spacing="0.9" stroke="#fff" stroke-width="1.8" stroke-opacity="0.8" paint-order="stroke">RIO DE</text>
<text x="891" y="328.7" font-size="7.5" fill="#5a5a5a" text-anchor="middle" letter-spacing="0.9" stroke="#5a5a5a" stroke-width="0.15">RIO DE</text>
<text x="891" y="337.2" font-size="7.5" fill="#5a5a5a" text-anchor="middle" letter-spacing="0.9" stroke="#fff" stroke-width="1.8" stroke-opacity="0.8" paint-order="stroke">JANEIRO</text>
<text x="891" y="337.2" font-size="7.5" fill="#5a5a5a" text-anchor="middle" letter-spacing="0.9" stroke="#5a5a5a" stroke-width="0.15">JANEIRO</text>
<text x="848.4" y="354.5" font-size="9" fill="#444" text-anchor="middle" font-weight="normal" letter-spacing="0" stroke="#fff" stroke-width="1.8" stroke-opacity="0.8" paint-order="stroke">Rio de Janeiro</text>
<circle cx="848.4" cy="358.3" r="1.5" fill="#fff" stroke="#6d6d6d" stroke-width="0.8"></circle>
<text x="740.5" y="355.0" font-size="8.5" fill="#444" text-anchor="middle" font-weight="normal" letter-spacing="0" stroke="#fff" stroke-width="1.8" stroke-opacity="0.8" paint-order="stroke">Campinas</text>
<text x="752" y="374.6" font-size="9" fill="#444" text-anchor="middle" font-weight="normal" letter-spacing="0" stroke="#fff" stroke-width="1.8" stroke-opacity="0.8" paint-order="stroke">São Paulo</text>
<text x="733" y="327.9" font-size="6.5" fill="#5d5d5d" text-anchor="end" font-weight="normal" letter-spacing="0" stroke="#fff" stroke-width="1.8" stroke-opacity="0.8" paint-order="stroke">São Carlos</text>
<circle cx="712" cy="331" r="1.5" fill="#fff" stroke="#6d6d6d" stroke-width="0.8"></circle>
<text x="740.6" y="302.7" font-size="6.5" fill="#5d5d5d" text-anchor="end" font-weight="normal" letter-spacing="0" stroke="#fff" stroke-width="1.8" stroke-opacity="0.8" paint-order="stroke">Ribeirão Preto</text>
<text x="728.8" y="260.3" font-size="6.5" fill="#5d5d5d" text-anchor="end" font-weight="normal" letter-spacing="0" stroke="#fff" stroke-width="1.8" stroke-opacity="0.8" paint-order="stroke">Uberaba</text>
<circle cx="716" cy="264" r="1.5" fill="#fff" stroke="#6d6d6d" stroke-width="0.8"></circle>
<text x="722.4" y="236.1" font-size="6.5" fill="#5d5d5d" text-anchor="end" font-weight="normal" letter-spacing="0" stroke="#fff" stroke-width="1.8" stroke-opacity="0.8" paint-order="stroke">ândia</text>
<circle cx="707" cy="239.7" r="1.5" fill="#fff" stroke="#6d6d6d" stroke-width="0.8"></circle>
<text x="722" y="202.3" font-size="6.5" fill="#5d5d5d" text-anchor="end" font-weight="normal" letter-spacing="0" stroke="#fff" stroke-width="1.8" stroke-opacity="0.8" paint-order="stroke">vas</text>
<text x="710" y="343.1" font-size="8.5" fill="#444" text-anchor="end" font-weight="normal" letter-spacing="0" stroke="#fff" stroke-width="1.8" stroke-opacity="0.8" paint-order="stroke">O</text>
<text x="627" y="496.7" font-size="7.5" fill="#5a5a5a" text-anchor="middle" letter-spacing="0.9" stroke="#fff" stroke-width="1.8" stroke-opacity="0.8" paint-order="stroke">CATARINA</text>
<text x="627" y="496.7" font-size="7.5" fill="#5a5a5a" text-anchor="middle" letter-spacing="0.9" stroke="#5a5a5a" stroke-width="0.15">CATARINA</text>
<text x="699" y="499.3" font-size="6.5" fill="#5d5d5d" text-anchor="middle" font-weight="normal" letter-spacing="0" stroke="#fff" stroke-width="1.8" stroke-opacity="0.8" paint-order="stroke">Florianópolis</text>
<circle cx="699" cy="503" r="1.5" fill="#fff" stroke="#6d6d6d" stroke-width="0.8"></circle>
<text x="592" y="520.3" font-size="6.5" fill="#5d5d5d" text-anchor="middle" font-weight="normal" letter-spacing="0" stroke="#fff" stroke-width="1.8" stroke-opacity="0.8" paint-order="stroke">Passo Fundo</text>
<circle cx="592" cy="524" r="1.5" fill="#fff" stroke="#6d6d6d" stroke-width="0.8"></circle>
<text x="675.8" y="533.3" font-size="6.5" fill="#5d5d5d" text-anchor="middle" font-weight="normal" letter-spacing="0" stroke="#fff" stroke-width="1.8" stroke-opacity="0.8" paint-order="stroke">Criciúma</text>
<circle cx="675.8" cy="536.6" r="1.5" fill="#fff" stroke="#6d6d6d" stroke-width="0.8"></circle>
<text x="579" y="545.7" font-size="7.5" fill="#5a5a5a" text-anchor="middle" letter-spacing="0.9" stroke="#fff" stroke-width="1.8" stroke-opacity="0.8" paint-order="stroke">RIO GRANDE</text>
<text x="579" y="545.7" font-size="7.5" fill="#5a5a5a" text-anchor="middle" letter-spacing="0.9" stroke="#5a5a5a" stroke-width="0.15">RIO GRANDE</text>
<text x="579" y="554.7" font-size="7.5" fill="#5a5a5a" text-anchor="middle" letter-spacing="0.9" stroke="#fff" stroke-width="1.8" stroke-opacity="0.8" paint-order="stroke">DO SUL</text>
<text x="579" y="554.7" font-size="7.5" fill="#5a5a5a" text-anchor="middle" letter-spacing="0.9" stroke="#5a5a5a" stroke-width="0.15">DO SUL</text>
<text x="646" y="554.7" font-size="6.5" fill="#5d5d5d" text-anchor="middle" font-weight="normal" letter-spacing="0" stroke="#fff" stroke-width="1.8" stroke-opacity="0.8" paint-order="stroke">Caxias do Sul</text>
<circle cx="626" cy="552.4" r="1.5" fill="#fff" stroke="#6d6d6d" stroke-width="0.8"></circle>
<text x="554" y="565.9" font-size="6.5" fill="#5d5d5d" text-anchor="middle" font-weight="normal" letter-spacing="0" stroke="#fff" stroke-width="1.8" stroke-opacity="0.8" paint-order="stroke">Santa Maria</text>
<circle cx="553" cy="569" r="1.5" fill="#fff" stroke="#6d6d6d" stroke-width="0.8"></circle>
<text x="623" y="576.1" font-size="8.5" fill="#333" text-anchor="middle" font-weight="normal" letter-spacing="0" stroke="#fff" stroke-width="1.8" stroke-opacity="0.8" paint-order="stroke">Porto Alegre</text>
<text x="463" y="579.3" font-size="6.5" fill="#5d5d5d" text-anchor="middle" font-weight="normal" letter-spacing="0" stroke="#fff" stroke-width="1.8" stroke-opacity="0.8" paint-order="stroke">Uruguaiana</text>
<circle cx="462" cy="570" r="1.5" fill="#fff" stroke="#6d6d6d" stroke-width="0.8"></circle>
<text x="495" y="503.3" font-size="6.5" fill="#5d5d5d" text-anchor="middle" font-weight="normal" letter-spacing="0" stroke="#fff" stroke-width="1.8" stroke-opacity="0.8" paint-order="stroke">Posadas</text>
<circle cx="495" cy="495" r="1.5" fill="#fff" stroke="#6d6d6d" stroke-width="0.8"></circle>
<text x="437" y="536.9" font-size="7.5" fill="#5a5a5a" text-anchor="middle" letter-spacing="0.9" stroke="#fff" stroke-width="1.8" stroke-opacity="0.8" paint-order="stroke">CORRIENTES</text>
<text x="437" y="536.9" font-size="7.5" fill="#5a5a5a" text-anchor="middle" letter-spacing="0.9" stroke="#5a5a5a" stroke-width="0.15">CORRIENTES</text>
<text x="82" y="541.7" font-size="6.5" fill="#5d5d5d" text-anchor="middle" font-weight="normal" letter-spacing="0" stroke="#fff" stroke-width="1.8" stroke-opacity="0.8" paint-order="stroke">Vallenar</text>
<text x="172.7" y="549.3" font-size="6.5" fill="#5d5d5d" text-anchor="middle" font-weight="normal" letter-spacing="0" stroke="#fff" stroke-width="1.8" stroke-opacity="0.8" paint-order="stroke">Chilecito</text>
<circle cx="172.7" cy="551.4" r="1.5" fill="#fff" stroke="#6d6d6d" stroke-width="0.8"></circle>
<text x="190.5" y="557.0" font-size="6.5" fill="#5d5d5d" text-anchor="middle" font-weight="normal" letter-spacing="0" stroke="#fff" stroke-width="1.8" stroke-opacity="0.8" paint-order="stroke">Rioja</text>
<circle cx="190.5" cy="560.5" r="1.5" fill="#fff" stroke="#6d6d6d" stroke-width="0.8"></circle>
<text x="186.4" y="578.3" font-size="7.5" fill="#5a5a5a" text-anchor="middle" letter-spacing="0.9" stroke="#fff" stroke-width="1.8" stroke-opacity="0.8" paint-order="stroke">RIOJA</text>
<text x="186.4" y="578.3" font-size="7.5" fill="#5a5a5a" text-anchor="middle" letter-spacing="0.9" stroke="#5a5a5a" stroke-width="0.15">RIOJA</text>
<text x="187" y="490.3" font-size="7.5" fill="#5a5a5a" text-anchor="middle" letter-spacing="0.9" stroke="#fff" stroke-width="1.8" stroke-opacity="0.8" paint-order="stroke">CATAMARCA</text>
<text x="187" y="490.3" font-size="7.5" fill="#5a5a5a" text-anchor="middle" letter-spacing="0.9" stroke="#5a5a5a" stroke-width="0.15">CATAMARCA</text>
<text x="54" y="572.3" font-size="6.5" fill="#5d5d5d" text-anchor="start" font-weight="normal" letter-spacing="0" stroke="#fff" stroke-width="1.8" stroke-opacity="0.8" paint-order="stroke">La</text>
<g transform="translate(620,158)"><path d="M0,15.6 C-1.9,9.9 -7.6,5.7 -7.6,0 A7.6,7.6 0 1 1 7.6,0 C7.6,5.7 1.9,9.9 0,15.6Z" fill="#e8d213" stroke="none" stroke-width="0.6"></path><text x="0" y="2.5" font-size="7" font-weight="bold" fill="#fff" text-anchor="middle">1</text></g>
<g transform="translate(714,134)"><path d="M0,16.4 C-2.0,10.4 -8,6.0 -8,0 A8,8 0 1 1 8,0 C8,6.0 2.0,10.4 0,16.4Z" fill="#dd1111" stroke="none" stroke-width="0.6"></path><text x="0" y="2.5" font-size="7" font-weight="bold" fill="#fff" text-anchor="middle"></text></g>
<g transform="translate(712,136)"><path d="M0,15.6 C-1.9,9.9 -7.6,5.7 -7.6,0 A7.6,7.6 0 1 1 7.6,0 C7.6,5.7 1.9,9.9 0,15.6Z" fill="#4a6ee0" stroke="none" stroke-width="0.6"></path><text x="0" y="2.5" font-size="7" font-weight="bold" fill="#fff" text-anchor="middle">1</text></g>
<g transform="translate(670,163)"><path d="M0,15 C-1.5,10 -7.5,6 -7.5,0 A7.5,7.5 0 1 1 7.5,0 C7.5,6 1.5,10 0,15Z" fill="#5f7d2c"></path><circle cx="0" cy="0" r="4.8" fill="#fff"></circle><circle cx="0" cy="0" r="3" fill="#333"></circle></g>
<g transform="translate(678,160)"><path d="M0,17.4 C-2.1,11.1 -8.5,6.4 -8.5,0 A8.5,8.5 0 1 1 8.5,0 C8.5,6.4 2.1,11.1 0,17.4Z" fill="#fb0808" stroke="none" stroke-width="0.6"></path><text x="0" y="2.5" font-size="7" font-weight="bold" fill="#fff" text-anchor="middle">1</text></g>
<g transform="translate(830.3,159.6)"><path d="M0,15.6 C-1.9,9.9 -7.6,5.7 -7.6,0 A7.6,7.6 0 1 1 7.6,0 C7.6,5.7 1.9,9.9 0,15.6Z" fill="#fb0808" stroke="none" stroke-width="0.6"></path><text x="0" y="2.5" font-size="7" font-weight="bold" fill="#fff" text-anchor="middle">5</text></g>
<g transform="translate(798.8,180)"><path d="M0,15.6 C-1.9,9.9 -7.6,5.7 -7.6,0 A7.6,7.6 0 1 1 7.6,0 C7.6,5.7 1.9,9.9 0,15.6Z" fill="#fb0808" stroke="none" stroke-width="0.6"></path><text x="0" y="2.5" font-size="7" font-weight="bold" fill="#fff" text-anchor="middle">1</text></g>
<g transform="translate(895,264)"><path d="M0,15.6 C-1.9,9.9 -7.6,5.7 -7.6,0 A7.6,7.6 0 1 1 7.6,0 C7.6,5.7 1.9,9.9 0,15.6Z" fill="#22c55e" stroke="none" stroke-width="0.6"></path><text x="0" y="2.5" font-size="7" font-weight="bold" fill="#fff" text-anchor="middle">3</text></g>
<g transform="translate(719.7,289)"><path d="M0,17.4 C-2.1,11.1 -8.5,6.4 -8.5,0 A8.5,8.5 0 1 1 8.5,0 C8.5,6.4 2.1,11.1 0,17.4Z" fill="#c40a0a" stroke="none" stroke-width="0.6"></path><text x="0" y="2.5" font-size="7" font-weight="bold" fill="#fff" text-anchor="middle"></text></g>
<g transform="translate(719.7,292)"><path d="M0,17.4 C-2.1,11.1 -8.5,6.4 -8.5,0 A8.5,8.5 0 1 1 8.5,0 C8.5,6.4 2.1,11.1 0,17.4Z" fill="#fb0808" stroke="none" stroke-width="0.6"></path><text x="0" y="2.5" font-size="7" font-weight="bold" fill="#fff" text-anchor="middle">1</text></g>
<g transform="translate(754.5,297)"><path d="M0,15.6 C-1.9,9.9 -7.6,5.7 -7.6,0 A7.6,7.6 0 1 1 7.6,0 C7.6,5.7 1.9,9.9 0,15.6Z" fill="#fb0808" stroke="none" stroke-width="0.6"></path><text x="0" y="2.5" font-size="7" font-weight="bold" fill="#fff" text-anchor="middle">1</text></g>
<g transform="translate(723,339)"><path d="M0,15.6 C-1.9,9.9 -7.6,5.7 -7.6,0 A7.6,7.6 0 1 1 7.6,0 C7.6,5.7 1.9,9.9 0,15.6Z" fill="#22c55e" stroke="none" stroke-width="0.6"></path><text x="0" y="2.5" font-size="7" font-weight="bold" fill="#fff" text-anchor="middle">1</text></g>
<g transform="translate(790,341.5)"><path d="M0,15.6 C-1.9,9.9 -7.6,5.7 -7.6,0 A7.6,7.6 0 1 1 7.6,0 C7.6,5.7 1.9,9.9 0,15.6Z" fill="#fb0808" stroke="none" stroke-width="0.6"></path><text x="0" y="2.5" font-size="7" font-weight="bold" fill="#fff" text-anchor="middle">4</text></g>
<g transform="translate(780.3,339)"><path d="M0,15.6 C-1.9,9.9 -7.6,5.7 -7.6,0 A7.6,7.6 0 1 1 7.6,0 C7.6,5.7 1.9,9.9 0,15.6Z" fill="#fb0808" stroke="none" stroke-width="0.6"></path><text x="0" y="2.5" font-size="7" font-weight="bold" fill="#fff" text-anchor="middle">3</text></g>
<g transform="translate(752,362)"><path d="M0,18.4 C-2.2,11.7 -9,6.8 -9,0 A9,9 0 1 1 9,0 C9,6.8 2.2,11.7 0,18.4Z" fill="#6a8a30" stroke="none" stroke-width="0.6"></path><text x="0" y="2.5" font-size="7" font-weight="bold" fill="#fff" text-anchor="middle"></text></g>
<g transform="translate(749,360)"><path d="M0,18.4 C-2.2,11.7 -9,6.8 -9,0 A9,9 0 1 1 9,0 C9,6.8 2.2,11.7 0,18.4Z" fill="#c40a0a" stroke="none" stroke-width="0.6"></path><text x="0" y="2.5" font-size="7" font-weight="bold" fill="#fff" text-anchor="middle"></text></g>
<g transform="translate(749,366)"><path d="M0,19.5 C-2.4,12.3 -9.5,7.1 -9.5,0 A9.5,9.5 0 1 1 9.5,0 C9.5,7.1 2.4,12.3 0,19.5Z" fill="#fb0808" stroke="none" stroke-width="0.6"></path><text x="0" y="2.5" font-size="7" font-weight="bold" fill="#fff" text-anchor="middle">1</text></g>
<g transform="translate(626,563)"><path d="M0,16.4 C-2.0,10.4 -8,6.0 -8,0 A8,8 0 1 1 8,0 C8,6.0 2.0,10.4 0,16.4Z" fill="#3b5fc9" stroke="none" stroke-width="0.6"></path><text x="0" y="2.5" font-size="7" font-weight="bold" fill="#fff" text-anchor="middle"></text></g>
<g transform="translate(625.8,560.8)"><path d="M0,15.6 C-1.9,9.9 -7.6,5.7 -7.6,0 A7.6,7.6 0 1 1 7.6,0 C7.6,5.7 1.9,9.9 0,15.6Z" fill="#fb0808" stroke="none" stroke-width="0.6"></path><text x="0" y="2.5" font-size="7" font-weight="bold" fill="#fff" text-anchor="middle">1</text></g>
<g transform="translate(649.5,497.6)"><path d="M0,10.5 C-1.5,7 -7.5,4.5 -7.5,0 A7.5,7.5 0 1 1 7.5,0 C7.5,4.5 1.5,7 0,10.5Z" fill="#5f7d2c"></path><circle cx="0" cy="0" r="5" fill="#fff"></circle><path d="M-3,0.5 L0,-2.8 L3,0.5 L3,3 L-3,3Z" fill="#333"></path></g>
</g>
</svg>

<!-- google logo + attribution -->
<div class="abs nw" style="left:60px;top:565px;font-size:10px;font-weight:bold;letter-spacing:-0.3px"><span style="color:#4285f4">G</span><span style="color:#ea4335">o</span><span style="color:#fbbc05">o</span><span style="color:#4285f4">g</span><span style="color:#34a853">l</span><span style="color:#ea4335">e</span></div>
<div class="abs nw" style="left:1105px;top:572px;height:8px;width:57px;background:rgba(255,255,255,.7);font-size:5.5px;color:#444;padding-left:2px;line-height:8px">Atalhos do teclado</div>
<div class="abs nw" style="left:1164px;top:572px;height:8px;width:99px;background:rgba(255,255,255,.7);font-size:5.5px;color:#444;padding-left:2px;line-height:8px">Dados cartográficos ©2025 Google</div>
<div class="abs nw" style="left:1267px;top:572px;height:8px;width:25px;background:rgba(255,255,255,.7);font-size:5.5px;color:#444;padding-left:2px;line-height:8px">Termos</div>

<!-- search btn -->
<div class="abs" style="left:54px;top:55px;width:23px;height:25px;background:#fff;border-radius:0 3px 3px 0"></div>
<svg class="abs" style="left:60px;top:62px" width="11" height="11" viewBox="0 0 11 11"><circle cx="4.5" cy="4.5" r="3" fill="none" stroke="#444" stroke-width="1.3"></circle><path d="M6.8,6.8 L9.5,9.5" stroke="#444" stroke-width="1.5"></path></svg>

<!-- drawing tools -->
<div class="abs" style="left:645px;top:562px;width:59px;height:14px;background:#fff;border-radius:2px"></div>
<svg class="abs" style="left:645px;top:562px" width="59" height="14" viewBox="0 0 59 14">
<path d="M4.5,11.5 C3,9.5 2.5,7.5 3.2,6.5 C3.8,5.8 4.6,6.3 5,7 L5,4 C5,3 6.3,3 6.5,4 L6.6,3.2 C6.8,2.2 8.1,2.3 8.2,3.2 L8.3,3.6 C8.6,2.8 9.8,2.9 9.9,3.8 L10,4.6 C10.3,4 11.4,4.1 11.4,5 L11.4,8.5 C11.4,10.5 10.5,12 9.5,12.5 L5.5,12.5Z" fill="none" stroke="#444" stroke-width="0.75"></path>
<circle cx="4" cy="7.4" r="0.6" fill="#222"></circle>
<line x1="14" y1="2" x2="14" y2="12" stroke="#eee" stroke-width="0.6"></line>
<line x1="28.9" y1="2" x2="28.9" y2="12" stroke="#eee" stroke-width="0.6"></line>
<line x1="43.7" y1="2" x2="43.7" y2="12" stroke="#eee" stroke-width="0.6"></line>
<path d="M18.2,4 L20.2,10.8 L25.8,9.3 L26,6.2 L22,8.2Z" fill="#bbb" stroke="#666" stroke-width="0.7" stroke-linejoin="round"></path>
<circle cx="36.6" cy="7.5" r="3.5" fill="#bbb" stroke="#666" stroke-width="0.7"></circle>
<rect x="48.5" y="4" width="6.5" height="7" fill="#bbb" stroke="#666" stroke-width="0.7"></rect>
</svg>
<div class="abs" style="left:707px;top:562px;width:13px;height:14px;background:#fff;border-radius:2px"></div>
<svg class="abs" style="left:707px;top:562px" width="13" height="14"><path d="M1.5,9.5 L10,4 L11.5,6.3 L3,11.8Z" fill="#555"></path><path d="M3.5,8.2 L4.3,9.4 M5.2,7.1 L6,8.3 M6.9,6 L7.7,7.2 M8.6,4.9 L9.4,6.1" stroke="#ddd" stroke-width="0.5"></path></svg>

<!-- top bar content -->
<div class="abs" style="left:14px;top:2px;width:9px;height:1.3px;background:#6a7fc2"></div>
<div class="abs" style="left:14px;top:6px;width:17px;height:1.3px;background:#6a7fc2"></div>
<div class="abs" style="left:14px;top:11px;width:13px;height:1.3px;background:#6a7fc2"></div>
<div class="abs tb nw" style="left: 181.4px; top: 1.9px; transform-origin: 0px 50%; transform: scaleX(0.988);">Ambiente:</div>
<div class="abs tb nw" style="left: 365.8px; top: 1.9px; transform-origin: 0px 50%; transform: scaleX(0.943);">Usuário:</div>
<div class="abs tb nw" style="left: 549.8px; top: 1.9px; transform-origin: 0px 50%; transform: scaleX(0.917);">Versão:</div>
<div class="abs" style="left:975.5px;top:-4.3px;width:21.8px;height:21.8px;border-radius:50%;background:#4b54f0"></div>
<svg class="abs" style="left:980.5px;top:0.5px" width="12" height="12" viewBox="0 0 12 12"><path d="M6,1 C8.9,1 11,3 11,5.6 C11,8.3 8.9,10.3 6,10.3 L1.5,10.5 L2.4,8.8 C1.5,8 1,6.9 1,5.6 C1,3 3.1,1 6,1Z" fill="#fff"></path><path d="M4.2,6.3 Q6,8.3 7.8,6.3Z" fill="#4b54f0"></path></svg>
<div class="abs" style="left:991.5px;top:-3.5px;width:6px;height:6px;border-radius:50%;background:#e0302a"></div>
<!-- right top icons -->
<svg class="abs" style="left:1180px;top:0" width="112" height="14" viewBox="0 0 112 14">
<path d="M3.5,9.5 L3.5,6 C3.5,4 4.8,2.8 7,2.8 C9.2,2.8 10.5,4 10.5,6 L10.5,9.5 L11.5,10.3 L2.5,10.3Z" fill="#8a8a8a"></path>
<circle cx="7" cy="11.2" r="1" fill="#8a8a8a"></circle>
<path d="M26.5,5.8 L30,2.5 L33.5,5.8 M27.5,5 L27.5,8.8 L32.5,8.8 L32.5,5 M29.2,8.8 L29.2,6.8 L30.8,6.8 L30.8,8.8" fill="none" stroke="#8a8a8a" stroke-width="0.9"></path>
<path d="M49.5,8.5 L54.5,3.5 L56,5 L51,10 L49,10.5Z" fill="none" stroke="#8a8a8a" stroke-width="0.9"></path>
<circle cx="75.2" cy="5.8" r="2.6" fill="none" stroke="#8a8a8a" stroke-width="1.3" stroke-dasharray="1.3 0.8"></circle>
<circle cx="75.2" cy="5.8" r="1" fill="none" stroke="#8a8a8a" stroke-width="0.7"></circle>
<path d="M95,2.8 L95,8.8 M95,3.2 L99.5,8.5 M99.5,2.8 L99.5,8.8 M97.2,2.5 L97.2,9" fill="none" stroke="#8a8a8a" stroke-width="0.9"></path>
</svg>
<div class="abs" style="left:1187px;top:-3px;width:12.5px;height:12.5px;border-radius:50%;background:#cf3a2e;color:#fff;font-size:6.5px;font-weight:bold;text-align:center;line-height:12px">6</div>

<!-- green bar content -->
<div class="abs nw" style="left: 59.2px; top: 26.1px; font-size: 10px; font-weight: bold; color: rgb(255, 255, 255); transform-origin: 0px 50%; transform: scaleX(0.962);">Roteirização</div>
<div class="abs" style="left:131px;top:23px;width:1px;height:17px;background:#cfd9bf"></div>
<svg class="abs" style="left:141px;top:26px" width="11" height="10" viewBox="0 0 11 10"><path d="M1,5 L5.5,1 L10,5 M2.5,4 L2.5,9 L8.5,9 L8.5,4 M4.5,9 L4.5,6.5 L6.5,6.5 L6.5,9" fill="none" stroke="#fff" stroke-width="1"></path></svg>
<div class="abs nw" style="left: 164.3px; top: 27.5px; font-size: 8px; color: rgb(255, 255, 255); transform-origin: 0px 50%; transform: scaleX(0.98);">- Mapa de Roteirização</div>
<div class="abs" style="left:1267px;top:24px;width:16px;height:16px;border-radius:50%;background:#fff"></div>
<div class="abs" style="left:1274.3px;top:28px;width:1.6px;height:5.5px;background:#4a6a2a;border-radius:1px"></div>
<div class="abs" style="left:1274.3px;top:34.5px;width:1.6px;height:1.6px;background:#4a6a2a;border-radius:1px"></div>

<!-- sidebar -->
<div class="abs" style="left:0;top:40px;width:46px;height:26px;background:#f5f6fa"></div>
<svg class="abs" style="left:0;top:40px" width="46" height="300" viewBox="0 0 46 300" fill="none" stroke="#a0a5c4" stroke-width="1">
<path d="M18,8 L21,7 L25,8 L28,7 L28,16 L25,17 L21,16 L18,17Z M21,7 L21,16 M25,8 L25,17" stroke="#5b66b8" stroke-width="1.2"></path>
<circle cx="24" cy="37" r="3.5"></circle><path d="M21.5,39.5 L19,42"></path>
<path d="M19,70 L19,62 L21,62 L21,70 M21,70 L21,60 L24,60 L24,70 M24,70 L24,64 L27,64 L27,70 M18,70 L28,70" stroke-width="1" fill="#b9bedb"></path>
<path d="M19,89 L28,89 M19,92 L28,92 M19,95 L28,95 M19,98 L28,98 M19,87 L19,100"></path>
<path d="M19,116 L19,125 L28,125 L28,118 M22,121 L28,114"></path>
<path d="M19,141 L25,141 L28,144 L28,153 L19,153Z M22,147 L25,147"></path>
<circle cx="23.5" cy="170" r="2.5"></circle><path d="M23.5,172.5 L23.5,177"></path>
<circle cx="25" cy="196" r="2.8"></circle><path d="M22.8,198.2 L19,202 M25,199 L27,201"></path>
<path d="M18,222.5 L22,226.5 L29,219.5 M18,227.5 L22,231.5 L29,224.5" stroke-width="1.9" stroke="#a4a8c4"></path>
<rect x="17" y="248" width="12.5" height="9" rx="1" fill="#a4a8c4" stroke="none"></rect><path d="M18,251 L28.5,251 M18,254 L28.5,254 M22.5,251 L22.5,256" stroke="#fff" stroke-width="0.9"></path>
<path d="M23,274.5 L29.5,277.8 L29.5,284.5 L23,287.8 L16.5,284.5 L16.5,277.8Z" fill="#a4a8c4" stroke="none"></path><path d="M17,278 L23,281 L29,278 M23,281 L23,287.5" stroke="#fff" stroke-width="0.9"></path>
</svg>

<!-- panel -->
<div class="abs panel"></div>
<div class="abs nw" style="left: 96px; top: 178.5px; font-size: 9.5px; color: rgb(122, 122, 122); -webkit-text-stroke: 0.35px rgb(122, 122, 122); transform-origin: 0px 50%; transform: scaleX(0.926);">Pré-Cargas</div>
<div class="abs nw" style="left: 182px; top: 178.5px; font-size: 9.5px; color: rgb(42, 42, 42); -webkit-text-stroke: 0.4px rgb(42, 42, 42); transform-origin: 0px 50%; transform: scaleX(0.951);">Carregamentos Gravados</div>
<div class="abs" style="left:69px;top:198px;width:622px;height:1px;background:#eee"></div>
<div class="abs" style="left:167px;top:197.3px;width:134px;height:1.6px;background:#7a90cc"></div>
<div class="abs" style="left:69px;top:233px;width:622px;height:1px;background:#e8e8e8"></div>
<div class="abs" style="left:69px;top:257px;width:622px;height:1px;background:#e8e8e8"></div>
<svg class="abs" style="left:568px;top:177px" width="15" height="11" viewBox="0 0 15 11"><rect x="1" y="1" width="11" height="7" rx="1" fill="#eef" stroke="#555" stroke-width="0.9"></rect><path d="M3,4 L9,4" stroke="#555" stroke-width="1.2" stroke-dasharray="1 1"></path><rect x="10" y="6" width="4" height="4" fill="#fff" stroke="#4a6fb5" stroke-width="0.9"></rect></svg>
<div class="abs nw" style="left: 585px; top: 178.5px; font-size: 7px; color: rgb(43, 93, 168); -webkit-text-stroke: 0.2px rgb(43, 93, 168); transform-origin: 0px 50%; transform: scaleX(0.94);">Compartilhe sua opinião</div>
<svg class="abs" style="left:665px;top:177px" width="9" height="9" viewBox="0 0 9 9"><rect x="0" y="0" width="4" height="5" fill="#222"></rect><rect x="5" y="0" width="4" height="3" fill="#222"></rect><rect x="0" y="6" width="4" height="3" fill="#222"></rect><rect x="5" y="4" width="4" height="5" fill="#222"></rect></svg>
<div class="abs" style="left:689px;top:177px;width:9px;height:9px;border:1.2px solid #333;border-radius:1px"></div>
<div class="th" style="left:91px">#</div>
<div class="th" style="left: 118px; top: 210.5px; transform-origin: 0px 50%; transform: scaleX(1.062);">Situação</div>
<div class="th" style="left: 162px; top: 210.5px; transform-origin: 0px 50%; transform: scaleX(0.9);">COR</div>
<div class="th" style="left: 190px; top: 210.5px; transform-origin: 0px 50%; transform: scaleX(1.064);">Carregamento</div>
<div class="th" style="left: 257px; top: 210.5px; transform-origin: 0px 50%; transform: scaleX(1.022);">Destino</div>
<div class="th" style="left: 369px; top: 210.5px; transform-origin: 0px 50%; transform: scaleX(1.032);">Veículo</div>
<div class="th" style="left: 524.3px; top: 210.5px; transform-origin: 0px 50%; transform: scaleX(1.093);">Motorista</div>
<div class="th" style="left: 656px; top: 210.5px; transform-origin: 0px 50%; transform: scaleX(1.024);">Qtd. Entre</div>
<svg class="abs" style="left:86.5px;top:239.5px" width="15" height="11" viewBox="-0.5 -0.5 15 11"><path d="M0.5,5 C3,1 11,1 13.5,5 C11,9 3,9 0.5,5Z" fill="#111"></path><circle cx="7" cy="5" r="2.6" fill="#fff"></circle><circle cx="7" cy="5" r="1.6" fill="#111"></circle></svg>
<svg class="abs" style="left:128px;top:241px" width="12" height="8" viewBox="0 0 12 8"><rect x="0" y="0.5" width="7" height="5" fill="#222"></rect><path d="M7,2 L9.5,2 L11.5,4 L11.5,5.5 L7,5.5Z" fill="#222"></path><circle cx="2.5" cy="6.3" r="1.4" fill="#222"></circle><circle cx="9" cy="6.3" r="1.4" fill="#222"></circle></svg>
<svg class="abs" style="left:165px;top:239px" width="8" height="11" viewBox="0 0 8 11"><path d="M4,10.5 C2,7.5 0.5,5.5 0.5,4 A3.5,3.5 0 0 1 7.5,4 C7.5,5.5 6,7.5 4,10.5Z" fill="#9a9a9a"></path><circle cx="4" cy="4" r="1.3" fill="#fff"></circle></svg>
<div class="abs" style="left:184px;top:233px;width:72px;height:26px;border:2px solid #e8141b"></div>
<div class="td" style="left: 190px; top: 241px; transform-origin: 0px 50%; transform: scaleX(0.988);">5005472, 5005473</div>
<div class="td" style="left: 257px; top: 241px; transform-origin: 0px 50%; transform: scaleX(0.928);">CARREGAMENTO+REENTREGA</div>
<div class="td" style="left: 369px; top: 241px; transform-origin: 0px 50%; transform: scaleX(0.928);">(DELLEON) 13 QFB2874 ACCELO 815 M.BENZ</div>
<div class="td" style="left: 524.3px; top: 241px; transform-origin: 0px 50%; transform: scaleX(0.946);">CICERO DELLEON PAZ DE ANDRADE</div>
<div class="td" style="left: 683px; top: 241px; transform-origin: 0px 50%; transform: scaleX(0.959);">2</div>
<!-- red arrow -->
<svg class="abs" style="left:110px;top:130px" width="80" height="60" viewBox="0 0 80 60"><path d="M15.4,8.1 L60,44" stroke="#f5050a" stroke-width="2.3" stroke-linecap="round"></path><path d="M67,49.5 L55.8,47.2 L62.4,39.1Z" fill="#f5050a"></path></svg>
<div class="abs" style="left:54.8px;top:328px;width:10.4px;height:17.5px;background:#3452a9"></div>
<svg class="abs" style="left:54.8px;top:328px" width="10.4" height="17.5"><path d="M6.2,5.6 L3.6,8.8 L6.2,12" fill="none" stroke="#fff" stroke-width="1.5"></path></svg>
<!-- scrollbar -->
<div class="abs" style="left:69px;top:437px;width:622px;height:10px;background:#fafafa"></div>
<svg class="abs" style="left:71px;top:438px" width="8" height="8"><path d="M6,1 L6,7 L1.5,4Z" fill="#777"></path></svg>
<svg class="abs" style="left:682px;top:438px" width="8" height="8"><path d="M2,1 L2,7 L6.5,4Z" fill="#777"></path></svg>
<div class="abs" style="left:82px;top:439px;width:315px;height:6px;border-radius:3px;background:#8a8a8a"></div>
<div class="abs nw" style="left: 69.7px; top: 458.8px; font-size: 9px; font-weight: bold; color: rgb(34, 34, 34); transform-origin: 0px 50%; transform: scaleX(0.925);">Pré-cargas (0) / Pedidos (0)</div>
<div class="abs" style="left:538px;top:453px;width:39px;height:22px;background:#fff;border-radius:3px;box-shadow:0 1.5px 2px rgba(0,0,0,.28)"></div>
<svg class="abs" style="left:550.5px;top:458.5px" width="14" height="10" viewBox="0 0 14 10"><path d="M0.5,5 C3,1 11,1 13.5,5 C11,9 3,9 0.5,5Z" fill="#111"></path><circle cx="7" cy="5" r="2.6" fill="#fff"></circle><circle cx="7" cy="5" r="1.6" fill="#111"></circle></svg>
<div class="abs" style="left:583px;top:452px;width:44px;height:24px;background:#fff;border-radius:3px;box-shadow:0 1.5px 2px rgba(0,0,0,.28)"></div>
<svg class="abs" style="left:599px;top:458px" width="13" height="12" viewBox="0 0 13 12"><path fill-rule="evenodd" d="M8.46,5.84 L8.46,6.96 L7.25,7.66 L6.82,8.41 L6.82,9.81 L5.85,10.37 L4.63,9.67 L3.77,9.67 L2.55,10.37 L1.58,9.81 L1.58,8.41 L1.15,7.66 L-0.06,6.96 L-0.06,5.84 L1.15,5.14 L1.58,4.39 L1.58,2.99 L2.55,2.43 L3.77,3.13 L4.63,3.13 L5.85,2.43 L6.82,2.99 L6.82,4.39 L7.25,5.14Z M5.7,6.4 A1.5,1.5 0 1 0 2.7,6.4 A1.5,1.5 0 1 0 5.7,6.4Z" fill="#111"></path><circle cx="9.6" cy="3.8" r="1.5" fill="none" stroke="#111" stroke-width="1.1"></circle><circle cx="9.6" cy="9.4" r="1.5" fill="none" stroke="#111" stroke-width="1.1"></circle></svg>
<div class="abs" style="left:633px;top:453px;width:55px;height:21px;background:#e0e0e0;border-radius:3px"></div>
<div class="abs nw" style="left: 643px; top: 458.5px; font-size: 9px; color: rgb(170, 170, 170); transform-origin: 0px 50%; transform: scaleX(0.979);">Ações</div>
<svg class="abs" style="left:670px;top:459px" width="10" height="7"><path d="M1,5.5 L5,1.5 L9,5.5" fill="none" stroke="#aaa" stroke-width="1"></path></svg>
<svg class="abs" style="left:697px;top:478px" width="8" height="8"><path d="M7,1 L1,7 M7,4 L4,7" stroke="#999" stroke-width="0.8"></path></svg>

<!-- summary -->
<div class="abs" style="left:54px;top:492px;width:376px;height:42px;background:#fff"></div>
<div class="abs" style="left:55px;top:506px;width:10px;height:18px;background:#3452a9"></div>
<svg class="abs" style="left:55px;top:510px" width="10" height="10"><path d="M6,2 L3.5,5 L6,8" fill="none" stroke="#fff" stroke-width="1.5"></path></svg>
<svg class="abs" style="left:54px;top:494px" width="376" height="22" viewBox="0 0 376 22" fill="none" stroke="#777" stroke-width="0.8">
<path d="M39.5,7 C39.5,4 43.5,4 43.5,7"></path><path d="M36,7 L47,7 L49.5,18 L34,18Z"></path><text x="41.7" y="15.5" font-size="4.8" fill="#777" stroke="none" text-anchor="middle">Kg</text>
<g stroke="#222" stroke-width="0.7">
<path d="M96.3,4.5 L100,6.3 L100,10.5 L96.3,12.3 L92.6,10.5 L92.6,6.3Z" fill="#fff"></path><path d="M92.6,6.3 L96.3,8.1 L100,6.3 M96.3,8.1 L96.3,12.3"></path><path d="M96.3,8.1 L100,6.3 L100,10.5 L96.3,12.3Z" fill="#555"></path>
<path d="M92,10.5 L95.7,12.3 L95.7,16.5 L92,18.3 L88.3,16.5 L88.3,12.3Z" fill="#fff"></path><path d="M88.3,12.3 L92,14.1 L95.7,12.3 M92,14.1 L92,18.3"></path><path d="M92,14.1 L95.7,12.3 L95.7,16.5 L92,18.3Z" fill="#555"></path>
<path d="M100.6,10.5 L104.3,12.3 L104.3,16.5 L100.6,18.3 L96.9,16.5 L96.9,12.3Z" fill="#fff"></path><path d="M96.9,12.3 L100.6,14.1 L104.3,12.3 M100.6,14.1 L100.6,18.3"></path><path d="M100.6,14.1 L104.3,12.3 L104.3,16.5 L100.6,18.3Z" fill="#555"></path>
</g>
<path d="M128,8 L130,5.8 L139,5.8 L141,8 L141,17.8 L128,17.8Z M128,8 L141,8 M133,5.8 L133,11 L134.5,10 L136,11 L136,5.8 M130.5,13.5 L134,13.5 M130.5,15.5 L133,15.5 M135,15.5 L138,15.5" stroke="#666" stroke-width="0.7"></path>
<path d="M158.5,8 L166,8 L166,16.5 L158.5,16.5Z M166,10.5 L169,10.5 L170.8,13 L170.8,16.5 L166,16.5 M159.5,10.5 L164,10.5 M159.5,12.5 L164,12.5" stroke="#c4c4c4" stroke-width="0.8"></path>
<path d="M193,5 L199,5 L199,11.5 L193,11.5Z M188,11.5 L195.5,11.5 L195.5,19 L188,19Z M195.5,11.5 L203.5,11.5 L203.5,19 L195.5,19Z M196,4.5 L196,7 M191.5,11.5 L191.5,14 M199.5,11.5 L199.5,14" stroke="#777" stroke-width="0.7"></path>
<path d="M242.5,7 L255.5,7 L255.5,15 L242.5,15Z M244.5,9 L253.5,9 L253.5,13 L244.5,13Z M243,16.5 L255,17.5 M243.5,18 L254.5,18.8" stroke="#888" stroke-width="0.8"></path><circle cx="249" cy="11" r="1.5" stroke="#888" stroke-width="0.7"></circle>
<circle cx="307.3" cy="11.6" r="6.8" stroke="#888" stroke-width="0.8"></circle><circle cx="307.3" cy="11.6" r="4.6" stroke="#888" stroke-width="0.8"></circle><text x="307.3" y="14" font-size="6" fill="#888" stroke="none" text-anchor="middle">$</text>
<circle cx="350" cy="11.6" r="6.8" stroke="#888" stroke-width="0.8"></circle><circle cx="350" cy="11.6" r="4.6" stroke="#888" stroke-width="0.8"></circle><text x="350" y="14" font-size="6" fill="#888" stroke="none" text-anchor="middle">$</text>
</svg>
<div class="sum" style="left: 69px; top: 515.1px; transform-origin: 0px 50%; transform: scaleX(0.888);">115065.98 Kg</div>
<div class="sum" style="left: 135.8px; top: 515.1px; transform-origin: 0px 50%; transform: scaleX(1.004);">293 M³</div>
<div class="sum" style="left: 179px; top: 515.1px; transform-origin: 0px 50%; transform: scaleX(0.851);">1370</div>
<div class="sum" style="left: 211.4px; top: 515.1px; transform-origin: 0px 50%; transform: scaleX(0.895);">827</div>
<div class="sum" style="left: 240.4px; top: 515.1px; transform-origin: 0px 50%; transform: scaleX(0.88);">7897</div>
<div class="sum" style="left: 273.5px; top: 515.1px; transform-origin: 0px 50%; transform: scaleX(0.833);">R$ 1.967.914,73</div>
<div class="sum" style="left: 346px; top: 515.1px; transform-origin: 0px 50%; transform: scaleX(0.931);">R$ 0,00</div>
<div class="sum" style="left: 391px; top: 515.1px; transform-origin: 0px 50%; transform: scaleX(0.965);">0.00%</div>
<div class="uline" style="left:69px;width:54px"></div>
<div class="uline" style="left:135px;width:32px"></div>
<div class="uline" style="left:178px;width:19px"></div>
<div class="uline" style="left:210px;width:15px"></div>
<div class="uline" style="left:238px;width:21px"></div>
<div class="uline" style="left:272px;width:61px"></div>
<div class="uline" style="left:344px;width:33px"></div>
<div class="uline" style="left:389px;width:29px"></div>

<!-- fabs -->
<div class="fab" style="left:1264px;top:375px"><svg width="24" height="24"><path d="M12,18 C9.5,15 7.5,13 7.5,10.5 A4.5,4.5 0 0 1 16.5,10.5 C16.5,13 14.5,15 12,18Z" fill="none" stroke="#fff" stroke-width="1.2"></path><path d="M12,8 L12,11 M12,12.3 L12,13" stroke="#fff" stroke-width="1.2"></path></svg></div>
<div class="fab" style="left:1264px;top:409px"><svg width="24" height="24"><rect x="7" y="8" width="10" height="8" fill="none" stroke="#fff" stroke-width="1"></rect><rect x="12.5" y="8" width="4.5" height="3" fill="#fff"></rect></svg></div>
<div class="fab" style="left:1264px;top:443px"><svg width="24" height="24"><path d="M7.5,7.5 L16.5,7.5 L16.5,14 L10,14 L7.5,16.5Z" fill="#fff"></path><path d="M9.5,10 L14.5,10 M9.5,12 L13,12" stroke="#3452a9" stroke-width="0.8"></path></svg></div>
<div class="fab" style="left:1264px;top:477px"><svg width="24" height="24"><path d="M8,8.5 L16,8.5 M8,11.5 L16,11.5 M8,14.5 L16,14.5" stroke="#fff" stroke-width="1.5"></path></svg></div>
<div class="fab" style="left:1264px;top:510px"><svg width="24" height="24"><path d="M7.5,10 L16.5,10 M9.5,12.5 L14.5,12.5 M11,15 L13,15" stroke="#fff" stroke-width="1.2"></path></svg></div>
<div class="abs" style="left:1280px;top:367px;width:14px;height:14px;border-radius:50%;background:#ee3d78;color:#fff;font-size:6.5px;font-weight:bold;line-height:14px;padding-left:2px">324</div>
<div class="abs" style="left:1280px;top:468px;width:14px;height:14px;border-radius:50%;background:#ee3d78;color:#fff;font-size:7px;font-weight:bold;line-height:14px;padding-left:4px">0</div>
<div class="fab" style="left:1212px;top:541px;width:33px;height:33px"><svg width="33" height="33"><circle cx="13.5" cy="13.5" r="3" fill="none" stroke="#fff" stroke-width="1.4"></circle><circle cx="20" cy="13.5" r="3" fill="none" stroke="#fff" stroke-width="1.4"></circle><path d="M8.5,21 C9,17.5 11,16.5 13.5,16.5 C16,16.5 17.5,18 17.5,20.5 M15,19 C16,17 18,16.5 20,16.5 C22.5,16.5 24.5,17.5 25,21" fill="none" stroke="#fff" stroke-width="1.4"></path></svg></div>
<div class="fab" style="left:1259px;top:541px;width:33px;height:33px"><svg width="33" height="33"><path d="M13,15 L17,19 L21,15" fill="none" stroke="#fff" stroke-width="1.8"></path></svg></div>

<!-- footer -->
<svg class="abs" style="left:545px;top:589px" width="30" height="12" viewBox="0 0 30 12"><path d="M1,10.5 L1,2 L3,2 L6.5,7 L10,2 L12,2 L12,10.5 L10,10.5 L10,5.5 L6.5,10 L3,5.5 L3,10.5Z" fill="#222"></path><rect x="15.6" y="1.5" width="1.5" height="4.5" fill="#3ddc84"></rect><rect x="20.2" y="1.5" width="1.5" height="4.5" fill="#2f6bff"></rect><rect x="25.6" y="1.2" width="1.5" height="5" fill="#f0147a"></rect></svg>
<div class="abs nw" style="left: 577px; top: 591.1px; font-size: 7px; color: rgb(153, 153, 153); transform-origin: 0px 50%; transform: scaleX(1.003);">Copyright © 2008-2025. Máxima Sistemas. Todos os direitos reservados.</div>

</body></html>
